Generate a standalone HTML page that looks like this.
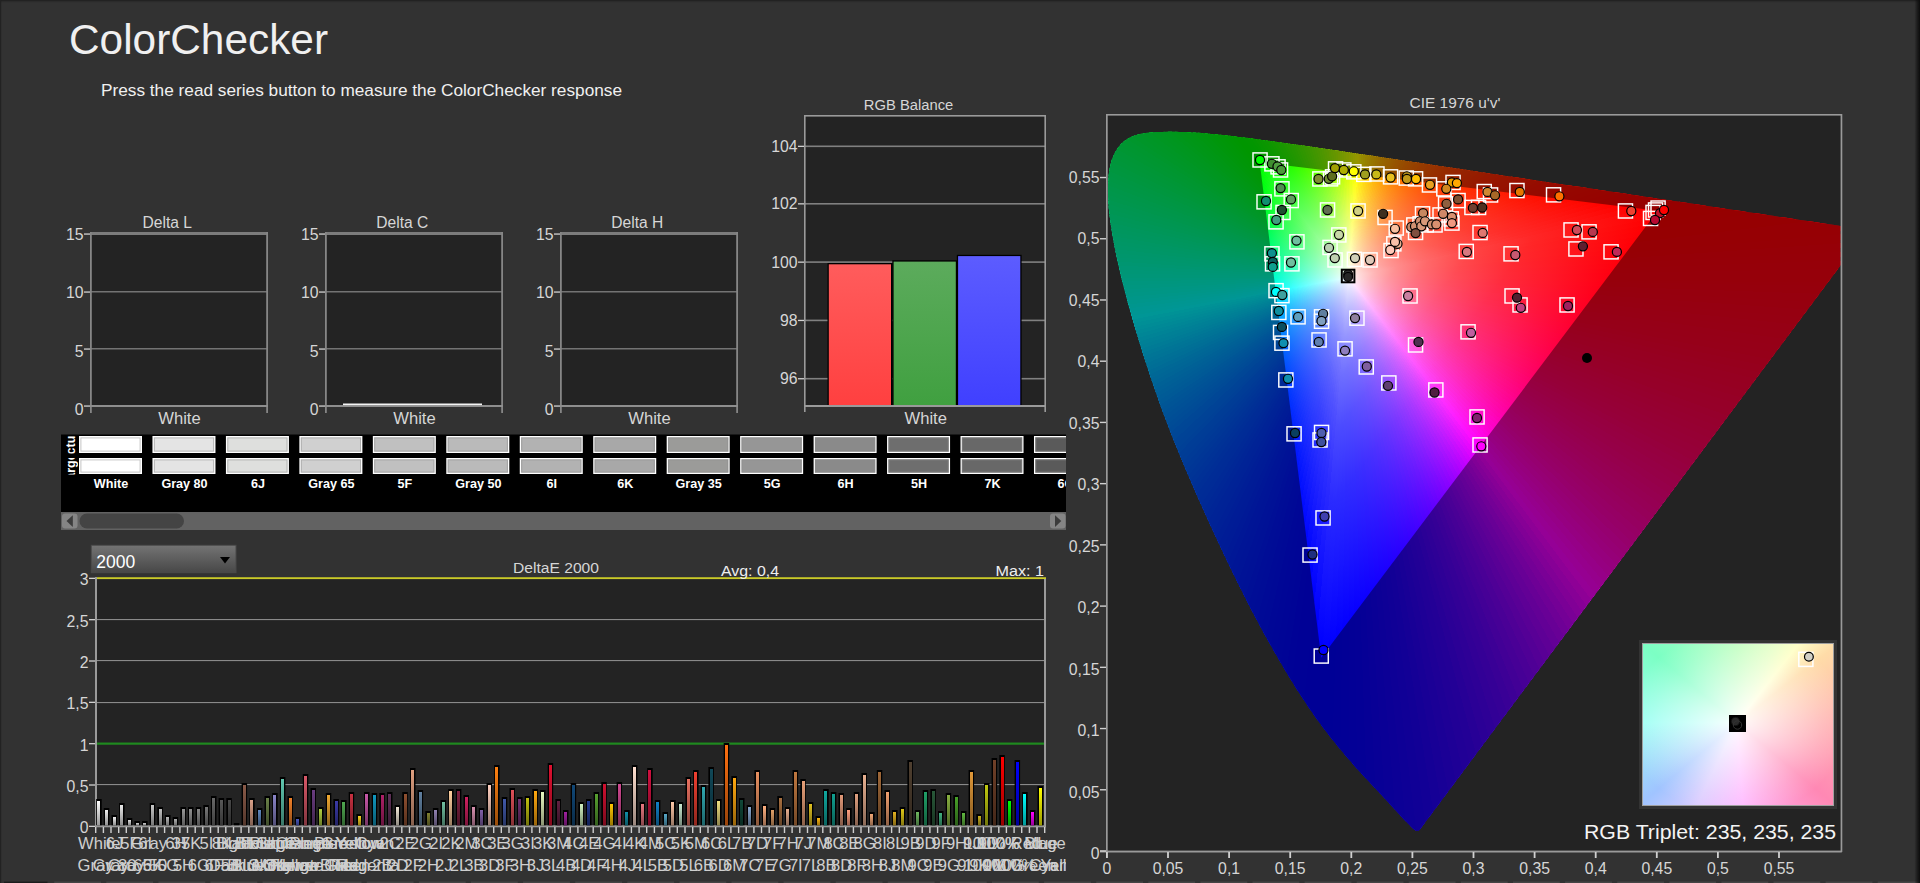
<!DOCTYPE html>
<html lang="en"><head><meta charset="utf-8"><title>ColorChecker</title>
<style>html,body{margin:0;padding:0;background:#323232;overflow:hidden}#p{position:relative;width:1920px;height:883px;overflow:hidden;background:#323232;font-family:"Liberation Sans",Arial,sans-serif}svg text{font-family:"Liberation Sans",Arial,sans-serif}</style></head>
<body><div id="p">
<svg style="position:absolute;left:0;top:0" width="1920" height="883" viewBox="0 0 1920 883">
<defs><linearGradient id="re" x1="0" y1="0" x2="1" y2="0"><stop offset="0" stop-color="#0c0c0c" stop-opacity="0"/><stop offset=".55" stop-color="#0c0c0c" stop-opacity=".6"/><stop offset="1" stop-color="#0c0c0c"/></linearGradient></defs><rect x="0" y="0" width="1920" height="1.2" fill="#222"/><rect x="0" y="1.2" width="1920" height="1" fill="#2b2b2b"/><rect x="0" y="0" width="1.2" height="883" fill="#222"/>
<text x="69.0" y="54.0" font-size="43" fill="#f0f0f0" textLength="259.0" lengthAdjust="spacingAndGlyphs">ColorChecker</text>
<text x="101.0" y="95.6" font-size="17.4" fill="#f0f0f0" textLength="521.0" lengthAdjust="spacingAndGlyphs">Press the read series button to measure the ColorChecker response</text>
<rect x="90" y="232" width="178" height="175" fill="#232323"/>
<rect x="90" y="232" width="178" height="3" fill="#7c7c7c"/>
<rect x="90" y="291.2" width="178" height="1.2" fill="#888"/>
<rect x="90" y="348.2" width="178" height="1.2" fill="#888"/>
<rect x="90" y="232" width="1.8" height="181" fill="#868686"/>
<rect x="266.2" y="232" width="1.8" height="181" fill="#868686"/>
<rect x="90" y="405" width="178" height="2" fill="#8e8e8e"/>
<rect x="84" y="233.4" width="6" height="1.3" fill="#d0d0d0"/>
<text x="83.5" y="240.4" font-size="15.8" fill="#d6d6d6" text-anchor="end">15</text>
<rect x="84" y="291.4" width="6" height="1.3" fill="#d0d0d0"/>
<text x="83.5" y="298.4" font-size="15.8" fill="#d6d6d6" text-anchor="end">10</text>
<rect x="84" y="348.4" width="6" height="1.3" fill="#d0d0d0"/>
<text x="83.5" y="356.5" font-size="15.8" fill="#d6d6d6" text-anchor="end">5</text>
<rect x="84" y="405.4" width="6" height="1.3" fill="#d0d0d0"/>
<text x="83.5" y="414.6" font-size="15.8" fill="#d6d6d6" text-anchor="end">0</text>
<text x="167.3" y="228.0" font-size="15.6" fill="#d6d6d6" text-anchor="middle">Delta L</text>
<text x="179.5" y="424.0" font-size="16.6" fill="#d6d6d6" text-anchor="middle">White</text>
<rect x="325" y="232" width="178" height="175" fill="#232323"/>
<rect x="325" y="232" width="178" height="3" fill="#7c7c7c"/>
<rect x="325" y="291.2" width="178" height="1.2" fill="#888"/>
<rect x="325" y="348.2" width="178" height="1.2" fill="#888"/>
<rect x="325" y="232" width="1.8" height="181" fill="#868686"/>
<rect x="501.2" y="232" width="1.8" height="181" fill="#868686"/>
<rect x="325" y="405" width="178" height="2" fill="#8e8e8e"/>
<rect x="319" y="233.4" width="6" height="1.3" fill="#d0d0d0"/>
<text x="318.5" y="240.4" font-size="15.8" fill="#d6d6d6" text-anchor="end">15</text>
<rect x="319" y="291.4" width="6" height="1.3" fill="#d0d0d0"/>
<text x="318.5" y="298.4" font-size="15.8" fill="#d6d6d6" text-anchor="end">10</text>
<rect x="319" y="348.4" width="6" height="1.3" fill="#d0d0d0"/>
<text x="318.5" y="356.5" font-size="15.8" fill="#d6d6d6" text-anchor="end">5</text>
<rect x="319" y="405.4" width="6" height="1.3" fill="#d0d0d0"/>
<text x="318.5" y="414.6" font-size="15.8" fill="#d6d6d6" text-anchor="end">0</text>
<text x="402.3" y="228.0" font-size="15.6" fill="#d6d6d6" text-anchor="middle">Delta C</text>
<text x="414.5" y="424.0" font-size="16.6" fill="#d6d6d6" text-anchor="middle">White</text>
<rect x="343" y="403.5" width="139" height="1.6" fill="#f4f4f4"/>
<rect x="560" y="232" width="178" height="175" fill="#232323"/>
<rect x="560" y="232" width="178" height="3" fill="#7c7c7c"/>
<rect x="560" y="291.2" width="178" height="1.2" fill="#888"/>
<rect x="560" y="348.2" width="178" height="1.2" fill="#888"/>
<rect x="560" y="232" width="1.8" height="181" fill="#868686"/>
<rect x="736.2" y="232" width="1.8" height="181" fill="#868686"/>
<rect x="560" y="405" width="178" height="2" fill="#8e8e8e"/>
<rect x="554" y="233.4" width="6" height="1.3" fill="#d0d0d0"/>
<text x="553.5" y="240.4" font-size="15.8" fill="#d6d6d6" text-anchor="end">15</text>
<rect x="554" y="291.4" width="6" height="1.3" fill="#d0d0d0"/>
<text x="553.5" y="298.4" font-size="15.8" fill="#d6d6d6" text-anchor="end">10</text>
<rect x="554" y="348.4" width="6" height="1.3" fill="#d0d0d0"/>
<text x="553.5" y="356.5" font-size="15.8" fill="#d6d6d6" text-anchor="end">5</text>
<rect x="554" y="405.4" width="6" height="1.3" fill="#d0d0d0"/>
<text x="553.5" y="414.6" font-size="15.8" fill="#d6d6d6" text-anchor="end">0</text>
<text x="637.3" y="228.0" font-size="15.6" fill="#d6d6d6" text-anchor="middle">Delta H</text>
<text x="649.5" y="424.0" font-size="16.6" fill="#d6d6d6" text-anchor="middle">White</text>
<rect x="804" y="115" width="242" height="291" fill="#232323"/>
<rect x="804" y="145.5" width="242" height="1.6" fill="#808080"/>
<rect x="804" y="203" width="242" height="1.6" fill="#808080"/>
<rect x="804" y="261.3" width="242" height="1.6" fill="#808080"/>
<rect x="804" y="319.6" width="242" height="1.6" fill="#808080"/>
<rect x="804" y="377.9" width="242" height="1.6" fill="#808080"/>
<rect x="804" y="115" width="242" height="1.6" fill="#9a9a9a"/>
<rect x="804" y="115" width="1.6" height="297" fill="#9a9a9a"/>
<rect x="1044.4" y="115" width="1.6" height="297" fill="#9a9a9a"/>
<rect x="804" y="405" width="242" height="2" fill="#9a9a9a"/>
<rect x="798" y="145.7" width="6" height="1.3" fill="#d0d0d0"/>
<text x="797.5" y="151.9" font-size="15.8" fill="#d6d6d6" text-anchor="end">104</text>
<rect x="798" y="203.2" width="6" height="1.3" fill="#d0d0d0"/>
<text x="797.5" y="209.4" font-size="15.8" fill="#d6d6d6" text-anchor="end">102</text>
<rect x="798" y="261.5" width="6" height="1.3" fill="#d0d0d0"/>
<text x="797.5" y="267.7" font-size="15.8" fill="#d6d6d6" text-anchor="end">100</text>
<rect x="798" y="319.8" width="6" height="1.3" fill="#d0d0d0"/>
<text x="797.5" y="326.0" font-size="15.8" fill="#d6d6d6" text-anchor="end">98</text>
<rect x="798" y="378.1" width="6" height="1.3" fill="#d0d0d0"/>
<text x="797.5" y="384.3" font-size="15.8" fill="#d6d6d6" text-anchor="end">96</text>
<text x="908.6" y="109.8" font-size="15.5" fill="#d6d6d6" text-anchor="middle" textLength="89.5" lengthAdjust="spacingAndGlyphs">RGB Balance</text>
<text x="925.7" y="424.0" font-size="16.6" fill="#d6d6d6" text-anchor="middle">White</text>
<defs><linearGradient id="gr" x1="0" y1="0" x2="0" y2="1"><stop offset="0" stop-color="#ff5c5c"/><stop offset="1" stop-color="#ff4040"/></linearGradient><linearGradient id="gg" x1="0" y1="0" x2="0" y2="1"><stop offset="0" stop-color="#5cab5c"/><stop offset="1" stop-color="#40a040"/></linearGradient><linearGradient id="gb" x1="0" y1="0" x2="0" y2="1"><stop offset="0" stop-color="#5c5cff"/><stop offset="1" stop-color="#4040ff"/></linearGradient></defs>
<rect x="827.5" y="263" width="64.8" height="142" fill="#000"/>
<rect x="828.8" y="264.3" width="62.2" height="140.7" fill="url(#gr)"/>
<rect x="892.3" y="260.3" width="64.8" height="144.7" fill="#000"/>
<rect x="893.6" y="261.6" width="62.2" height="143.4" fill="url(#gg)"/>
<rect x="956.8" y="254.8" width="64.8" height="150.2" fill="#000"/>
<rect x="958.1" y="256.1" width="62.2" height="148.9" fill="url(#gb)"/>
<rect x="61" y="434.5" width="1005" height="77.5" fill="#000"/>
<clipPath id="cs"><rect x="61" y="434" width="1005" height="78"/></clipPath><g clip-path="url(#cs)">
<rect x="79" y="436" width="63" height="17" fill="#fff"/>
<rect x="80.3" y="437.3" width="60.4" height="14.4" fill="#ffffff"/>
<rect x="80.9" y="437.9" width="59.2" height="13.2" fill="none" stroke="#8c8c8c" stroke-opacity=".5"/>
<rect x="79" y="458" width="63" height="16" fill="#fff"/>
<rect x="80.3" y="459.3" width="60.4" height="13.4" fill="#ffffff"/>
<rect x="80.9" y="459.9" width="59.2" height="12.2" fill="none" stroke="#8c8c8c" stroke-opacity=".5"/>
<text x="111.0" y="487.6" font-size="12.6" fill="#fff" text-anchor="middle" font-weight="bold">White</text>
<rect x="152.46" y="436" width="63" height="17" fill="#fff"/>
<rect x="153.76" y="437.3" width="60.4" height="14.4" fill="#e4e4e4"/>
<rect x="154.4" y="437.9" width="59.2" height="13.2" fill="none" stroke="#8c8c8c" stroke-opacity=".5"/>
<rect x="152.46" y="458" width="63" height="16" fill="#fff"/>
<rect x="153.76" y="459.3" width="60.4" height="13.4" fill="#e4e4e4"/>
<rect x="154.4" y="459.9" width="59.2" height="12.2" fill="none" stroke="#8c8c8c" stroke-opacity=".5"/>
<text x="184.5" y="487.6" font-size="12.6" fill="#fff" text-anchor="middle" font-weight="bold">Gray 80</text>
<rect x="225.92" y="436" width="63" height="17" fill="#fff"/>
<rect x="227.22" y="437.3" width="60.4" height="14.4" fill="#dedfdd"/>
<rect x="227.8" y="437.9" width="59.2" height="13.2" fill="none" stroke="#8c8c8c" stroke-opacity=".5"/>
<rect x="225.92" y="458" width="63" height="16" fill="#fff"/>
<rect x="227.22" y="459.3" width="60.4" height="13.4" fill="#dedfdd"/>
<rect x="227.8" y="459.9" width="59.2" height="12.2" fill="none" stroke="#8c8c8c" stroke-opacity=".5"/>
<text x="257.9" y="487.6" font-size="12.6" fill="#fff" text-anchor="middle" font-weight="bold">6J</text>
<rect x="299.38" y="436" width="63" height="17" fill="#fff"/>
<rect x="300.68" y="437.3" width="60.4" height="14.4" fill="#d0d0d0"/>
<rect x="301.3" y="437.9" width="59.2" height="13.2" fill="none" stroke="#8c8c8c" stroke-opacity=".5"/>
<rect x="299.38" y="458" width="63" height="16" fill="#fff"/>
<rect x="300.68" y="459.3" width="60.4" height="13.4" fill="#d0d0d0"/>
<rect x="301.3" y="459.9" width="59.2" height="12.2" fill="none" stroke="#8c8c8c" stroke-opacity=".5"/>
<text x="331.4" y="487.6" font-size="12.6" fill="#fff" text-anchor="middle" font-weight="bold">Gray 65</text>
<rect x="372.84" y="436" width="63" height="17" fill="#fff"/>
<rect x="374.14" y="437.3" width="60.4" height="14.4" fill="#c0c0c0"/>
<rect x="374.7" y="437.9" width="59.2" height="13.2" fill="none" stroke="#8c8c8c" stroke-opacity=".5"/>
<rect x="372.84" y="458" width="63" height="16" fill="#fff"/>
<rect x="374.14" y="459.3" width="60.4" height="13.4" fill="#c0c0c0"/>
<rect x="374.7" y="459.9" width="59.2" height="12.2" fill="none" stroke="#8c8c8c" stroke-opacity=".5"/>
<text x="404.8" y="487.6" font-size="12.6" fill="#fff" text-anchor="middle" font-weight="bold">5F</text>
<rect x="446.3" y="436" width="63" height="17" fill="#fff"/>
<rect x="447.6" y="437.3" width="60.4" height="14.4" fill="#bababa"/>
<rect x="448.2" y="437.9" width="59.2" height="13.2" fill="none" stroke="#8c8c8c" stroke-opacity=".5"/>
<rect x="446.3" y="458" width="63" height="16" fill="#fff"/>
<rect x="447.6" y="459.3" width="60.4" height="13.4" fill="#bababa"/>
<rect x="448.2" y="459.9" width="59.2" height="12.2" fill="none" stroke="#8c8c8c" stroke-opacity=".5"/>
<text x="478.3" y="487.6" font-size="12.6" fill="#fff" text-anchor="middle" font-weight="bold">Gray 50</text>
<rect x="519.76" y="436" width="63" height="17" fill="#fff"/>
<rect x="521.06" y="437.3" width="60.4" height="14.4" fill="#b2b2b2"/>
<rect x="521.7" y="437.9" width="59.2" height="13.2" fill="none" stroke="#8c8c8c" stroke-opacity=".5"/>
<rect x="519.76" y="458" width="63" height="16" fill="#fff"/>
<rect x="521.06" y="459.3" width="60.4" height="13.4" fill="#b2b2b2"/>
<rect x="521.7" y="459.9" width="59.2" height="12.2" fill="none" stroke="#8c8c8c" stroke-opacity=".5"/>
<text x="551.8" y="487.6" font-size="12.6" fill="#fff" text-anchor="middle" font-weight="bold">6I</text>
<rect x="593.22" y="436" width="63" height="17" fill="#fff"/>
<rect x="594.52" y="437.3" width="60.4" height="14.4" fill="#a8a8a8"/>
<rect x="595.1" y="437.9" width="59.2" height="13.2" fill="none" stroke="#8c8c8c" stroke-opacity=".5"/>
<rect x="593.22" y="458" width="63" height="16" fill="#fff"/>
<rect x="594.52" y="459.3" width="60.4" height="13.4" fill="#a8a8a8"/>
<rect x="595.1" y="459.9" width="59.2" height="12.2" fill="none" stroke="#8c8c8c" stroke-opacity=".5"/>
<text x="625.2" y="487.6" font-size="12.6" fill="#fff" text-anchor="middle" font-weight="bold">6K</text>
<rect x="666.68" y="436" width="63" height="17" fill="#fff"/>
<rect x="667.98" y="437.3" width="60.4" height="14.4" fill="#9b9b99"/>
<rect x="668.6" y="437.9" width="59.2" height="13.2" fill="none" stroke="#8c8c8c" stroke-opacity=".5"/>
<rect x="666.68" y="458" width="63" height="16" fill="#fff"/>
<rect x="667.98" y="459.3" width="60.4" height="13.4" fill="#9b9b99"/>
<rect x="668.6" y="459.9" width="59.2" height="12.2" fill="none" stroke="#8c8c8c" stroke-opacity=".5"/>
<text x="698.7" y="487.6" font-size="12.6" fill="#fff" text-anchor="middle" font-weight="bold">Gray 35</text>
<rect x="740.14" y="436" width="63" height="17" fill="#fff"/>
<rect x="741.44" y="437.3" width="60.4" height="14.4" fill="#969696"/>
<rect x="742.0" y="437.9" width="59.2" height="13.2" fill="none" stroke="#8c8c8c" stroke-opacity=".5"/>
<rect x="740.14" y="458" width="63" height="16" fill="#fff"/>
<rect x="741.44" y="459.3" width="60.4" height="13.4" fill="#969696"/>
<rect x="742.0" y="459.9" width="59.2" height="12.2" fill="none" stroke="#8c8c8c" stroke-opacity=".5"/>
<text x="772.1" y="487.6" font-size="12.6" fill="#fff" text-anchor="middle" font-weight="bold">5G</text>
<rect x="813.6" y="436" width="63" height="17" fill="#fff"/>
<rect x="814.9" y="437.3" width="60.4" height="14.4" fill="#8a8a8a"/>
<rect x="815.5" y="437.9" width="59.2" height="13.2" fill="none" stroke="#8c8c8c" stroke-opacity=".5"/>
<rect x="813.6" y="458" width="63" height="16" fill="#fff"/>
<rect x="814.9" y="459.3" width="60.4" height="13.4" fill="#8a8a8a"/>
<rect x="815.5" y="459.9" width="59.2" height="12.2" fill="none" stroke="#8c8c8c" stroke-opacity=".5"/>
<text x="845.6" y="487.6" font-size="12.6" fill="#fff" text-anchor="middle" font-weight="bold">6H</text>
<rect x="887.06" y="436" width="63" height="17" fill="#fff"/>
<rect x="888.36" y="437.3" width="60.4" height="14.4" fill="#6e6e6e"/>
<rect x="889.0" y="437.9" width="59.2" height="13.2" fill="none" stroke="#8c8c8c" stroke-opacity=".5"/>
<rect x="887.06" y="458" width="63" height="16" fill="#fff"/>
<rect x="888.36" y="459.3" width="60.4" height="13.4" fill="#6e6e6e"/>
<rect x="889.0" y="459.9" width="59.2" height="12.2" fill="none" stroke="#8c8c8c" stroke-opacity=".5"/>
<text x="919.1" y="487.6" font-size="12.6" fill="#fff" text-anchor="middle" font-weight="bold">5H</text>
<rect x="960.52" y="436" width="63" height="17" fill="#fff"/>
<rect x="961.82" y="437.3" width="60.4" height="14.4" fill="#686868"/>
<rect x="962.4" y="437.9" width="59.2" height="13.2" fill="none" stroke="#8c8c8c" stroke-opacity=".5"/>
<rect x="960.52" y="458" width="63" height="16" fill="#fff"/>
<rect x="961.82" y="459.3" width="60.4" height="13.4" fill="#686868"/>
<rect x="962.4" y="459.9" width="59.2" height="12.2" fill="none" stroke="#8c8c8c" stroke-opacity=".5"/>
<text x="992.5" y="487.6" font-size="12.6" fill="#fff" text-anchor="middle" font-weight="bold">7K</text>
<rect x="1033.98" y="436" width="63" height="17" fill="#fff"/>
<rect x="1035.28" y="437.3" width="60.4" height="14.4" fill="#5a5a5a"/>
<rect x="1035.9" y="437.9" width="59.2" height="13.2" fill="none" stroke="#8c8c8c" stroke-opacity=".5"/>
<rect x="1033.98" y="458" width="63" height="16" fill="#fff"/>
<rect x="1035.28" y="459.3" width="60.4" height="13.4" fill="#5a5a5a"/>
<rect x="1035.9" y="459.9" width="59.2" height="12.2" fill="none" stroke="#8c8c8c" stroke-opacity=".5"/>
<text x="1066.0" y="487.6" font-size="12.6" fill="#fff" text-anchor="middle" font-weight="bold">6G</text>
</g>
<clipPath id="ca"><rect x="62" y="436" width="16" height="17.5"/></clipPath><clipPath id="cb"><rect x="62" y="458" width="16" height="16.5"/></clipPath>
<g clip-path="url(#ca)"><text transform="translate(74.5,463.5) rotate(-90)" font-size="12.5" font-weight="bold" fill="#fff">Actual</text></g>
<g clip-path="url(#cb)"><text transform="translate(74.5,486.5) rotate(-90)" font-size="12.5" font-weight="bold" fill="#fff">Target</text></g>
<rect x="61" y="512" width="1005" height="18" fill="#626262"/>
<rect x="62" y="513.5" width="15.5" height="15" fill="#858585" rx="3"/>
<path d="M72.8 515.2v11.8l-6.3-5.9z" fill="#3c3c3c"/>
<rect x="1050" y="513.5" width="15.5" height="15" fill="#858585" rx="3"/>
<path d="M1055 515.2v11.8l6.3-5.9z" fill="#3c3c3c"/>
<rect x="79.5" y="513.5" width="104.5" height="15" fill="#444" rx="7.5"/>
<defs><linearGradient id="dd" x1="0" y1="0" x2="0" y2="1"><stop offset="0" stop-color="#737373"/><stop offset="1" stop-color="#484848"/></linearGradient></defs>
<rect x="90.8" y="544.8" width="145.7" height="28.4" fill="#484848"/>
<rect x="91.8" y="545.8" width="143.7" height="26.4" fill="url(#dd)"/>
<text x="96.3" y="567.5" font-size="17.5" fill="#fff">2000</text>
<path d="M220 557h10l-5 6.5z" fill="#000"/>
<rect x="95" y="577" width="951" height="249" fill="#232323"/>
<rect x="95" y="784" width="951" height="1.1" fill="#8a8a8a"/>
<rect x="95" y="702" width="951" height="1.1" fill="#8a8a8a"/>
<rect x="95" y="660" width="951" height="1.1" fill="#8a8a8a"/>
<rect x="95" y="619" width="951" height="1.1" fill="#8a8a8a"/>
<rect x="95" y="742.53" width="951" height="2.2" fill="#1f8a1f"/>
<rect x="95" y="577.2" width="951" height="1.9" fill="#caca2a"/>
<rect x="95" y="577" width="2" height="250" fill="#9a9a9a"/>
<rect x="1044" y="579" width="2" height="248" fill="#9a9a9a"/>
<rect x="95" y="825.3" width="951" height="2" fill="#9a9a9a"/>
<rect x="89" y="825.7" width="6" height="1.3" fill="#d0d0d0"/>
<text x="88.5" y="833.4" font-size="15.8" fill="#d6d6d6" text-anchor="end">0</text>
<rect x="89" y="784.365" width="6" height="1.3" fill="#d0d0d0"/>
<text x="88.5" y="792.1" font-size="15.8" fill="#d6d6d6" text-anchor="end">0,5</text>
<rect x="89" y="743.03" width="6" height="1.3" fill="#d0d0d0"/>
<text x="88.5" y="750.7" font-size="15.8" fill="#d6d6d6" text-anchor="end">1</text>
<rect x="89" y="701.695" width="6" height="1.3" fill="#d0d0d0"/>
<text x="88.5" y="709.4" font-size="15.8" fill="#d6d6d6" text-anchor="end">1,5</text>
<rect x="89" y="660.36" width="6" height="1.3" fill="#d0d0d0"/>
<text x="88.5" y="668.1" font-size="15.8" fill="#d6d6d6" text-anchor="end">2</text>
<rect x="89" y="619.025" width="6" height="1.3" fill="#d0d0d0"/>
<text x="88.5" y="626.7" font-size="15.8" fill="#d6d6d6" text-anchor="end">2,5</text>
<rect x="89" y="577.7" width="6" height="1.3" fill="#d0d0d0"/>
<text x="88.5" y="585.4" font-size="15.8" fill="#d6d6d6" text-anchor="end">3</text>
<text x="556.0" y="573.0" font-size="15.5" fill="#d6d6d6" text-anchor="middle" textLength="86.0" lengthAdjust="spacingAndGlyphs">DeltaE 2000</text>
<text x="721.0" y="576.0" font-size="15.5" fill="#eee" textLength="58.0" lengthAdjust="spacingAndGlyphs">Avg: 0,4</text>
<text x="995.5" y="576.0" font-size="15.5" fill="#eee" textLength="48.5" lengthAdjust="spacingAndGlyphs">Max: 1</text>
<defs><linearGradient id="bs" x1="0" y1="0" x2="0" y2="1"><stop offset="0" stop-color="#000" stop-opacity="0"/><stop offset="1" stop-color="#000" stop-opacity=".4"/></linearGradient></defs>
<path fill="#000" d="M96.2 799h5.5V825.3h-5.5zM103.8 808h5.5V825.3h-5.5zM111.5 815h5.5V825.3h-5.5zM119.1 803h5.5V825.3h-5.5zM126.8 818h5.5V825.3h-5.5zM134.4 821h5.5V825.3h-5.5zM142.1 821h5.5V825.3h-5.5zM149.7 803h5.5V825.3h-5.5zM157.4 807h5.5V825.3h-5.5zM165.1 815h5.5V825.3h-5.5zM172.7 817h5.5V825.3h-5.5zM180.4 807h5.5V825.3h-5.5zM188.0 807h5.5V825.3h-5.5zM195.7 807h5.5V825.3h-5.5zM203.3 805h5.5V825.3h-5.5zM211.0 796h5.5V825.3h-5.5zM218.6 798h5.5V825.3h-5.5zM226.3 798h5.5V825.3h-5.5zM233.9 823h5.5V825.3h-5.5zM241.6 783h5.5V825.3h-5.5zM249.2 798h5.5V825.3h-5.5zM256.9 808h5.5V825.3h-5.5zM264.5 796h5.5V825.3h-5.5zM272.2 793h5.5V825.3h-5.5zM279.9 777h5.5V825.3h-5.5zM287.5 796h5.5V825.3h-5.5zM295.2 817h5.5V825.3h-5.5zM302.8 774h5.5V825.3h-5.5zM310.5 788h5.5V825.3h-5.5zM318.1 807h5.5V825.3h-5.5zM325.8 793h5.5V825.3h-5.5zM333.4 799h5.5V825.3h-5.5zM341.1 800h5.5V825.3h-5.5zM348.7 792h5.5V825.3h-5.5zM356.4 814h5.5V825.3h-5.5zM364.0 792h5.5V825.3h-5.5zM371.7 793h5.5V825.3h-5.5zM379.3 793h5.5V825.3h-5.5zM387.0 792h5.5V825.3h-5.5zM394.7 805h5.5V825.3h-5.5zM402.3 792h5.5V825.3h-5.5zM410.0 768h5.5V825.3h-5.5zM417.6 790h5.5V825.3h-5.5zM425.3 811h5.5V825.3h-5.5zM432.9 808h5.5V825.3h-5.5zM440.6 800h5.5V825.3h-5.5zM448.2 789h5.5V825.3h-5.5zM455.9 789h5.5V825.3h-5.5zM463.5 795h5.5V825.3h-5.5zM471.2 805h5.5V825.3h-5.5zM478.8 808h5.5V825.3h-5.5zM486.5 783h5.5V825.3h-5.5zM494.1 765h5.5V825.3h-5.5zM501.8 797h5.5V825.3h-5.5zM509.5 788h5.5V825.3h-5.5zM517.1 797h5.5V825.3h-5.5zM524.8 796h5.5V825.3h-5.5zM532.4 789h5.5V825.3h-5.5zM540.1 790h5.5V825.3h-5.5zM547.7 763h5.5V825.3h-5.5zM555.4 799h5.5V825.3h-5.5zM563.0 810h5.5V825.3h-5.5zM570.7 783h5.5V825.3h-5.5zM578.3 802h5.5V825.3h-5.5zM586.0 799h5.5V825.3h-5.5zM593.6 792h5.5V825.3h-5.5zM601.3 782h5.5V825.3h-5.5zM608.9 802h5.5V825.3h-5.5zM616.6 782h5.5V825.3h-5.5zM624.2 810h5.5V825.3h-5.5zM631.9 765h5.5V825.3h-5.5zM639.6 802h5.5V825.3h-5.5zM647.2 768h5.5V825.3h-5.5zM654.9 800h5.5V825.3h-5.5zM662.5 812h5.5V825.3h-5.5zM670.2 800h5.5V825.3h-5.5zM677.8 802h5.5V825.3h-5.5zM685.5 777h5.5V825.3h-5.5zM693.1 770h5.5V825.3h-5.5zM700.8 785h5.5V825.3h-5.5zM708.4 767h5.5V825.3h-5.5zM716.1 799h5.5V825.3h-5.5zM723.7 743h5.5V825.3h-5.5zM731.4 776h5.5V825.3h-5.5zM739.0 798h5.5V825.3h-5.5zM746.7 805h5.5V825.3h-5.5zM754.4 770h5.5V825.3h-5.5zM762.0 804h5.5V825.3h-5.5zM769.7 808h5.5V825.3h-5.5zM777.3 796h5.5V825.3h-5.5zM785.0 807h5.5V825.3h-5.5zM792.6 770h5.5V825.3h-5.5zM800.3 779h5.5V825.3h-5.5zM807.9 802h5.5V825.3h-5.5zM815.6 816h5.5V825.3h-5.5zM823.2 789h5.5V825.3h-5.5zM830.9 792h5.5V825.3h-5.5zM838.5 793h5.5V825.3h-5.5zM846.2 808h5.5V825.3h-5.5zM853.8 792h5.5V825.3h-5.5zM861.5 773h5.5V825.3h-5.5zM869.2 812h5.5V825.3h-5.5zM876.8 770h5.5V825.3h-5.5zM884.5 790h5.5V825.3h-5.5zM892.1 810h5.5V825.3h-5.5zM899.8 807h5.5V825.3h-5.5zM907.4 760h5.5V825.3h-5.5zM915.1 810h5.5V825.3h-5.5zM922.7 790h5.5V825.3h-5.5zM930.4 789h5.5V825.3h-5.5zM938.0 811h5.5V825.3h-5.5zM945.7 793h5.5V825.3h-5.5zM953.3 795h5.5V825.3h-5.5zM961.0 811h5.5V825.3h-5.5zM968.6 770h5.5V825.3h-5.5zM976.3 814h5.5V825.3h-5.5zM984.0 783h5.5V825.3h-5.5zM991.6 758h5.5V825.3h-5.5zM999.3 755h5.5V825.3h-5.5zM1006.9 799h5.5V825.3h-5.5zM1014.6 760h5.5V825.3h-5.5zM1022.2 792h5.5V825.3h-5.5zM1029.9 810h5.5V825.3h-5.5zM1037.5 786h5.5V825.3h-5.5z"/>
<rect x="97" y="801" width="3" height="24.3" fill="#ffffff"/>
<rect x="105" y="810" width="3" height="15.3" fill="#f0f0f0"/>
<rect x="113" y="817" width="3" height="8.3" fill="#ececec"/>
<rect x="120" y="805" width="3" height="20.3" fill="#e8e8e8"/>
<rect x="128" y="820" width="3" height="5.3" fill="#dcdcdc"/>
<rect x="136" y="823" width="3" height="2.3" fill="#d4d4d4"/>
<rect x="143" y="823" width="3" height="2.3" fill="#d0d0d0"/>
<rect x="151" y="805" width="3" height="20.3" fill="#c8c8c8"/>
<rect x="159" y="809" width="3" height="16.3" fill="#c0c0c0"/>
<rect x="166" y="817" width="3" height="8.3" fill="#b8b8b8"/>
<rect x="174" y="819" width="3" height="6.3" fill="#b0b0b0"/>
<rect x="182" y="809" width="3" height="16.3" fill="#989898"/>
<rect x="189" y="809" width="3" height="16.3" fill="#909090"/>
<rect x="197" y="809" width="3" height="16.3" fill="#888888"/>
<rect x="205" y="807" width="3" height="18.3" fill="#787878"/>
<rect x="212" y="798" width="3" height="27.3" fill="#686868"/>
<rect x="220" y="800" width="3" height="25.3" fill="#585858"/>
<rect x="228" y="800" width="3" height="25.3" fill="#484848"/>
<rect x="243" y="785" width="3" height="40.3" fill="#8a5a48"/>
<rect x="250" y="800" width="3" height="25.3" fill="#d8a088"/>
<rect x="258" y="810" width="3" height="15.3" fill="#5f88c0"/>
<rect x="266" y="798" width="3" height="27.3" fill="#6a8048"/>
<rect x="273" y="795" width="3" height="30.3" fill="#8a84c8"/>
<rect x="281" y="779" width="3" height="46.3" fill="#60c8b0"/>
<rect x="289" y="798" width="3" height="27.3" fill="#f08028"/>
<rect x="296" y="819" width="3" height="6.3" fill="#4858c0"/>
<rect x="304" y="776" width="3" height="49.3" fill="#d85868"/>
<rect x="312" y="790" width="3" height="35.3" fill="#6a3c80"/>
<rect x="319" y="809" width="3" height="16.3" fill="#b0d040"/>
<rect x="327" y="795" width="3" height="30.3" fill="#f0a830"/>
<rect x="335" y="801" width="3" height="24.3" fill="#3a3aa8"/>
<rect x="342" y="802" width="3" height="23.3" fill="#50a850"/>
<rect x="350" y="794" width="3" height="31.3" fill="#c83040"/>
<rect x="358" y="816" width="3" height="9.3" fill="#f8d020"/>
<rect x="365" y="794" width="3" height="31.3" fill="#c858a8"/>
<rect x="373" y="795" width="3" height="30.3" fill="#1098c0"/>
<rect x="381" y="795" width="3" height="30.3" fill="#b02068"/>
<rect x="388" y="794" width="3" height="31.3" fill="#603058"/>
<rect x="396" y="807" width="3" height="18.3" fill="#f0e8d8"/>
<rect x="404" y="794" width="3" height="31.3" fill="#905030"/>
<rect x="411" y="770" width="3" height="55.3" fill="#e0a080"/>
<rect x="419" y="792" width="3" height="33.3" fill="#6080a0"/>
<rect x="427" y="813" width="3" height="12.3" fill="#808030"/>
<rect x="434" y="810" width="3" height="15.3" fill="#9080b0"/>
<rect x="442" y="802" width="3" height="23.3" fill="#70c0a0"/>
<rect x="449" y="791" width="3" height="34.3" fill="#ffd0a0"/>
<rect x="457" y="791" width="3" height="34.3" fill="#802040"/>
<rect x="465" y="797" width="3" height="28.3" fill="#d02060"/>
<rect x="472" y="807" width="3" height="18.3" fill="#d890b0"/>
<rect x="480" y="810" width="3" height="15.3" fill="#8060a8"/>
<rect x="488" y="785" width="3" height="40.3" fill="#ffd0c0"/>
<rect x="495" y="767" width="3" height="58.3" fill="#ff8010"/>
<rect x="503" y="799" width="3" height="26.3" fill="#4058a8"/>
<rect x="511" y="790" width="3" height="35.3" fill="#e05058"/>
<rect x="518" y="799" width="3" height="26.3" fill="#703070"/>
<rect x="526" y="798" width="3" height="27.3" fill="#c0c010"/>
<rect x="534" y="791" width="3" height="34.3" fill="#ffa810"/>
<rect x="541" y="792" width="3" height="33.3" fill="#e8f8c0"/>
<rect x="549" y="765" width="3" height="60.3" fill="#e01030"/>
<rect x="557" y="801" width="3" height="24.3" fill="#602040"/>
<rect x="564" y="812" width="3" height="13.3" fill="#a020a0"/>
<rect x="572" y="785" width="3" height="40.3" fill="#104878"/>
<rect x="580" y="804" width="3" height="21.3" fill="#d0f0c0"/>
<rect x="587" y="801" width="3" height="24.3" fill="#203890"/>
<rect x="595" y="794" width="3" height="31.3" fill="#58a030"/>
<rect x="603" y="784" width="3" height="41.3" fill="#d01030"/>
<rect x="610" y="804" width="3" height="21.3" fill="#ffc800"/>
<rect x="618" y="784" width="3" height="41.3" fill="#d04890"/>
<rect x="625" y="812" width="3" height="13.3" fill="#1090a8"/>
<rect x="633" y="767" width="3" height="58.3" fill="#ffe0d0"/>
<rect x="641" y="804" width="3" height="21.3" fill="#e87880"/>
<rect x="648" y="770" width="3" height="55.3" fill="#d01040"/>
<rect x="656" y="802" width="3" height="23.3" fill="#1080c8"/>
<rect x="664" y="814" width="3" height="11.3" fill="#58a8c8"/>
<rect x="671" y="802" width="3" height="23.3" fill="#ffc8a8"/>
<rect x="679" y="804" width="3" height="21.3" fill="#c8e8d0"/>
<rect x="687" y="779" width="3" height="46.3" fill="#e87060"/>
<rect x="694" y="772" width="3" height="53.3" fill="#f04030"/>
<rect x="702" y="787" width="3" height="38.3" fill="#30a8b0"/>
<rect x="710" y="769" width="3" height="56.3" fill="#104858"/>
<rect x="717" y="801" width="3" height="24.3" fill="#f0e080"/>
<rect x="725" y="745" width="3" height="80.3" fill="#ff7010"/>
<rect x="733" y="778" width="3" height="47.3" fill="#ffa810"/>
<rect x="740" y="800" width="3" height="25.3" fill="#104838"/>
<rect x="748" y="807" width="3" height="18.3" fill="#88a8d0"/>
<rect x="756" y="772" width="3" height="53.3" fill="#e89060"/>
<rect x="763" y="806" width="3" height="19.3" fill="#ffb080"/>
<rect x="771" y="810" width="3" height="15.3" fill="#e0a068"/>
<rect x="779" y="798" width="3" height="27.3" fill="#a87040"/>
<rect x="786" y="809" width="3" height="16.3" fill="#e8b090"/>
<rect x="794" y="772" width="3" height="53.3" fill="#c07840"/>
<rect x="802" y="781" width="3" height="44.3" fill="#e8a078"/>
<rect x="809" y="804" width="3" height="21.3" fill="#e0c020"/>
<rect x="817" y="818" width="3" height="7.3" fill="#ffb810"/>
<rect x="824" y="791" width="3" height="34.3" fill="#10a8a0"/>
<rect x="832" y="794" width="3" height="31.3" fill="#10a090"/>
<rect x="840" y="795" width="3" height="30.3" fill="#e09878"/>
<rect x="847" y="810" width="3" height="15.3" fill="#ffa080"/>
<rect x="855" y="794" width="3" height="31.3" fill="#e0a080"/>
<rect x="863" y="775" width="3" height="50.3" fill="#e8b090"/>
<rect x="870" y="814" width="3" height="11.3" fill="#f0a878"/>
<rect x="878" y="772" width="3" height="53.3" fill="#a06838"/>
<rect x="886" y="792" width="3" height="33.3" fill="#f0a070"/>
<rect x="893" y="812" width="3" height="13.3" fill="#e0b020"/>
<rect x="901" y="809" width="3" height="16.3" fill="#e0c818"/>
<rect x="909" y="762" width="3" height="63.3" fill="#504030"/>
<rect x="916" y="812" width="3" height="13.3" fill="#70b860"/>
<rect x="924" y="792" width="3" height="33.3" fill="#20a068"/>
<rect x="932" y="791" width="3" height="34.3" fill="#285838"/>
<rect x="939" y="813" width="3" height="12.3" fill="#40b080"/>
<rect x="947" y="795" width="3" height="30.3" fill="#88b040"/>
<rect x="955" y="797" width="3" height="28.3" fill="#48a028"/>
<rect x="962" y="813" width="3" height="12.3" fill="#60b840"/>
<rect x="970" y="772" width="3" height="53.3" fill="#e09838"/>
<rect x="978" y="816" width="3" height="9.3" fill="#c8b020"/>
<rect x="985" y="785" width="3" height="40.3" fill="#c0c810"/>
<rect x="993" y="760" width="3" height="65.3" fill="#704028"/>
<rect x="1001" y="757" width="3" height="68.3" fill="#ff0000"/>
<rect x="1008" y="801" width="3" height="24.3" fill="#00ff00"/>
<rect x="1016" y="762" width="3" height="63.3" fill="#0000ff"/>
<rect x="1023" y="794" width="3" height="31.3" fill="#00ffff"/>
<rect x="1031" y="812" width="3" height="13.3" fill="#ff00ff"/>
<rect x="1039" y="788" width="3" height="37.3" fill="#ffff00"/>
<rect x="97" y="801" width="3" height="24.3" fill="url(#bs)"/>
<rect x="105" y="810" width="3" height="15.3" fill="url(#bs)"/>
<rect x="113" y="817" width="3" height="8.3" fill="url(#bs)"/>
<rect x="120" y="805" width="3" height="20.3" fill="url(#bs)"/>
<rect x="128" y="820" width="3" height="5.3" fill="url(#bs)"/>
<rect x="136" y="823" width="3" height="2.3" fill="url(#bs)"/>
<rect x="143" y="823" width="3" height="2.3" fill="url(#bs)"/>
<rect x="151" y="805" width="3" height="20.3" fill="url(#bs)"/>
<rect x="159" y="809" width="3" height="16.3" fill="url(#bs)"/>
<rect x="166" y="817" width="3" height="8.3" fill="url(#bs)"/>
<rect x="174" y="819" width="3" height="6.3" fill="url(#bs)"/>
<rect x="182" y="809" width="3" height="16.3" fill="url(#bs)"/>
<rect x="189" y="809" width="3" height="16.3" fill="url(#bs)"/>
<rect x="197" y="809" width="3" height="16.3" fill="url(#bs)"/>
<rect x="205" y="807" width="3" height="18.3" fill="url(#bs)"/>
<rect x="212" y="798" width="3" height="27.3" fill="url(#bs)"/>
<rect x="220" y="800" width="3" height="25.3" fill="url(#bs)"/>
<rect x="228" y="800" width="3" height="25.3" fill="url(#bs)"/>
<rect x="243" y="785" width="3" height="40.3" fill="url(#bs)"/>
<rect x="250" y="800" width="3" height="25.3" fill="url(#bs)"/>
<rect x="258" y="810" width="3" height="15.3" fill="url(#bs)"/>
<rect x="266" y="798" width="3" height="27.3" fill="url(#bs)"/>
<rect x="273" y="795" width="3" height="30.3" fill="url(#bs)"/>
<rect x="281" y="779" width="3" height="46.3" fill="url(#bs)"/>
<rect x="289" y="798" width="3" height="27.3" fill="url(#bs)"/>
<rect x="296" y="819" width="3" height="6.3" fill="url(#bs)"/>
<rect x="304" y="776" width="3" height="49.3" fill="url(#bs)"/>
<rect x="312" y="790" width="3" height="35.3" fill="url(#bs)"/>
<rect x="319" y="809" width="3" height="16.3" fill="url(#bs)"/>
<rect x="327" y="795" width="3" height="30.3" fill="url(#bs)"/>
<rect x="335" y="801" width="3" height="24.3" fill="url(#bs)"/>
<rect x="342" y="802" width="3" height="23.3" fill="url(#bs)"/>
<rect x="350" y="794" width="3" height="31.3" fill="url(#bs)"/>
<rect x="358" y="816" width="3" height="9.3" fill="url(#bs)"/>
<rect x="365" y="794" width="3" height="31.3" fill="url(#bs)"/>
<rect x="373" y="795" width="3" height="30.3" fill="url(#bs)"/>
<rect x="381" y="795" width="3" height="30.3" fill="url(#bs)"/>
<rect x="388" y="794" width="3" height="31.3" fill="url(#bs)"/>
<rect x="396" y="807" width="3" height="18.3" fill="url(#bs)"/>
<rect x="404" y="794" width="3" height="31.3" fill="url(#bs)"/>
<rect x="411" y="770" width="3" height="55.3" fill="url(#bs)"/>
<rect x="419" y="792" width="3" height="33.3" fill="url(#bs)"/>
<rect x="427" y="813" width="3" height="12.3" fill="url(#bs)"/>
<rect x="434" y="810" width="3" height="15.3" fill="url(#bs)"/>
<rect x="442" y="802" width="3" height="23.3" fill="url(#bs)"/>
<rect x="449" y="791" width="3" height="34.3" fill="url(#bs)"/>
<rect x="457" y="791" width="3" height="34.3" fill="url(#bs)"/>
<rect x="465" y="797" width="3" height="28.3" fill="url(#bs)"/>
<rect x="472" y="807" width="3" height="18.3" fill="url(#bs)"/>
<rect x="480" y="810" width="3" height="15.3" fill="url(#bs)"/>
<rect x="488" y="785" width="3" height="40.3" fill="url(#bs)"/>
<rect x="495" y="767" width="3" height="58.3" fill="url(#bs)"/>
<rect x="503" y="799" width="3" height="26.3" fill="url(#bs)"/>
<rect x="511" y="790" width="3" height="35.3" fill="url(#bs)"/>
<rect x="518" y="799" width="3" height="26.3" fill="url(#bs)"/>
<rect x="526" y="798" width="3" height="27.3" fill="url(#bs)"/>
<rect x="534" y="791" width="3" height="34.3" fill="url(#bs)"/>
<rect x="541" y="792" width="3" height="33.3" fill="url(#bs)"/>
<rect x="549" y="765" width="3" height="60.3" fill="url(#bs)"/>
<rect x="557" y="801" width="3" height="24.3" fill="url(#bs)"/>
<rect x="564" y="812" width="3" height="13.3" fill="url(#bs)"/>
<rect x="572" y="785" width="3" height="40.3" fill="url(#bs)"/>
<rect x="580" y="804" width="3" height="21.3" fill="url(#bs)"/>
<rect x="587" y="801" width="3" height="24.3" fill="url(#bs)"/>
<rect x="595" y="794" width="3" height="31.3" fill="url(#bs)"/>
<rect x="603" y="784" width="3" height="41.3" fill="url(#bs)"/>
<rect x="610" y="804" width="3" height="21.3" fill="url(#bs)"/>
<rect x="618" y="784" width="3" height="41.3" fill="url(#bs)"/>
<rect x="625" y="812" width="3" height="13.3" fill="url(#bs)"/>
<rect x="633" y="767" width="3" height="58.3" fill="url(#bs)"/>
<rect x="641" y="804" width="3" height="21.3" fill="url(#bs)"/>
<rect x="648" y="770" width="3" height="55.3" fill="url(#bs)"/>
<rect x="656" y="802" width="3" height="23.3" fill="url(#bs)"/>
<rect x="664" y="814" width="3" height="11.3" fill="url(#bs)"/>
<rect x="671" y="802" width="3" height="23.3" fill="url(#bs)"/>
<rect x="679" y="804" width="3" height="21.3" fill="url(#bs)"/>
<rect x="687" y="779" width="3" height="46.3" fill="url(#bs)"/>
<rect x="694" y="772" width="3" height="53.3" fill="url(#bs)"/>
<rect x="702" y="787" width="3" height="38.3" fill="url(#bs)"/>
<rect x="710" y="769" width="3" height="56.3" fill="url(#bs)"/>
<rect x="717" y="801" width="3" height="24.3" fill="url(#bs)"/>
<rect x="725" y="745" width="3" height="80.3" fill="url(#bs)"/>
<rect x="733" y="778" width="3" height="47.3" fill="url(#bs)"/>
<rect x="740" y="800" width="3" height="25.3" fill="url(#bs)"/>
<rect x="748" y="807" width="3" height="18.3" fill="url(#bs)"/>
<rect x="756" y="772" width="3" height="53.3" fill="url(#bs)"/>
<rect x="763" y="806" width="3" height="19.3" fill="url(#bs)"/>
<rect x="771" y="810" width="3" height="15.3" fill="url(#bs)"/>
<rect x="779" y="798" width="3" height="27.3" fill="url(#bs)"/>
<rect x="786" y="809" width="3" height="16.3" fill="url(#bs)"/>
<rect x="794" y="772" width="3" height="53.3" fill="url(#bs)"/>
<rect x="802" y="781" width="3" height="44.3" fill="url(#bs)"/>
<rect x="809" y="804" width="3" height="21.3" fill="url(#bs)"/>
<rect x="817" y="818" width="3" height="7.3" fill="url(#bs)"/>
<rect x="824" y="791" width="3" height="34.3" fill="url(#bs)"/>
<rect x="832" y="794" width="3" height="31.3" fill="url(#bs)"/>
<rect x="840" y="795" width="3" height="30.3" fill="url(#bs)"/>
<rect x="847" y="810" width="3" height="15.3" fill="url(#bs)"/>
<rect x="855" y="794" width="3" height="31.3" fill="url(#bs)"/>
<rect x="863" y="775" width="3" height="50.3" fill="url(#bs)"/>
<rect x="870" y="814" width="3" height="11.3" fill="url(#bs)"/>
<rect x="878" y="772" width="3" height="53.3" fill="url(#bs)"/>
<rect x="886" y="792" width="3" height="33.3" fill="url(#bs)"/>
<rect x="893" y="812" width="3" height="13.3" fill="url(#bs)"/>
<rect x="901" y="809" width="3" height="16.3" fill="url(#bs)"/>
<rect x="909" y="762" width="3" height="63.3" fill="url(#bs)"/>
<rect x="916" y="812" width="3" height="13.3" fill="url(#bs)"/>
<rect x="924" y="792" width="3" height="33.3" fill="url(#bs)"/>
<rect x="932" y="791" width="3" height="34.3" fill="url(#bs)"/>
<rect x="939" y="813" width="3" height="12.3" fill="url(#bs)"/>
<rect x="947" y="795" width="3" height="30.3" fill="url(#bs)"/>
<rect x="955" y="797" width="3" height="28.3" fill="url(#bs)"/>
<rect x="962" y="813" width="3" height="12.3" fill="url(#bs)"/>
<rect x="970" y="772" width="3" height="53.3" fill="url(#bs)"/>
<rect x="978" y="816" width="3" height="9.3" fill="url(#bs)"/>
<rect x="985" y="785" width="3" height="40.3" fill="url(#bs)"/>
<rect x="993" y="760" width="3" height="65.3" fill="url(#bs)"/>
<rect x="1001" y="757" width="3" height="68.3" fill="url(#bs)"/>
<rect x="1008" y="801" width="3" height="24.3" fill="url(#bs)"/>
<rect x="1016" y="762" width="3" height="63.3" fill="url(#bs)"/>
<rect x="1023" y="794" width="3" height="31.3" fill="url(#bs)"/>
<rect x="1031" y="812" width="3" height="13.3" fill="url(#bs)"/>
<rect x="1039" y="788" width="3" height="37.3" fill="url(#bs)"/>
<path d="M95.7 827v6M103.4 827v6M111.0 827v6M118.7 827v6M126.3 827v6M134.0 827v6M141.6 827v6M149.3 827v6M156.9 827v6M164.6 827v6M172.2 827v6M179.9 827v6M187.5 827v6M195.2 827v6M202.8 827v6M210.5 827v6M218.2 827v6M225.8 827v6M233.5 827v6M241.1 827v6M248.8 827v6M256.4 827v6M264.1 827v6M271.7 827v6M279.4 827v6M287.0 827v6M294.7 827v6M302.3 827v6M310.0 827v6M317.6 827v6M325.3 827v6M332.9 827v6M340.6 827v6M348.3 827v6M355.9 827v6M363.6 827v6M371.2 827v6M378.9 827v6M386.5 827v6M394.2 827v6M401.8 827v6M409.5 827v6M417.1 827v6M424.8 827v6M432.4 827v6M440.1 827v6M447.7 827v6M455.4 827v6M463.1 827v6M470.7 827v6M478.4 827v6M486.0 827v6M493.7 827v6M501.3 827v6M509.0 827v6M516.6 827v6M524.3 827v6M531.9 827v6M539.6 827v6M547.2 827v6M554.9 827v6M562.5 827v6M570.2 827v6M577.9 827v6M585.5 827v6M593.2 827v6M600.8 827v6M608.5 827v6M616.1 827v6M623.8 827v6M631.4 827v6M639.1 827v6M646.7 827v6M654.4 827v6M662.0 827v6M669.7 827v6M677.3 827v6M685.0 827v6M692.7 827v6M700.3 827v6M708.0 827v6M715.6 827v6M723.3 827v6M730.9 827v6M738.6 827v6M746.2 827v6M753.9 827v6M761.5 827v6M769.2 827v6M776.8 827v6M784.5 827v6M792.1 827v6M799.8 827v6M807.5 827v6M815.1 827v6M822.8 827v6M830.4 827v6M838.1 827v6M845.7 827v6M853.4 827v6M861.0 827v6M868.7 827v6M876.3 827v6M884.0 827v6M891.6 827v6M899.3 827v6M906.9 827v6M914.6 827v6M922.2 827v6M929.9 827v6M937.6 827v6M945.2 827v6M952.9 827v6M960.5 827v6M968.2 827v6M975.8 827v6M983.5 827v6M991.1 827v6M998.8 827v6M1006.4 827v6M1014.1 827v6M1021.7 827v6M1029.4 827v6M1037.0 827v6M1044.7 827v6" stroke="#d0d0d0" stroke-width="1.4" fill="none"/>
<clipPath id="cl"><rect x="0" y="830" width="1066" height="53"/></clipPath><g clip-path="url(#cl)" font-size="16.6" fill="#cfcfcf" text-anchor="middle">
<text x="99.3" y="849.3">White</text>
<text x="107.0" y="871">Gray 80</text>
<text x="114.6" y="849.3">6J</text>
<text x="122.3" y="871">Gray 65</text>
<text x="129.9" y="849.3">5F</text>
<text x="137.6" y="871">Gray 50</text>
<text x="145.2" y="849.3">6I</text>
<text x="152.9" y="871">6K</text>
<text x="160.6" y="849.3">Gray 35</text>
<text x="168.2" y="871">5G</text>
<text x="175.9" y="849.3">6H</text>
<text x="183.5" y="871">5H</text>
<text x="191.2" y="849.3">7K</text>
<text x="198.8" y="871">6G</text>
<text x="206.5" y="849.3">5I</text>
<text x="214.1" y="871">6F</text>
<text x="221.8" y="849.3">8K</text>
<text x="229.4" y="871">5J</text>
<text x="237.1" y="849.3">Black</text>
<text x="244.7" y="871">Dark Skin</text>
<text x="252.4" y="849.3">Light Skin</text>
<text x="260.0" y="871">Blue Sky</text>
<text x="267.7" y="849.3">Foliage</text>
<text x="275.4" y="871">Blue Flower</text>
<text x="283.0" y="849.3">Bluish Green</text>
<text x="290.7" y="871">Orange</text>
<text x="298.3" y="849.3">Purplish Blue</text>
<text x="306.0" y="871">Moderate Red</text>
<text x="313.6" y="849.3">Purple</text>
<text x="321.3" y="871">Yellow Green</text>
<text x="328.9" y="849.3">Orange Yellow</text>
<text x="336.6" y="871">Blue</text>
<text x="344.2" y="849.3">Green</text>
<text x="351.9" y="871">Red</text>
<text x="359.5" y="849.3">Yellow</text>
<text x="367.2" y="871">Magenta</text>
<text x="374.8" y="849.3">Cyan</text>
<text x="382.5" y="871">2B</text>
<text x="390.1" y="849.3">2C</text>
<text x="397.8" y="871">2D</text>
<text x="405.5" y="849.3">2E</text>
<text x="413.1" y="871">2F</text>
<text x="420.8" y="849.3">2G</text>
<text x="428.4" y="871">2H</text>
<text x="436.1" y="849.3">2I</text>
<text x="443.7" y="871">2J</text>
<text x="451.4" y="849.3">2K</text>
<text x="459.0" y="871">2L</text>
<text x="466.7" y="849.3">2M</text>
<text x="474.3" y="871">3B</text>
<text x="482.0" y="849.3">3C</text>
<text x="489.6" y="871">3D</text>
<text x="497.3" y="849.3">3E</text>
<text x="504.9" y="871">3F</text>
<text x="512.6" y="849.3">3G</text>
<text x="520.3" y="871">3H</text>
<text x="527.9" y="849.3">3I</text>
<text x="535.6" y="871">3J</text>
<text x="543.2" y="849.3">3K</text>
<text x="550.9" y="871">3L</text>
<text x="558.5" y="849.3">3M</text>
<text x="566.2" y="871">4B</text>
<text x="573.8" y="849.3">4C</text>
<text x="581.5" y="871">4D</text>
<text x="589.1" y="849.3">4E</text>
<text x="596.8" y="871">4F</text>
<text x="604.4" y="849.3">4G</text>
<text x="612.1" y="871">4H</text>
<text x="619.7" y="849.3">4I</text>
<text x="627.4" y="871">4J</text>
<text x="635.1" y="849.3">4K</text>
<text x="642.7" y="871">4L</text>
<text x="650.4" y="849.3">4M</text>
<text x="658.0" y="871">5B</text>
<text x="665.7" y="849.3">5C</text>
<text x="673.3" y="871">5D</text>
<text x="681.0" y="849.3">5K</text>
<text x="688.6" y="871">5L</text>
<text x="696.3" y="849.3">5M</text>
<text x="703.9" y="871">6B</text>
<text x="711.6" y="849.3">6C</text>
<text x="719.2" y="871">6D</text>
<text x="726.9" y="849.3">6L</text>
<text x="734.5" y="871">6M</text>
<text x="742.2" y="849.3">7B</text>
<text x="749.9" y="871">7C</text>
<text x="757.5" y="849.3">7D</text>
<text x="765.2" y="871">7E</text>
<text x="772.8" y="849.3">7F</text>
<text x="780.5" y="871">7G</text>
<text x="788.1" y="849.3">7H</text>
<text x="795.8" y="871">7I</text>
<text x="803.4" y="849.3">7J</text>
<text x="811.1" y="871">7L</text>
<text x="818.7" y="849.3">7M</text>
<text x="826.4" y="871">8B</text>
<text x="834.0" y="849.3">8C</text>
<text x="841.7" y="871">8D</text>
<text x="849.3" y="849.3">8E</text>
<text x="857.0" y="871">8F</text>
<text x="864.6" y="849.3">8G</text>
<text x="872.3" y="871">8H</text>
<text x="880.0" y="849.3">8I</text>
<text x="887.6" y="871">8J</text>
<text x="895.3" y="849.3">8L</text>
<text x="902.9" y="871">8M</text>
<text x="910.6" y="849.3">9B</text>
<text x="918.2" y="871">9C</text>
<text x="925.9" y="849.3">9D</text>
<text x="933.5" y="871">9E</text>
<text x="941.2" y="849.3">9F</text>
<text x="948.8" y="871">9G</text>
<text x="956.5" y="849.3">9H</text>
<text x="964.1" y="871">9I</text>
<text x="971.8" y="849.3">9J</text>
<text x="979.4" y="871">9K</text>
<text x="987.1" y="849.3">9L</text>
<text x="994.8" y="871">9M</text>
<text x="1002.4" y="849.3">100% Red</text>
<text x="1010.1" y="871">100% Green</text>
<text x="1017.7" y="849.3">100% Blue</text>
<text x="1025.4" y="871">100% Cyan</text>
<text x="1033.0" y="849.3">100% Magenta</text>
<text x="1040.7" y="871">100% Yellow</text>
</g>
<rect x="1106" y="114" width="736" height="738" fill="#232323"/>
<defs><linearGradient id="w0" gradientUnits="userSpaceOnUse" x1="1348.6" y1="277.6" x2="1605.6" y2="279.8"><stop offset="0" stop-color="#ffffff"/><stop offset="0.04" stop-color="#ffdcdf"/><stop offset="0.09" stop-color="#ffbabf"/><stop offset="0.16" stop-color="#ff969e"/><stop offset="0.26" stop-color="#ff717c"/><stop offset="0.4" stop-color="#ff4d5b"/><stop offset="0.6" stop-color="#ff2b3c"/><stop offset="1" stop-color="#ff0014"/></linearGradient><linearGradient id="w1" gradientUnits="userSpaceOnUse" x1="1348.6" y1="277.6" x2="1602.3" y2="284.2"><stop offset="0" stop-color="#ffffff"/><stop offset="0.04" stop-color="#ffdce0"/><stop offset="0.09" stop-color="#ffbac1"/><stop offset="0.16" stop-color="#ff96a0"/><stop offset="0.26" stop-color="#ff717e"/><stop offset="0.4" stop-color="#ff4e5d"/><stop offset="0.6" stop-color="#ff2c3e"/><stop offset="1" stop-color="#ff0016"/></linearGradient><linearGradient id="w2" gradientUnits="userSpaceOnUse" x1="1348.6" y1="277.6" x2="1599.1" y2="288.5"><stop offset="0" stop-color="#ffffff"/><stop offset="0.04" stop-color="#ffdde0"/><stop offset="0.09" stop-color="#ffbbc2"/><stop offset="0.16" stop-color="#ff97a1"/><stop offset="0.26" stop-color="#ff7280"/><stop offset="0.4" stop-color="#ff4e5f"/><stop offset="0.6" stop-color="#ff2c40"/><stop offset="1" stop-color="#ff0018"/></linearGradient><linearGradient id="w3" gradientUnits="userSpaceOnUse" x1="1348.6" y1="277.6" x2="1595.9" y2="292.7"><stop offset="0" stop-color="#ffffff"/><stop offset="0.04" stop-color="#ffdde1"/><stop offset="0.09" stop-color="#ffbcc3"/><stop offset="0.16" stop-color="#ff98a3"/><stop offset="0.26" stop-color="#ff7382"/><stop offset="0.4" stop-color="#ff4f61"/><stop offset="0.6" stop-color="#ff2d43"/><stop offset="1" stop-color="#ff001b"/></linearGradient><linearGradient id="w4" gradientUnits="userSpaceOnUse" x1="1348.6" y1="277.6" x2="1592.9" y2="296.8"><stop offset="0" stop-color="#ffffff"/><stop offset="0.04" stop-color="#ffdee1"/><stop offset="0.09" stop-color="#ffbcc4"/><stop offset="0.16" stop-color="#ff98a4"/><stop offset="0.26" stop-color="#ff7383"/><stop offset="0.4" stop-color="#ff4f63"/><stop offset="0.6" stop-color="#ff2d45"/><stop offset="1" stop-color="#ff001d"/></linearGradient><linearGradient id="w5" gradientUnits="userSpaceOnUse" x1="1348.6" y1="277.6" x2="1589.8" y2="300.8"><stop offset="0" stop-color="#ffffff"/><stop offset="0.04" stop-color="#ffdee2"/><stop offset="0.09" stop-color="#ffbdc5"/><stop offset="0.16" stop-color="#ff99a6"/><stop offset="0.26" stop-color="#ff7485"/><stop offset="0.4" stop-color="#ff5066"/><stop offset="0.6" stop-color="#ff2d47"/><stop offset="1" stop-color="#ff0020"/></linearGradient><linearGradient id="w6" gradientUnits="userSpaceOnUse" x1="1348.6" y1="277.6" x2="1586.9" y2="304.7"><stop offset="0" stop-color="#ffffff"/><stop offset="0.04" stop-color="#ffdee3"/><stop offset="0.09" stop-color="#ffbdc6"/><stop offset="0.16" stop-color="#ff9aa7"/><stop offset="0.26" stop-color="#ff7587"/><stop offset="0.4" stop-color="#ff5168"/><stop offset="0.6" stop-color="#ff2e4a"/><stop offset="1" stop-color="#ff0022"/></linearGradient><linearGradient id="w7" gradientUnits="userSpaceOnUse" x1="1348.6" y1="277.6" x2="1584.0" y2="308.6"><stop offset="0" stop-color="#ffffff"/><stop offset="0.04" stop-color="#ffdee3"/><stop offset="0.09" stop-color="#ffbec7"/><stop offset="0.16" stop-color="#ff9aa9"/><stop offset="0.26" stop-color="#ff7589"/><stop offset="0.4" stop-color="#ff516a"/><stop offset="0.6" stop-color="#ff2e4c"/><stop offset="1" stop-color="#ff0025"/></linearGradient><linearGradient id="w8" gradientUnits="userSpaceOnUse" x1="1348.6" y1="277.6" x2="1581.2" y2="312.3"><stop offset="0" stop-color="#ffffff"/><stop offset="0.04" stop-color="#ffdfe4"/><stop offset="0.09" stop-color="#ffbec8"/><stop offset="0.16" stop-color="#ff9baa"/><stop offset="0.26" stop-color="#ff768b"/><stop offset="0.4" stop-color="#ff526c"/><stop offset="0.6" stop-color="#ff2e4e"/><stop offset="1" stop-color="#ff0027"/></linearGradient><linearGradient id="w9" gradientUnits="userSpaceOnUse" x1="1348.6" y1="277.6" x2="1578.4" y2="316.0"><stop offset="0" stop-color="#ffffff"/><stop offset="0.04" stop-color="#ffdfe4"/><stop offset="0.09" stop-color="#ffbfc9"/><stop offset="0.16" stop-color="#ff9cac"/><stop offset="0.26" stop-color="#ff778d"/><stop offset="0.4" stop-color="#ff526f"/><stop offset="0.6" stop-color="#ff2f51"/><stop offset="1" stop-color="#ff002a"/></linearGradient><linearGradient id="w10" gradientUnits="userSpaceOnUse" x1="1348.6" y1="277.6" x2="1575.7" y2="319.6"><stop offset="0" stop-color="#ffffff"/><stop offset="0.04" stop-color="#ffdfe5"/><stop offset="0.09" stop-color="#ffbfca"/><stop offset="0.16" stop-color="#ff9cae"/><stop offset="0.26" stop-color="#ff778f"/><stop offset="0.4" stop-color="#ff5371"/><stop offset="0.6" stop-color="#ff2f53"/><stop offset="1" stop-color="#ff002c"/></linearGradient><linearGradient id="w11" gradientUnits="userSpaceOnUse" x1="1348.6" y1="277.6" x2="1573.0" y2="323.2"><stop offset="0" stop-color="#ffffff"/><stop offset="0.04" stop-color="#ffe0e6"/><stop offset="0.09" stop-color="#ffc0cc"/><stop offset="0.16" stop-color="#ff9daf"/><stop offset="0.26" stop-color="#ff7891"/><stop offset="0.4" stop-color="#ff5373"/><stop offset="0.6" stop-color="#ff3056"/><stop offset="1" stop-color="#ff002f"/></linearGradient><linearGradient id="w12" gradientUnits="userSpaceOnUse" x1="1348.6" y1="277.6" x2="1570.3" y2="326.7"><stop offset="0" stop-color="#ffffff"/><stop offset="0.04" stop-color="#ffe0e6"/><stop offset="0.09" stop-color="#ffc0cd"/><stop offset="0.16" stop-color="#ff9eb1"/><stop offset="0.26" stop-color="#ff7993"/><stop offset="0.4" stop-color="#ff5475"/><stop offset="0.6" stop-color="#ff3059"/><stop offset="1" stop-color="#ff0032"/></linearGradient><linearGradient id="w13" gradientUnits="userSpaceOnUse" x1="1348.6" y1="277.6" x2="1567.7" y2="330.2"><stop offset="0" stop-color="#ffffff"/><stop offset="0.04" stop-color="#ffe0e7"/><stop offset="0.09" stop-color="#ffc1ce"/><stop offset="0.16" stop-color="#ff9eb2"/><stop offset="0.26" stop-color="#ff7995"/><stop offset="0.4" stop-color="#ff5478"/><stop offset="0.6" stop-color="#ff305b"/><stop offset="1" stop-color="#ff0035"/></linearGradient><linearGradient id="w14" gradientUnits="userSpaceOnUse" x1="1348.6" y1="277.6" x2="1565.2" y2="333.6"><stop offset="0" stop-color="#ffffff"/><stop offset="0.04" stop-color="#ffe0e7"/><stop offset="0.09" stop-color="#ffc1cf"/><stop offset="0.16" stop-color="#ff9fb4"/><stop offset="0.26" stop-color="#ff7a97"/><stop offset="0.4" stop-color="#ff557a"/><stop offset="0.6" stop-color="#ff315e"/><stop offset="1" stop-color="#ff0038"/></linearGradient><linearGradient id="w15" gradientUnits="userSpaceOnUse" x1="1348.6" y1="277.6" x2="1562.7" y2="336.9"><stop offset="0" stop-color="#ffffff"/><stop offset="0.04" stop-color="#ffe1e8"/><stop offset="0.09" stop-color="#ffc2d0"/><stop offset="0.16" stop-color="#ff9fb5"/><stop offset="0.26" stop-color="#ff7b99"/><stop offset="0.4" stop-color="#ff567d"/><stop offset="0.6" stop-color="#ff3161"/><stop offset="1" stop-color="#ff003b"/></linearGradient><linearGradient id="w16" gradientUnits="userSpaceOnUse" x1="1348.6" y1="277.6" x2="1560.2" y2="340.2"><stop offset="0" stop-color="#ffffff"/><stop offset="0.04" stop-color="#ffe1e8"/><stop offset="0.09" stop-color="#ffc2d1"/><stop offset="0.16" stop-color="#ffa0b7"/><stop offset="0.26" stop-color="#ff7b9b"/><stop offset="0.4" stop-color="#ff567f"/><stop offset="0.6" stop-color="#ff3163"/><stop offset="1" stop-color="#ff003e"/></linearGradient><linearGradient id="w17" gradientUnits="userSpaceOnUse" x1="1348.6" y1="277.6" x2="1557.7" y2="343.5"><stop offset="0" stop-color="#ffffff"/><stop offset="0.04" stop-color="#ffe1e9"/><stop offset="0.09" stop-color="#ffc3d2"/><stop offset="0.16" stop-color="#ffa1b9"/><stop offset="0.26" stop-color="#ff7c9d"/><stop offset="0.4" stop-color="#ff5782"/><stop offset="0.6" stop-color="#ff3266"/><stop offset="1" stop-color="#ff0041"/></linearGradient><linearGradient id="w18" gradientUnits="userSpaceOnUse" x1="1348.6" y1="277.6" x2="1555.3" y2="346.7"><stop offset="0" stop-color="#ffffff"/><stop offset="0.04" stop-color="#ffe2ea"/><stop offset="0.09" stop-color="#ffc3d3"/><stop offset="0.16" stop-color="#ffa1ba"/><stop offset="0.26" stop-color="#ff7c9f"/><stop offset="0.4" stop-color="#ff5784"/><stop offset="0.6" stop-color="#ff3269"/><stop offset="1" stop-color="#ff0044"/></linearGradient><linearGradient id="w19" gradientUnits="userSpaceOnUse" x1="1348.6" y1="277.6" x2="1552.9" y2="349.9"><stop offset="0" stop-color="#ffffff"/><stop offset="0.04" stop-color="#ffe2ea"/><stop offset="0.09" stop-color="#ffc4d4"/><stop offset="0.16" stop-color="#ffa2bc"/><stop offset="0.26" stop-color="#ff7da1"/><stop offset="0.4" stop-color="#ff5887"/><stop offset="0.6" stop-color="#ff336c"/><stop offset="1" stop-color="#ff0047"/></linearGradient><linearGradient id="w20" gradientUnits="userSpaceOnUse" x1="1348.6" y1="277.6" x2="1550.5" y2="353.1"><stop offset="0" stop-color="#ffffff"/><stop offset="0.04" stop-color="#ffe2eb"/><stop offset="0.09" stop-color="#ffc4d5"/><stop offset="0.16" stop-color="#ffa2be"/><stop offset="0.26" stop-color="#ff7ea4"/><stop offset="0.4" stop-color="#ff5889"/><stop offset="0.6" stop-color="#ff336f"/><stop offset="1" stop-color="#ff004b"/></linearGradient><linearGradient id="w21" gradientUnits="userSpaceOnUse" x1="1348.6" y1="277.6" x2="1548.2" y2="356.2"><stop offset="0" stop-color="#ffffff"/><stop offset="0.04" stop-color="#ffe2eb"/><stop offset="0.09" stop-color="#ffc5d7"/><stop offset="0.16" stop-color="#ffa3bf"/><stop offset="0.26" stop-color="#ff7ea6"/><stop offset="0.4" stop-color="#ff598c"/><stop offset="0.6" stop-color="#ff3372"/><stop offset="1" stop-color="#ff004e"/></linearGradient><linearGradient id="w22" gradientUnits="userSpaceOnUse" x1="1348.6" y1="277.6" x2="1545.8" y2="359.3"><stop offset="0" stop-color="#ffffff"/><stop offset="0.04" stop-color="#ffe3ec"/><stop offset="0.09" stop-color="#ffc5d8"/><stop offset="0.16" stop-color="#ffa4c1"/><stop offset="0.26" stop-color="#ff7fa8"/><stop offset="0.4" stop-color="#ff598e"/><stop offset="0.6" stop-color="#ff3475"/><stop offset="1" stop-color="#ff0052"/></linearGradient><linearGradient id="w23" gradientUnits="userSpaceOnUse" x1="1348.6" y1="277.6" x2="1543.5" y2="362.3"><stop offset="0" stop-color="#ffffff"/><stop offset="0.04" stop-color="#ffe3ec"/><stop offset="0.09" stop-color="#ffc5d9"/><stop offset="0.16" stop-color="#ffa4c3"/><stop offset="0.26" stop-color="#ff80aa"/><stop offset="0.4" stop-color="#ff5a91"/><stop offset="0.6" stop-color="#ff3478"/><stop offset="1" stop-color="#ff0055"/></linearGradient><linearGradient id="w24" gradientUnits="userSpaceOnUse" x1="1348.6" y1="277.6" x2="1541.3" y2="365.4"><stop offset="0" stop-color="#ffffff"/><stop offset="0.04" stop-color="#ffe3ed"/><stop offset="0.09" stop-color="#ffc6da"/><stop offset="0.16" stop-color="#ffa5c4"/><stop offset="0.26" stop-color="#ff80ac"/><stop offset="0.4" stop-color="#ff5b94"/><stop offset="0.6" stop-color="#ff357b"/><stop offset="1" stop-color="#ff0059"/></linearGradient><linearGradient id="w25" gradientUnits="userSpaceOnUse" x1="1348.6" y1="277.6" x2="1539.0" y2="368.4"><stop offset="0" stop-color="#ffffff"/><stop offset="0.04" stop-color="#ffe3ee"/><stop offset="0.09" stop-color="#ffc6db"/><stop offset="0.16" stop-color="#ffa5c6"/><stop offset="0.26" stop-color="#ff81af"/><stop offset="0.4" stop-color="#ff5b97"/><stop offset="0.6" stop-color="#ff357e"/><stop offset="1" stop-color="#ff005d"/></linearGradient><linearGradient id="w26" gradientUnits="userSpaceOnUse" x1="1348.6" y1="277.6" x2="1536.7" y2="371.4"><stop offset="0" stop-color="#ffffff"/><stop offset="0.04" stop-color="#ffe4ee"/><stop offset="0.09" stop-color="#ffc7dc"/><stop offset="0.16" stop-color="#ffa6c8"/><stop offset="0.26" stop-color="#ff81b1"/><stop offset="0.4" stop-color="#ff5c9a"/><stop offset="0.6" stop-color="#ff3582"/><stop offset="1" stop-color="#ff0060"/></linearGradient><linearGradient id="w27" gradientUnits="userSpaceOnUse" x1="1348.6" y1="277.6" x2="1534.5" y2="374.3"><stop offset="0" stop-color="#ffffff"/><stop offset="0.04" stop-color="#ffe4ef"/><stop offset="0.09" stop-color="#ffc7dd"/><stop offset="0.16" stop-color="#ffa6c9"/><stop offset="0.26" stop-color="#ff82b3"/><stop offset="0.4" stop-color="#ff5c9c"/><stop offset="0.6" stop-color="#ff3685"/><stop offset="1" stop-color="#ff0064"/></linearGradient><linearGradient id="w28" gradientUnits="userSpaceOnUse" x1="1348.6" y1="277.6" x2="1532.3" y2="377.3"><stop offset="0" stop-color="#ffffff"/><stop offset="0.04" stop-color="#ffe4ef"/><stop offset="0.09" stop-color="#ffc8de"/><stop offset="0.16" stop-color="#ffa7cb"/><stop offset="0.26" stop-color="#ff83b6"/><stop offset="0.4" stop-color="#ff5d9f"/><stop offset="0.6" stop-color="#ff3688"/><stop offset="1" stop-color="#ff0068"/></linearGradient><linearGradient id="w29" gradientUnits="userSpaceOnUse" x1="1348.6" y1="277.6" x2="1530.1" y2="380.2"><stop offset="0" stop-color="#ffffff"/><stop offset="0.04" stop-color="#ffe4f0"/><stop offset="0.09" stop-color="#ffc8e0"/><stop offset="0.16" stop-color="#ffa8cd"/><stop offset="0.26" stop-color="#ff83b8"/><stop offset="0.4" stop-color="#ff5da2"/><stop offset="0.6" stop-color="#ff378c"/><stop offset="1" stop-color="#ff006d"/></linearGradient><linearGradient id="w30" gradientUnits="userSpaceOnUse" x1="1348.6" y1="277.6" x2="1527.9" y2="383.2"><stop offset="0" stop-color="#ffffff"/><stop offset="0.04" stop-color="#ffe5f1"/><stop offset="0.09" stop-color="#ffc9e1"/><stop offset="0.16" stop-color="#ffa8cf"/><stop offset="0.26" stop-color="#ff84bb"/><stop offset="0.4" stop-color="#ff5ea5"/><stop offset="0.6" stop-color="#ff3790"/><stop offset="1" stop-color="#ff0071"/></linearGradient><linearGradient id="w31" gradientUnits="userSpaceOnUse" x1="1348.6" y1="277.6" x2="1525.7" y2="386.1"><stop offset="0" stop-color="#ffffff"/><stop offset="0.04" stop-color="#ffe5f1"/><stop offset="0.09" stop-color="#ffc9e2"/><stop offset="0.16" stop-color="#ffa9d1"/><stop offset="0.26" stop-color="#ff85bd"/><stop offset="0.4" stop-color="#ff5fa9"/><stop offset="0.6" stop-color="#ff3793"/><stop offset="1" stop-color="#ff0075"/></linearGradient><linearGradient id="w32" gradientUnits="userSpaceOnUse" x1="1348.6" y1="277.6" x2="1523.5" y2="389.0"><stop offset="0" stop-color="#ffffff"/><stop offset="0.04" stop-color="#ffe5f2"/><stop offset="0.09" stop-color="#ffc9e3"/><stop offset="0.16" stop-color="#ffa9d2"/><stop offset="0.26" stop-color="#ff85c0"/><stop offset="0.4" stop-color="#ff5fac"/><stop offset="0.6" stop-color="#ff3897"/><stop offset="1" stop-color="#ff007a"/></linearGradient><linearGradient id="w33" gradientUnits="userSpaceOnUse" x1="1348.6" y1="277.6" x2="1521.3" y2="391.9"><stop offset="0" stop-color="#ffffff"/><stop offset="0.04" stop-color="#ffe5f2"/><stop offset="0.09" stop-color="#ffcae4"/><stop offset="0.16" stop-color="#ffaad4"/><stop offset="0.26" stop-color="#ff86c2"/><stop offset="0.4" stop-color="#ff60af"/><stop offset="0.6" stop-color="#ff389b"/><stop offset="1" stop-color="#ff007f"/></linearGradient><linearGradient id="w34" gradientUnits="userSpaceOnUse" x1="1348.6" y1="277.6" x2="1519.1" y2="394.8"><stop offset="0" stop-color="#ffffff"/><stop offset="0.04" stop-color="#ffe6f3"/><stop offset="0.09" stop-color="#ffcae6"/><stop offset="0.16" stop-color="#ffabd6"/><stop offset="0.26" stop-color="#ff87c5"/><stop offset="0.4" stop-color="#ff60b2"/><stop offset="0.6" stop-color="#ff399f"/><stop offset="1" stop-color="#ff0083"/></linearGradient><linearGradient id="w35" gradientUnits="userSpaceOnUse" x1="1348.6" y1="277.6" x2="1517.0" y2="397.6"><stop offset="0" stop-color="#ffffff"/><stop offset="0.04" stop-color="#ffe6f4"/><stop offset="0.09" stop-color="#ffcbe7"/><stop offset="0.16" stop-color="#ffabd8"/><stop offset="0.26" stop-color="#ff87c7"/><stop offset="0.4" stop-color="#ff61b6"/><stop offset="0.6" stop-color="#ff39a3"/><stop offset="1" stop-color="#ff0088"/></linearGradient><linearGradient id="w36" gradientUnits="userSpaceOnUse" x1="1348.6" y1="277.6" x2="1514.8" y2="400.5"><stop offset="0" stop-color="#ffffff"/><stop offset="0.04" stop-color="#ffe6f4"/><stop offset="0.09" stop-color="#ffcbe8"/><stop offset="0.16" stop-color="#ffacda"/><stop offset="0.26" stop-color="#ff88ca"/><stop offset="0.4" stop-color="#ff62b9"/><stop offset="0.6" stop-color="#ff3aa7"/><stop offset="1" stop-color="#ff008e"/></linearGradient><linearGradient id="w37" gradientUnits="userSpaceOnUse" x1="1348.6" y1="277.6" x2="1512.6" y2="403.4"><stop offset="0" stop-color="#ffffff"/><stop offset="0.04" stop-color="#ffe6f5"/><stop offset="0.09" stop-color="#ffcce9"/><stop offset="0.16" stop-color="#ffacdc"/><stop offset="0.26" stop-color="#ff89cd"/><stop offset="0.4" stop-color="#ff62bd"/><stop offset="0.6" stop-color="#ff3aac"/><stop offset="1" stop-color="#ff0093"/></linearGradient><linearGradient id="w38" gradientUnits="userSpaceOnUse" x1="1348.6" y1="277.6" x2="1510.4" y2="406.3"><stop offset="0" stop-color="#ffffff"/><stop offset="0.04" stop-color="#ffe7f5"/><stop offset="0.09" stop-color="#ffcceb"/><stop offset="0.16" stop-color="#ffadde"/><stop offset="0.26" stop-color="#ff89d0"/><stop offset="0.4" stop-color="#ff63c0"/><stop offset="0.6" stop-color="#ff3bb0"/><stop offset="1" stop-color="#ff0098"/></linearGradient><linearGradient id="w39" gradientUnits="userSpaceOnUse" x1="1348.6" y1="277.6" x2="1508.3" y2="409.2"><stop offset="0" stop-color="#ffffff"/><stop offset="0.04" stop-color="#ffe7f6"/><stop offset="0.09" stop-color="#ffcdec"/><stop offset="0.16" stop-color="#ffaee0"/><stop offset="0.26" stop-color="#ff8ad3"/><stop offset="0.4" stop-color="#ff64c4"/><stop offset="0.6" stop-color="#ff3bb5"/><stop offset="1" stop-color="#ff009e"/></linearGradient><linearGradient id="w40" gradientUnits="userSpaceOnUse" x1="1348.6" y1="277.6" x2="1506.1" y2="412.1"><stop offset="0" stop-color="#ffffff"/><stop offset="0.04" stop-color="#ffe7f7"/><stop offset="0.09" stop-color="#ffcded"/><stop offset="0.16" stop-color="#ffaee2"/><stop offset="0.26" stop-color="#ff8bd6"/><stop offset="0.4" stop-color="#ff64c8"/><stop offset="0.6" stop-color="#ff3cb9"/><stop offset="1" stop-color="#ff00a4"/></linearGradient><linearGradient id="w41" gradientUnits="userSpaceOnUse" x1="1348.6" y1="277.6" x2="1503.9" y2="415.0"><stop offset="0" stop-color="#ffffff"/><stop offset="0.04" stop-color="#ffe7f7"/><stop offset="0.09" stop-color="#ffceef"/><stop offset="0.16" stop-color="#ffafe5"/><stop offset="0.26" stop-color="#ff8cd9"/><stop offset="0.4" stop-color="#ff65cc"/><stop offset="0.6" stop-color="#ff3cbe"/><stop offset="1" stop-color="#ff00aa"/></linearGradient><linearGradient id="w42" gradientUnits="userSpaceOnUse" x1="1348.6" y1="277.6" x2="1501.7" y2="417.9"><stop offset="0" stop-color="#ffffff"/><stop offset="0.04" stop-color="#ffe8f8"/><stop offset="0.09" stop-color="#ffcef0"/><stop offset="0.16" stop-color="#ffb0e7"/><stop offset="0.26" stop-color="#ff8cdc"/><stop offset="0.4" stop-color="#ff66d0"/><stop offset="0.6" stop-color="#ff3dc3"/><stop offset="1" stop-color="#ff00b0"/></linearGradient><linearGradient id="w43" gradientUnits="userSpaceOnUse" x1="1348.6" y1="277.6" x2="1499.5" y2="420.8"><stop offset="0" stop-color="#ffffff"/><stop offset="0.04" stop-color="#ffe8f9"/><stop offset="0.09" stop-color="#ffcff2"/><stop offset="0.16" stop-color="#ffb0e9"/><stop offset="0.26" stop-color="#ff8ddf"/><stop offset="0.4" stop-color="#ff66d4"/><stop offset="0.6" stop-color="#ff3dc8"/><stop offset="1" stop-color="#ff00b7"/></linearGradient><linearGradient id="w44" gradientUnits="userSpaceOnUse" x1="1348.6" y1="277.6" x2="1497.3" y2="423.7"><stop offset="0" stop-color="#ffffff"/><stop offset="0.04" stop-color="#ffe8f9"/><stop offset="0.09" stop-color="#ffcff3"/><stop offset="0.16" stop-color="#ffb1eb"/><stop offset="0.26" stop-color="#ff8ee2"/><stop offset="0.4" stop-color="#ff67d8"/><stop offset="0.6" stop-color="#ff3ece"/><stop offset="1" stop-color="#ff00be"/></linearGradient><linearGradient id="w45" gradientUnits="userSpaceOnUse" x1="1348.6" y1="277.6" x2="1495.1" y2="426.6"><stop offset="0" stop-color="#ffffff"/><stop offset="0.04" stop-color="#ffe8fa"/><stop offset="0.09" stop-color="#ffd0f4"/><stop offset="0.16" stop-color="#ffb2ee"/><stop offset="0.26" stop-color="#ff8fe6"/><stop offset="0.4" stop-color="#ff68dd"/><stop offset="0.6" stop-color="#ff3ed3"/><stop offset="1" stop-color="#ff00c5"/></linearGradient><linearGradient id="w46" gradientUnits="userSpaceOnUse" x1="1348.6" y1="277.6" x2="1492.9" y2="429.6"><stop offset="0" stop-color="#ffffff"/><stop offset="0.04" stop-color="#ffe9fb"/><stop offset="0.09" stop-color="#ffd0f6"/><stop offset="0.16" stop-color="#ffb2f0"/><stop offset="0.26" stop-color="#ff8fe9"/><stop offset="0.4" stop-color="#ff69e1"/><stop offset="0.6" stop-color="#ff3fd9"/><stop offset="1" stop-color="#ff00cd"/></linearGradient><linearGradient id="w47" gradientUnits="userSpaceOnUse" x1="1348.6" y1="277.6" x2="1490.7" y2="432.6"><stop offset="0" stop-color="#ffffff"/><stop offset="0.04" stop-color="#ffe9fc"/><stop offset="0.09" stop-color="#ffd0f7"/><stop offset="0.16" stop-color="#ffb3f2"/><stop offset="0.26" stop-color="#ff90ed"/><stop offset="0.4" stop-color="#ff69e6"/><stop offset="0.6" stop-color="#ff3fdf"/><stop offset="1" stop-color="#ff00d4"/></linearGradient><linearGradient id="w48" gradientUnits="userSpaceOnUse" x1="1348.6" y1="277.6" x2="1488.4" y2="435.6"><stop offset="0" stop-color="#ffffff"/><stop offset="0.04" stop-color="#ffe9fc"/><stop offset="0.09" stop-color="#ffd1f9"/><stop offset="0.16" stop-color="#ffb4f5"/><stop offset="0.26" stop-color="#ff91f0"/><stop offset="0.4" stop-color="#ff6aeb"/><stop offset="0.6" stop-color="#ff40e5"/><stop offset="1" stop-color="#ff00dc"/></linearGradient><linearGradient id="w49" gradientUnits="userSpaceOnUse" x1="1348.6" y1="277.6" x2="1486.1" y2="438.6"><stop offset="0" stop-color="#ffffff"/><stop offset="0.04" stop-color="#ffeafd"/><stop offset="0.09" stop-color="#ffd1fb"/><stop offset="0.16" stop-color="#ffb4f8"/><stop offset="0.26" stop-color="#ff92f4"/><stop offset="0.4" stop-color="#ff6bf0"/><stop offset="0.6" stop-color="#ff41ec"/><stop offset="1" stop-color="#ff00e5"/></linearGradient><linearGradient id="w50" gradientUnits="userSpaceOnUse" x1="1348.6" y1="277.6" x2="1483.8" y2="441.6"><stop offset="0" stop-color="#ffffff"/><stop offset="0.04" stop-color="#ffeafe"/><stop offset="0.09" stop-color="#ffd2fc"/><stop offset="0.16" stop-color="#ffb5fa"/><stop offset="0.26" stop-color="#ff93f8"/><stop offset="0.4" stop-color="#ff6cf5"/><stop offset="0.6" stop-color="#ff41f2"/><stop offset="1" stop-color="#ff00ee"/></linearGradient><linearGradient id="w51" gradientUnits="userSpaceOnUse" x1="1348.6" y1="277.6" x2="1481.5" y2="444.7"><stop offset="0" stop-color="#ffffff"/><stop offset="0.04" stop-color="#ffeaff"/><stop offset="0.09" stop-color="#ffd3fe"/><stop offset="0.16" stop-color="#ffb6fd"/><stop offset="0.26" stop-color="#ff93fc"/><stop offset="0.4" stop-color="#ff6dfb"/><stop offset="0.6" stop-color="#ff42f9"/><stop offset="1" stop-color="#ff00f7"/></linearGradient><linearGradient id="w52" gradientUnits="userSpaceOnUse" x1="1348.6" y1="277.6" x2="1479.2" y2="447.8"><stop offset="0" stop-color="#ffffff"/><stop offset="0.04" stop-color="#feeaff"/><stop offset="0.09" stop-color="#fed3ff"/><stop offset="0.16" stop-color="#feb6ff"/><stop offset="0.26" stop-color="#fe94ff"/><stop offset="0.4" stop-color="#fe6dff"/><stop offset="0.6" stop-color="#fd42ff"/><stop offset="1" stop-color="#fd00ff"/></linearGradient><linearGradient id="w53" gradientUnits="userSpaceOnUse" x1="1348.6" y1="277.6" x2="1476.9" y2="450.9"><stop offset="0" stop-color="#ffffff"/><stop offset="0.04" stop-color="#fdeaff"/><stop offset="0.09" stop-color="#fcd2ff"/><stop offset="0.16" stop-color="#fbb5ff"/><stop offset="0.26" stop-color="#f993ff"/><stop offset="0.4" stop-color="#f76cff"/><stop offset="0.6" stop-color="#f542ff"/><stop offset="1" stop-color="#f100ff"/></linearGradient><linearGradient id="w54" gradientUnits="userSpaceOnUse" x1="1348.6" y1="277.6" x2="1474.5" y2="454.0"><stop offset="0" stop-color="#ffffff"/><stop offset="0.04" stop-color="#fceaff"/><stop offset="0.09" stop-color="#fad2ff"/><stop offset="0.16" stop-color="#f7b5ff"/><stop offset="0.26" stop-color="#f492ff"/><stop offset="0.4" stop-color="#f06cff"/><stop offset="0.6" stop-color="#ec41ff"/><stop offset="1" stop-color="#e600ff"/></linearGradient><linearGradient id="w55" gradientUnits="userSpaceOnUse" x1="1348.6" y1="277.6" x2="1472.1" y2="457.2"><stop offset="0" stop-color="#ffffff"/><stop offset="0.04" stop-color="#fce9ff"/><stop offset="0.09" stop-color="#f8d1ff"/><stop offset="0.16" stop-color="#f4b4ff"/><stop offset="0.26" stop-color="#ef92ff"/><stop offset="0.4" stop-color="#ea6bff"/><stop offset="0.6" stop-color="#e440ff"/><stop offset="1" stop-color="#db00ff"/></linearGradient><linearGradient id="w56" gradientUnits="userSpaceOnUse" x1="1348.6" y1="277.6" x2="1469.7" y2="460.5"><stop offset="0" stop-color="#ffffff"/><stop offset="0.04" stop-color="#fbe9ff"/><stop offset="0.09" stop-color="#f6d1ff"/><stop offset="0.16" stop-color="#f1b3ff"/><stop offset="0.26" stop-color="#ea91ff"/><stop offset="0.4" stop-color="#e36aff"/><stop offset="0.6" stop-color="#dc40ff"/><stop offset="1" stop-color="#d000ff"/></linearGradient><linearGradient id="w57" gradientUnits="userSpaceOnUse" x1="1348.6" y1="277.6" x2="1467.2" y2="463.7"><stop offset="0" stop-color="#ffffff"/><stop offset="0.04" stop-color="#fae9ff"/><stop offset="0.09" stop-color="#f4d0ff"/><stop offset="0.16" stop-color="#eeb3ff"/><stop offset="0.26" stop-color="#e690ff"/><stop offset="0.4" stop-color="#dd69ff"/><stop offset="0.6" stop-color="#d43fff"/><stop offset="1" stop-color="#c600ff"/></linearGradient><linearGradient id="w58" gradientUnits="userSpaceOnUse" x1="1348.6" y1="277.6" x2="1464.7" y2="467.0"><stop offset="0" stop-color="#ffffff"/><stop offset="0.04" stop-color="#f9e9ff"/><stop offset="0.09" stop-color="#f2d0ff"/><stop offset="0.16" stop-color="#ebb2ff"/><stop offset="0.26" stop-color="#e18fff"/><stop offset="0.4" stop-color="#d769ff"/><stop offset="0.6" stop-color="#cc3fff"/><stop offset="1" stop-color="#bc00ff"/></linearGradient><linearGradient id="w59" gradientUnits="userSpaceOnUse" x1="1348.6" y1="277.6" x2="1462.2" y2="470.4"><stop offset="0" stop-color="#ffffff"/><stop offset="0.04" stop-color="#f8e8ff"/><stop offset="0.09" stop-color="#f0cfff"/><stop offset="0.16" stop-color="#e7b1ff"/><stop offset="0.26" stop-color="#dd8eff"/><stop offset="0.4" stop-color="#d168ff"/><stop offset="0.6" stop-color="#c53eff"/><stop offset="1" stop-color="#b200ff"/></linearGradient><linearGradient id="w60" gradientUnits="userSpaceOnUse" x1="1348.6" y1="277.6" x2="1459.6" y2="473.8"><stop offset="0" stop-color="#ffffff"/><stop offset="0.04" stop-color="#f7e8ff"/><stop offset="0.09" stop-color="#eecfff"/><stop offset="0.16" stop-color="#e4b1ff"/><stop offset="0.26" stop-color="#d98eff"/><stop offset="0.4" stop-color="#cc67ff"/><stop offset="0.6" stop-color="#be3eff"/><stop offset="1" stop-color="#a900ff"/></linearGradient><linearGradient id="w61" gradientUnits="userSpaceOnUse" x1="1348.6" y1="277.6" x2="1457.0" y2="477.2"><stop offset="0" stop-color="#ffffff"/><stop offset="0.04" stop-color="#f6e8ff"/><stop offset="0.09" stop-color="#edceff"/><stop offset="0.16" stop-color="#e1b0ff"/><stop offset="0.26" stop-color="#d48dff"/><stop offset="0.4" stop-color="#c666ff"/><stop offset="0.6" stop-color="#b73dff"/><stop offset="1" stop-color="#a000ff"/></linearGradient><linearGradient id="w62" gradientUnits="userSpaceOnUse" x1="1348.6" y1="277.6" x2="1454.4" y2="480.8"><stop offset="0" stop-color="#ffffff"/><stop offset="0.04" stop-color="#f5e7ff"/><stop offset="0.09" stop-color="#ebceff"/><stop offset="0.16" stop-color="#deafff"/><stop offset="0.26" stop-color="#d08cff"/><stop offset="0.4" stop-color="#c166ff"/><stop offset="0.6" stop-color="#b03cff"/><stop offset="1" stop-color="#9700ff"/></linearGradient><linearGradient id="w63" gradientUnits="userSpaceOnUse" x1="1348.6" y1="277.6" x2="1451.7" y2="484.3"><stop offset="0" stop-color="#ffffff"/><stop offset="0.04" stop-color="#f4e7ff"/><stop offset="0.09" stop-color="#e9cdff"/><stop offset="0.16" stop-color="#dcafff"/><stop offset="0.26" stop-color="#cc8bff"/><stop offset="0.4" stop-color="#bb65ff"/><stop offset="0.6" stop-color="#a93cff"/><stop offset="1" stop-color="#8f00ff"/></linearGradient><linearGradient id="w64" gradientUnits="userSpaceOnUse" x1="1348.6" y1="277.6" x2="1449.0" y2="488.0"><stop offset="0" stop-color="#ffffff"/><stop offset="0.04" stop-color="#f3e7ff"/><stop offset="0.09" stop-color="#e7cdff"/><stop offset="0.16" stop-color="#d9aeff"/><stop offset="0.26" stop-color="#c88aff"/><stop offset="0.4" stop-color="#b664ff"/><stop offset="0.6" stop-color="#a33bff"/><stop offset="1" stop-color="#8700ff"/></linearGradient><linearGradient id="w65" gradientUnits="userSpaceOnUse" x1="1348.6" y1="277.6" x2="1446.2" y2="491.7"><stop offset="0" stop-color="#ffffff"/><stop offset="0.04" stop-color="#f2e7ff"/><stop offset="0.09" stop-color="#e5ccff"/><stop offset="0.16" stop-color="#d6adff"/><stop offset="0.26" stop-color="#c48aff"/><stop offset="0.4" stop-color="#b163ff"/><stop offset="0.6" stop-color="#9d3bff"/><stop offset="1" stop-color="#7f00ff"/></linearGradient><linearGradient id="w66" gradientUnits="userSpaceOnUse" x1="1348.6" y1="277.6" x2="1443.3" y2="495.4"><stop offset="0" stop-color="#ffffff"/><stop offset="0.04" stop-color="#f2e6ff"/><stop offset="0.09" stop-color="#e4ccff"/><stop offset="0.16" stop-color="#d3adff"/><stop offset="0.26" stop-color="#c089ff"/><stop offset="0.4" stop-color="#ac63ff"/><stop offset="0.6" stop-color="#963aff"/><stop offset="1" stop-color="#7700ff"/></linearGradient><linearGradient id="w67" gradientUnits="userSpaceOnUse" x1="1348.6" y1="277.6" x2="1440.4" y2="499.3"><stop offset="0" stop-color="#ffffff"/><stop offset="0.04" stop-color="#f1e6ff"/><stop offset="0.09" stop-color="#e2cbff"/><stop offset="0.16" stop-color="#d0acff"/><stop offset="0.26" stop-color="#bc88ff"/><stop offset="0.4" stop-color="#a762ff"/><stop offset="0.6" stop-color="#903aff"/><stop offset="1" stop-color="#7000ff"/></linearGradient><linearGradient id="w68" gradientUnits="userSpaceOnUse" x1="1348.6" y1="277.6" x2="1437.5" y2="503.2"><stop offset="0" stop-color="#ffffff"/><stop offset="0.04" stop-color="#f0e6ff"/><stop offset="0.09" stop-color="#e0cbff"/><stop offset="0.16" stop-color="#cdabff"/><stop offset="0.26" stop-color="#b887ff"/><stop offset="0.4" stop-color="#a261ff"/><stop offset="0.6" stop-color="#8b39ff"/><stop offset="1" stop-color="#6900ff"/></linearGradient><linearGradient id="w69" gradientUnits="userSpaceOnUse" x1="1348.6" y1="277.6" x2="1434.5" y2="507.2"><stop offset="0" stop-color="#ffffff"/><stop offset="0.04" stop-color="#efe5ff"/><stop offset="0.09" stop-color="#decaff"/><stop offset="0.16" stop-color="#cbaaff"/><stop offset="0.26" stop-color="#b586ff"/><stop offset="0.4" stop-color="#9d60ff"/><stop offset="0.6" stop-color="#8539ff"/><stop offset="1" stop-color="#6200ff"/></linearGradient><linearGradient id="w70" gradientUnits="userSpaceOnUse" x1="1348.6" y1="277.6" x2="1431.4" y2="511.3"><stop offset="0" stop-color="#ffffff"/><stop offset="0.04" stop-color="#eee5ff"/><stop offset="0.09" stop-color="#dcc9ff"/><stop offset="0.16" stop-color="#c8aaff"/><stop offset="0.26" stop-color="#b186ff"/><stop offset="0.4" stop-color="#995fff"/><stop offset="0.6" stop-color="#7f38ff"/><stop offset="1" stop-color="#5b00ff"/></linearGradient><linearGradient id="w71" gradientUnits="userSpaceOnUse" x1="1348.6" y1="277.6" x2="1428.2" y2="515.5"><stop offset="0" stop-color="#ffffff"/><stop offset="0.04" stop-color="#ede5ff"/><stop offset="0.09" stop-color="#dbc9ff"/><stop offset="0.16" stop-color="#c5a9ff"/><stop offset="0.26" stop-color="#ad85ff"/><stop offset="0.4" stop-color="#945fff"/><stop offset="0.6" stop-color="#7a37ff"/><stop offset="1" stop-color="#5500ff"/></linearGradient><linearGradient id="w72" gradientUnits="userSpaceOnUse" x1="1348.6" y1="277.6" x2="1425.0" y2="519.8"><stop offset="0" stop-color="#ffffff"/><stop offset="0.04" stop-color="#ece4ff"/><stop offset="0.09" stop-color="#d9c8ff"/><stop offset="0.16" stop-color="#c3a8ff"/><stop offset="0.26" stop-color="#aa84ff"/><stop offset="0.4" stop-color="#905eff"/><stop offset="0.6" stop-color="#7537ff"/><stop offset="1" stop-color="#4f00ff"/></linearGradient><linearGradient id="w73" gradientUnits="userSpaceOnUse" x1="1348.6" y1="277.6" x2="1421.7" y2="524.2"><stop offset="0" stop-color="#ffffff"/><stop offset="0.04" stop-color="#ece4ff"/><stop offset="0.09" stop-color="#d7c8ff"/><stop offset="0.16" stop-color="#c0a7ff"/><stop offset="0.26" stop-color="#a683ff"/><stop offset="0.4" stop-color="#8b5dff"/><stop offset="0.6" stop-color="#7036ff"/><stop offset="1" stop-color="#4900ff"/></linearGradient><linearGradient id="w74" gradientUnits="userSpaceOnUse" x1="1348.6" y1="277.6" x2="1418.3" y2="528.7"><stop offset="0" stop-color="#ffffff"/><stop offset="0.04" stop-color="#ebe4ff"/><stop offset="0.09" stop-color="#d6c7ff"/><stop offset="0.16" stop-color="#bea6ff"/><stop offset="0.26" stop-color="#a382ff"/><stop offset="0.4" stop-color="#875cff"/><stop offset="0.6" stop-color="#6b36ff"/><stop offset="1" stop-color="#4300ff"/></linearGradient><linearGradient id="w75" gradientUnits="userSpaceOnUse" x1="1348.6" y1="277.6" x2="1414.8" y2="533.4"><stop offset="0" stop-color="#ffffff"/><stop offset="0.04" stop-color="#eae3ff"/><stop offset="0.09" stop-color="#d4c6ff"/><stop offset="0.16" stop-color="#bba6ff"/><stop offset="0.26" stop-color="#9f81ff"/><stop offset="0.4" stop-color="#835cff"/><stop offset="0.6" stop-color="#6635ff"/><stop offset="1" stop-color="#3d00ff"/></linearGradient><linearGradient id="w76" gradientUnits="userSpaceOnUse" x1="1348.6" y1="277.6" x2="1411.2" y2="538.2"><stop offset="0" stop-color="#ffffff"/><stop offset="0.04" stop-color="#e9e3ff"/><stop offset="0.09" stop-color="#d2c6ff"/><stop offset="0.16" stop-color="#b8a5ff"/><stop offset="0.26" stop-color="#9c80ff"/><stop offset="0.4" stop-color="#7f5bff"/><stop offset="0.6" stop-color="#6135ff"/><stop offset="1" stop-color="#3800ff"/></linearGradient><linearGradient id="w77" gradientUnits="userSpaceOnUse" x1="1348.6" y1="277.6" x2="1407.5" y2="543.1"><stop offset="0" stop-color="#ffffff"/><stop offset="0.04" stop-color="#e8e3ff"/><stop offset="0.09" stop-color="#d1c5ff"/><stop offset="0.16" stop-color="#b6a4ff"/><stop offset="0.26" stop-color="#997fff"/><stop offset="0.4" stop-color="#7b5aff"/><stop offset="0.6" stop-color="#5d34ff"/><stop offset="1" stop-color="#3300ff"/></linearGradient><linearGradient id="w78" gradientUnits="userSpaceOnUse" x1="1348.6" y1="277.6" x2="1403.7" y2="548.1"><stop offset="0" stop-color="#ffffff"/><stop offset="0.04" stop-color="#e7e2ff"/><stop offset="0.09" stop-color="#cfc5ff"/><stop offset="0.16" stop-color="#b4a3ff"/><stop offset="0.26" stop-color="#967fff"/><stop offset="0.4" stop-color="#7759ff"/><stop offset="0.6" stop-color="#5834ff"/><stop offset="1" stop-color="#2e00ff"/></linearGradient><linearGradient id="w79" gradientUnits="userSpaceOnUse" x1="1348.6" y1="277.6" x2="1399.7" y2="553.4"><stop offset="0" stop-color="#ffffff"/><stop offset="0.04" stop-color="#e6e2ff"/><stop offset="0.09" stop-color="#cdc4ff"/><stop offset="0.16" stop-color="#b1a2ff"/><stop offset="0.26" stop-color="#927eff"/><stop offset="0.4" stop-color="#7358ff"/><stop offset="0.6" stop-color="#5433ff"/><stop offset="1" stop-color="#2900ff"/></linearGradient><linearGradient id="w80" gradientUnits="userSpaceOnUse" x1="1348.6" y1="277.6" x2="1395.7" y2="558.8"><stop offset="0" stop-color="#ffffff"/><stop offset="0.04" stop-color="#e6e1ff"/><stop offset="0.09" stop-color="#ccc3ff"/><stop offset="0.16" stop-color="#afa1ff"/><stop offset="0.26" stop-color="#8f7dff"/><stop offset="0.4" stop-color="#6f57ff"/><stop offset="0.6" stop-color="#5032ff"/><stop offset="1" stop-color="#2500ff"/></linearGradient><linearGradient id="w81" gradientUnits="userSpaceOnUse" x1="1348.6" y1="277.6" x2="1391.5" y2="564.3"><stop offset="0" stop-color="#ffffff"/><stop offset="0.04" stop-color="#e5e1ff"/><stop offset="0.09" stop-color="#cac2ff"/><stop offset="0.16" stop-color="#aca0ff"/><stop offset="0.26" stop-color="#8c7cff"/><stop offset="0.4" stop-color="#6c57ff"/><stop offset="0.6" stop-color="#4c32ff"/><stop offset="1" stop-color="#2000ff"/></linearGradient><linearGradient id="w82" gradientUnits="userSpaceOnUse" x1="1348.6" y1="277.6" x2="1387.1" y2="570.1"><stop offset="0" stop-color="#ffffff"/><stop offset="0.04" stop-color="#e4e1ff"/><stop offset="0.09" stop-color="#c8c2ff"/><stop offset="0.16" stop-color="#aa9fff"/><stop offset="0.26" stop-color="#897bff"/><stop offset="0.4" stop-color="#6856ff"/><stop offset="0.6" stop-color="#4831ff"/><stop offset="1" stop-color="#1c00ff"/></linearGradient><linearGradient id="w83" gradientUnits="userSpaceOnUse" x1="1348.6" y1="277.6" x2="1382.6" y2="576.1"><stop offset="0" stop-color="#ffffff"/><stop offset="0.04" stop-color="#e3e0ff"/><stop offset="0.09" stop-color="#c7c1ff"/><stop offset="0.16" stop-color="#a89fff"/><stop offset="0.26" stop-color="#867aff"/><stop offset="0.4" stop-color="#6555ff"/><stop offset="0.6" stop-color="#4431ff"/><stop offset="1" stop-color="#1800ff"/></linearGradient><linearGradient id="w84" gradientUnits="userSpaceOnUse" x1="1348.6" y1="277.6" x2="1378.0" y2="582.3"><stop offset="0" stop-color="#ffffff"/><stop offset="0.04" stop-color="#e2e0ff"/><stop offset="0.09" stop-color="#c5c0ff"/><stop offset="0.16" stop-color="#a59eff"/><stop offset="0.26" stop-color="#8379ff"/><stop offset="0.4" stop-color="#6254ff"/><stop offset="0.6" stop-color="#4130ff"/><stop offset="1" stop-color="#1500ff"/></linearGradient><linearGradient id="w85" gradientUnits="userSpaceOnUse" x1="1348.6" y1="277.6" x2="1373.1" y2="588.7"><stop offset="0" stop-color="#ffffff"/><stop offset="0.04" stop-color="#e1dfff"/><stop offset="0.09" stop-color="#c4bfff"/><stop offset="0.16" stop-color="#a39dff"/><stop offset="0.26" stop-color="#8178ff"/><stop offset="0.4" stop-color="#5f53ff"/><stop offset="0.6" stop-color="#3d2fff"/><stop offset="1" stop-color="#1100ff"/></linearGradient><linearGradient id="w86" gradientUnits="userSpaceOnUse" x1="1348.6" y1="277.6" x2="1368.1" y2="595.5"><stop offset="0" stop-color="#ffffff"/><stop offset="0.04" stop-color="#e0dfff"/><stop offset="0.09" stop-color="#c2bfff"/><stop offset="0.16" stop-color="#a19bff"/><stop offset="0.26" stop-color="#7e77ff"/><stop offset="0.4" stop-color="#5c52ff"/><stop offset="0.6" stop-color="#3a2fff"/><stop offset="1" stop-color="#0e00ff"/></linearGradient><linearGradient id="w87" gradientUnits="userSpaceOnUse" x1="1348.6" y1="277.6" x2="1362.8" y2="602.4"><stop offset="0" stop-color="#ffffff"/><stop offset="0.04" stop-color="#e0deff"/><stop offset="0.09" stop-color="#c0beff"/><stop offset="0.16" stop-color="#9f9aff"/><stop offset="0.26" stop-color="#7b75ff"/><stop offset="0.4" stop-color="#5951ff"/><stop offset="0.6" stop-color="#372eff"/><stop offset="1" stop-color="#0b00ff"/></linearGradient><linearGradient id="w88" gradientUnits="userSpaceOnUse" x1="1348.6" y1="277.6" x2="1357.3" y2="609.7"><stop offset="0" stop-color="#ffffff"/><stop offset="0.04" stop-color="#dfdeff"/><stop offset="0.09" stop-color="#bfbdff"/><stop offset="0.16" stop-color="#9d99ff"/><stop offset="0.26" stop-color="#7974ff"/><stop offset="0.4" stop-color="#5650ff"/><stop offset="0.6" stop-color="#342eff"/><stop offset="1" stop-color="#0800ff"/></linearGradient><linearGradient id="w89" gradientUnits="userSpaceOnUse" x1="1348.6" y1="277.6" x2="1351.6" y2="617.3"><stop offset="0" stop-color="#ffffff"/><stop offset="0.04" stop-color="#deddff"/><stop offset="0.09" stop-color="#bdbcff"/><stop offset="0.16" stop-color="#9b98ff"/><stop offset="0.26" stop-color="#7773ff"/><stop offset="0.4" stop-color="#534fff"/><stop offset="0.6" stop-color="#322dff"/><stop offset="1" stop-color="#0600ff"/></linearGradient><linearGradient id="w90" gradientUnits="userSpaceOnUse" x1="1348.6" y1="277.6" x2="1345.6" y2="625.3"><stop offset="0" stop-color="#ffffff"/><stop offset="0.04" stop-color="#ddddff"/><stop offset="0.09" stop-color="#bcbbff"/><stop offset="0.16" stop-color="#9997ff"/><stop offset="0.26" stop-color="#7472ff"/><stop offset="0.4" stop-color="#514eff"/><stop offset="0.6" stop-color="#302cff"/><stop offset="1" stop-color="#0400ff"/></linearGradient><linearGradient id="w91" gradientUnits="userSpaceOnUse" x1="1348.6" y1="277.6" x2="1339.3" y2="633.7"><stop offset="0" stop-color="#ffffff"/><stop offset="0.04" stop-color="#dcdcff"/><stop offset="0.09" stop-color="#bbbaff"/><stop offset="0.16" stop-color="#9796ff"/><stop offset="0.26" stop-color="#7271ff"/><stop offset="0.4" stop-color="#4f4dff"/><stop offset="0.6" stop-color="#2e2cff"/><stop offset="1" stop-color="#0200ff"/></linearGradient><linearGradient id="w92" gradientUnits="userSpaceOnUse" x1="1348.6" y1="277.6" x2="1332.7" y2="642.5"><stop offset="0" stop-color="#ffffff"/><stop offset="0.04" stop-color="#dcdbff"/><stop offset="0.09" stop-color="#b9b9ff"/><stop offset="0.16" stop-color="#9595ff"/><stop offset="0.26" stop-color="#7070ff"/><stop offset="0.4" stop-color="#4d4cff"/><stop offset="0.6" stop-color="#2c2bff"/><stop offset="1" stop-color="#0100ff"/></linearGradient><linearGradient id="w93" gradientUnits="userSpaceOnUse" x1="1348.6" y1="277.6" x2="1325.7" y2="651.7"><stop offset="0" stop-color="#ffffff"/><stop offset="0.04" stop-color="#dbdbff"/><stop offset="0.09" stop-color="#b8b8ff"/><stop offset="0.16" stop-color="#9393ff"/><stop offset="0.26" stop-color="#6e6eff"/><stop offset="0.4" stop-color="#4b4bff"/><stop offset="0.6" stop-color="#2a2aff"/><stop offset="1" stop-color="#0000ff"/></linearGradient><linearGradient id="w94" gradientUnits="userSpaceOnUse" x1="1348.6" y1="277.6" x2="1319.7" y2="645.1"><stop offset="0" stop-color="#ffffff"/><stop offset="0.04" stop-color="#dbdbff"/><stop offset="0.09" stop-color="#b8b8ff"/><stop offset="0.16" stop-color="#9494ff"/><stop offset="0.26" stop-color="#6f6fff"/><stop offset="0.4" stop-color="#4c4cff"/><stop offset="0.6" stop-color="#2b2bff"/><stop offset="1" stop-color="#0000ff"/></linearGradient><linearGradient id="w95" gradientUnits="userSpaceOnUse" x1="1348.6" y1="277.6" x2="1316.0" y2="615.8"><stop offset="0" stop-color="#ffffff"/><stop offset="0.04" stop-color="#ddddff"/><stop offset="0.09" stop-color="#bbbcff"/><stop offset="0.16" stop-color="#9898ff"/><stop offset="0.26" stop-color="#7373ff"/><stop offset="0.4" stop-color="#4f4fff"/><stop offset="0.6" stop-color="#2d2dff"/><stop offset="1" stop-color="#0001ff"/></linearGradient><linearGradient id="w96" gradientUnits="userSpaceOnUse" x1="1348.6" y1="277.6" x2="1312.9" y2="590.8"><stop offset="0" stop-color="#ffffff"/><stop offset="0.04" stop-color="#dedfff"/><stop offset="0.09" stop-color="#bebfff"/><stop offset="0.16" stop-color="#9b9cff"/><stop offset="0.26" stop-color="#7677ff"/><stop offset="0.4" stop-color="#5253ff"/><stop offset="0.6" stop-color="#2e30ff"/><stop offset="1" stop-color="#0002ff"/></linearGradient><linearGradient id="w97" gradientUnits="userSpaceOnUse" x1="1348.6" y1="277.6" x2="1310.2" y2="569.1"><stop offset="0" stop-color="#ffffff"/><stop offset="0.04" stop-color="#e0e0ff"/><stop offset="0.09" stop-color="#c0c1ff"/><stop offset="0.16" stop-color="#9e9fff"/><stop offset="0.26" stop-color="#797bff"/><stop offset="0.4" stop-color="#5456ff"/><stop offset="0.6" stop-color="#3033ff"/><stop offset="1" stop-color="#0003ff"/></linearGradient><linearGradient id="w98" gradientUnits="userSpaceOnUse" x1="1348.6" y1="277.6" x2="1307.9" y2="550.1"><stop offset="0" stop-color="#ffffff"/><stop offset="0.04" stop-color="#e1e2ff"/><stop offset="0.09" stop-color="#c3c4ff"/><stop offset="0.16" stop-color="#a1a2ff"/><stop offset="0.26" stop-color="#7c7eff"/><stop offset="0.4" stop-color="#575aff"/><stop offset="0.6" stop-color="#3236ff"/><stop offset="1" stop-color="#0005ff"/></linearGradient><linearGradient id="w99" gradientUnits="userSpaceOnUse" x1="1348.6" y1="277.6" x2="1305.8" y2="533.4"><stop offset="0" stop-color="#ffffff"/><stop offset="0.04" stop-color="#e2e3ff"/><stop offset="0.09" stop-color="#c5c6ff"/><stop offset="0.16" stop-color="#a3a6ff"/><stop offset="0.26" stop-color="#7f82ff"/><stop offset="0.4" stop-color="#595eff"/><stop offset="0.6" stop-color="#3439ff"/><stop offset="1" stop-color="#0007ff"/></linearGradient><linearGradient id="w100" gradientUnits="userSpaceOnUse" x1="1348.6" y1="277.6" x2="1303.9" y2="518.6"><stop offset="0" stop-color="#ffffff"/><stop offset="0.04" stop-color="#e3e4ff"/><stop offset="0.09" stop-color="#c6c8ff"/><stop offset="0.16" stop-color="#a5a9ff"/><stop offset="0.26" stop-color="#8185ff"/><stop offset="0.4" stop-color="#5b61ff"/><stop offset="0.6" stop-color="#353cff"/><stop offset="1" stop-color="#0009ff"/></linearGradient><linearGradient id="w101" gradientUnits="userSpaceOnUse" x1="1348.6" y1="277.6" x2="1302.3" y2="505.2"><stop offset="0" stop-color="#ffffff"/><stop offset="0.04" stop-color="#e4e5ff"/><stop offset="0.09" stop-color="#c8caff"/><stop offset="0.16" stop-color="#a7abff"/><stop offset="0.26" stop-color="#8389ff"/><stop offset="0.4" stop-color="#5d64ff"/><stop offset="0.6" stop-color="#373fff"/><stop offset="1" stop-color="#000bff"/></linearGradient><linearGradient id="w102" gradientUnits="userSpaceOnUse" x1="1348.6" y1="277.6" x2="1300.8" y2="493.2"><stop offset="0" stop-color="#ffffff"/><stop offset="0.04" stop-color="#e5e6ff"/><stop offset="0.09" stop-color="#c9ccff"/><stop offset="0.16" stop-color="#a9aeff"/><stop offset="0.26" stop-color="#858cff"/><stop offset="0.4" stop-color="#5f68ff"/><stop offset="0.6" stop-color="#3842ff"/><stop offset="1" stop-color="#000dff"/></linearGradient><linearGradient id="w103" gradientUnits="userSpaceOnUse" x1="1348.6" y1="277.6" x2="1299.4" y2="482.4"><stop offset="0" stop-color="#ffffff"/><stop offset="0.04" stop-color="#e6e7ff"/><stop offset="0.09" stop-color="#cbceff"/><stop offset="0.16" stop-color="#abb0ff"/><stop offset="0.26" stop-color="#878fff"/><stop offset="0.4" stop-color="#616bff"/><stop offset="0.6" stop-color="#3945ff"/><stop offset="1" stop-color="#0010ff"/></linearGradient><linearGradient id="w104" gradientUnits="userSpaceOnUse" x1="1348.6" y1="277.6" x2="1298.2" y2="472.4"><stop offset="0" stop-color="#ffffff"/><stop offset="0.04" stop-color="#e6e8ff"/><stop offset="0.09" stop-color="#ccd0ff"/><stop offset="0.16" stop-color="#adb3ff"/><stop offset="0.26" stop-color="#8992ff"/><stop offset="0.4" stop-color="#636eff"/><stop offset="0.6" stop-color="#3b49ff"/><stop offset="1" stop-color="#0012ff"/></linearGradient><linearGradient id="w105" gradientUnits="userSpaceOnUse" x1="1348.6" y1="277.6" x2="1297.1" y2="463.4"><stop offset="0" stop-color="#ffffff"/><stop offset="0.04" stop-color="#e7e9ff"/><stop offset="0.09" stop-color="#cdd1ff"/><stop offset="0.16" stop-color="#afb5ff"/><stop offset="0.26" stop-color="#8b95ff"/><stop offset="0.4" stop-color="#6571ff"/><stop offset="0.6" stop-color="#3c4cff"/><stop offset="1" stop-color="#0015ff"/></linearGradient><linearGradient id="w106" gradientUnits="userSpaceOnUse" x1="1348.6" y1="277.6" x2="1296.0" y2="455.0"><stop offset="0" stop-color="#ffffff"/><stop offset="0.04" stop-color="#e8eaff"/><stop offset="0.09" stop-color="#ced3ff"/><stop offset="0.16" stop-color="#b0b7ff"/><stop offset="0.26" stop-color="#8d97ff"/><stop offset="0.4" stop-color="#6674ff"/><stop offset="0.6" stop-color="#3d4fff"/><stop offset="1" stop-color="#0017ff"/></linearGradient><linearGradient id="w107" gradientUnits="userSpaceOnUse" x1="1348.6" y1="277.6" x2="1295.1" y2="447.3"><stop offset="0" stop-color="#ffffff"/><stop offset="0.04" stop-color="#e8ebff"/><stop offset="0.09" stop-color="#cfd4ff"/><stop offset="0.16" stop-color="#b1b9ff"/><stop offset="0.26" stop-color="#8e9aff"/><stop offset="0.4" stop-color="#6877ff"/><stop offset="0.6" stop-color="#3e52ff"/><stop offset="1" stop-color="#001aff"/></linearGradient><linearGradient id="w108" gradientUnits="userSpaceOnUse" x1="1348.6" y1="277.6" x2="1294.2" y2="440.2"><stop offset="0" stop-color="#ffffff"/><stop offset="0.04" stop-color="#e9ebff"/><stop offset="0.09" stop-color="#d0d6ff"/><stop offset="0.16" stop-color="#b3bbff"/><stop offset="0.26" stop-color="#909cff"/><stop offset="0.4" stop-color="#697aff"/><stop offset="0.6" stop-color="#3f55ff"/><stop offset="1" stop-color="#001dff"/></linearGradient><linearGradient id="w109" gradientUnits="userSpaceOnUse" x1="1348.6" y1="277.6" x2="1293.4" y2="433.5"><stop offset="0" stop-color="#ffffff"/><stop offset="0.04" stop-color="#e9ecff"/><stop offset="0.09" stop-color="#d1d7ff"/><stop offset="0.16" stop-color="#b4bdff"/><stop offset="0.26" stop-color="#919fff"/><stop offset="0.4" stop-color="#6b7dff"/><stop offset="0.6" stop-color="#4058ff"/><stop offset="1" stop-color="#001fff"/></linearGradient><linearGradient id="w110" gradientUnits="userSpaceOnUse" x1="1348.6" y1="277.6" x2="1292.6" y2="427.4"><stop offset="0" stop-color="#ffffff"/><stop offset="0.04" stop-color="#eaecff"/><stop offset="0.09" stop-color="#d2d8ff"/><stop offset="0.16" stop-color="#b5bfff"/><stop offset="0.26" stop-color="#93a1ff"/><stop offset="0.4" stop-color="#6c80ff"/><stop offset="0.6" stop-color="#415bff"/><stop offset="1" stop-color="#0022ff"/></linearGradient><linearGradient id="w111" gradientUnits="userSpaceOnUse" x1="1348.6" y1="277.6" x2="1291.9" y2="421.6"><stop offset="0" stop-color="#ffffff"/><stop offset="0.04" stop-color="#eaedff"/><stop offset="0.09" stop-color="#d3d9ff"/><stop offset="0.16" stop-color="#b6c1ff"/><stop offset="0.26" stop-color="#94a4ff"/><stop offset="0.4" stop-color="#6d83ff"/><stop offset="0.6" stop-color="#425eff"/><stop offset="1" stop-color="#0025ff"/></linearGradient><linearGradient id="w112" gradientUnits="userSpaceOnUse" x1="1348.6" y1="277.6" x2="1291.2" y2="416.1"><stop offset="0" stop-color="#ffffff"/><stop offset="0.04" stop-color="#eaeeff"/><stop offset="0.09" stop-color="#d3daff"/><stop offset="0.16" stop-color="#b7c3ff"/><stop offset="0.26" stop-color="#95a6ff"/><stop offset="0.4" stop-color="#6f85ff"/><stop offset="0.6" stop-color="#4361ff"/><stop offset="1" stop-color="#0028ff"/></linearGradient><linearGradient id="w113" gradientUnits="userSpaceOnUse" x1="1348.6" y1="277.6" x2="1290.6" y2="411.0"><stop offset="0" stop-color="#ffffff"/><stop offset="0.04" stop-color="#ebeeff"/><stop offset="0.09" stop-color="#d4dbff"/><stop offset="0.16" stop-color="#b8c4ff"/><stop offset="0.26" stop-color="#97a8ff"/><stop offset="0.4" stop-color="#7088ff"/><stop offset="0.6" stop-color="#4464ff"/><stop offset="1" stop-color="#002bff"/></linearGradient><linearGradient id="w114" gradientUnits="userSpaceOnUse" x1="1348.6" y1="277.6" x2="1290.0" y2="406.2"><stop offset="0" stop-color="#ffffff"/><stop offset="0.04" stop-color="#ebefff"/><stop offset="0.09" stop-color="#d5dcff"/><stop offset="0.16" stop-color="#b9c6ff"/><stop offset="0.26" stop-color="#98aaff"/><stop offset="0.4" stop-color="#718bff"/><stop offset="0.6" stop-color="#4567ff"/><stop offset="1" stop-color="#002eff"/></linearGradient><linearGradient id="w115" gradientUnits="userSpaceOnUse" x1="1348.6" y1="277.6" x2="1289.4" y2="401.7"><stop offset="0" stop-color="#ffffff"/><stop offset="0.04" stop-color="#ebefff"/><stop offset="0.09" stop-color="#d5ddff"/><stop offset="0.16" stop-color="#bac7ff"/><stop offset="0.26" stop-color="#99acff"/><stop offset="0.4" stop-color="#728dff"/><stop offset="0.6" stop-color="#4669ff"/><stop offset="1" stop-color="#0031ff"/></linearGradient><linearGradient id="w116" gradientUnits="userSpaceOnUse" x1="1348.6" y1="277.6" x2="1288.9" y2="397.4"><stop offset="0" stop-color="#ffffff"/><stop offset="0.04" stop-color="#ecf0ff"/><stop offset="0.09" stop-color="#d6deff"/><stop offset="0.16" stop-color="#bbc9ff"/><stop offset="0.26" stop-color="#9aaeff"/><stop offset="0.4" stop-color="#7390ff"/><stop offset="0.6" stop-color="#476cff"/><stop offset="1" stop-color="#0034ff"/></linearGradient><linearGradient id="w117" gradientUnits="userSpaceOnUse" x1="1348.6" y1="277.6" x2="1288.4" y2="393.3"><stop offset="0" stop-color="#ffffff"/><stop offset="0.04" stop-color="#ecf0ff"/><stop offset="0.09" stop-color="#d7dfff"/><stop offset="0.16" stop-color="#bccaff"/><stop offset="0.26" stop-color="#9bb0ff"/><stop offset="0.4" stop-color="#7492ff"/><stop offset="0.6" stop-color="#486fff"/><stop offset="1" stop-color="#0037ff"/></linearGradient><linearGradient id="w118" gradientUnits="userSpaceOnUse" x1="1348.6" y1="277.6" x2="1287.9" y2="389.4"><stop offset="0" stop-color="#ffffff"/><stop offset="0.04" stop-color="#ecf1ff"/><stop offset="0.09" stop-color="#d7e0ff"/><stop offset="0.16" stop-color="#bdccff"/><stop offset="0.26" stop-color="#9cb2ff"/><stop offset="0.4" stop-color="#7594ff"/><stop offset="0.6" stop-color="#4972ff"/><stop offset="1" stop-color="#003aff"/></linearGradient><linearGradient id="w119" gradientUnits="userSpaceOnUse" x1="1348.6" y1="277.6" x2="1287.4" y2="385.7"><stop offset="0" stop-color="#ffffff"/><stop offset="0.04" stop-color="#edf1ff"/><stop offset="0.09" stop-color="#d8e1ff"/><stop offset="0.16" stop-color="#becdff"/><stop offset="0.26" stop-color="#9db4ff"/><stop offset="0.4" stop-color="#7697ff"/><stop offset="0.6" stop-color="#4975ff"/><stop offset="1" stop-color="#003dff"/></linearGradient><linearGradient id="w120" gradientUnits="userSpaceOnUse" x1="1348.6" y1="277.6" x2="1287.0" y2="382.2"><stop offset="0" stop-color="#ffffff"/><stop offset="0.04" stop-color="#edf1ff"/><stop offset="0.09" stop-color="#d8e2ff"/><stop offset="0.16" stop-color="#becfff"/><stop offset="0.26" stop-color="#9eb6ff"/><stop offset="0.4" stop-color="#7799ff"/><stop offset="0.6" stop-color="#4a77ff"/><stop offset="1" stop-color="#0040ff"/></linearGradient><linearGradient id="w121" gradientUnits="userSpaceOnUse" x1="1348.6" y1="277.6" x2="1286.6" y2="378.8"><stop offset="0" stop-color="#ffffff"/><stop offset="0.04" stop-color="#edf2ff"/><stop offset="0.09" stop-color="#d9e3ff"/><stop offset="0.16" stop-color="#bfd0ff"/><stop offset="0.26" stop-color="#9fb8ff"/><stop offset="0.4" stop-color="#789cff"/><stop offset="0.6" stop-color="#4b7aff"/><stop offset="1" stop-color="#0043ff"/></linearGradient><linearGradient id="w122" gradientUnits="userSpaceOnUse" x1="1348.6" y1="277.6" x2="1286.2" y2="375.6"><stop offset="0" stop-color="#ffffff"/><stop offset="0.04" stop-color="#edf2ff"/><stop offset="0.09" stop-color="#d9e4ff"/><stop offset="0.16" stop-color="#c0d1ff"/><stop offset="0.26" stop-color="#a0baff"/><stop offset="0.4" stop-color="#799eff"/><stop offset="0.6" stop-color="#4c7dff"/><stop offset="1" stop-color="#0046ff"/></linearGradient><linearGradient id="w123" gradientUnits="userSpaceOnUse" x1="1348.6" y1="277.6" x2="1285.8" y2="372.5"><stop offset="0" stop-color="#ffffff"/><stop offset="0.04" stop-color="#eef3ff"/><stop offset="0.09" stop-color="#dae4ff"/><stop offset="0.16" stop-color="#c0d2ff"/><stop offset="0.26" stop-color="#a0bcff"/><stop offset="0.4" stop-color="#7aa0ff"/><stop offset="0.6" stop-color="#4c80ff"/><stop offset="1" stop-color="#0049ff"/></linearGradient><linearGradient id="w124" gradientUnits="userSpaceOnUse" x1="1348.6" y1="277.6" x2="1285.4" y2="369.5"><stop offset="0" stop-color="#ffffff"/><stop offset="0.04" stop-color="#eef3ff"/><stop offset="0.09" stop-color="#dae5ff"/><stop offset="0.16" stop-color="#c1d4ff"/><stop offset="0.26" stop-color="#a1bdff"/><stop offset="0.4" stop-color="#7ba2ff"/><stop offset="0.6" stop-color="#4d82ff"/><stop offset="1" stop-color="#004cff"/></linearGradient><linearGradient id="w125" gradientUnits="userSpaceOnUse" x1="1348.6" y1="277.6" x2="1285.1" y2="366.7"><stop offset="0" stop-color="#ffffff"/><stop offset="0.04" stop-color="#eef3ff"/><stop offset="0.09" stop-color="#dbe6ff"/><stop offset="0.16" stop-color="#c2d5ff"/><stop offset="0.26" stop-color="#a2bfff"/><stop offset="0.4" stop-color="#7ca5ff"/><stop offset="0.6" stop-color="#4e85ff"/><stop offset="1" stop-color="#004fff"/></linearGradient><linearGradient id="w126" gradientUnits="userSpaceOnUse" x1="1348.6" y1="277.6" x2="1284.7" y2="363.9"><stop offset="0" stop-color="#ffffff"/><stop offset="0.04" stop-color="#eef4ff"/><stop offset="0.09" stop-color="#dbe7ff"/><stop offset="0.16" stop-color="#c2d6ff"/><stop offset="0.26" stop-color="#a3c1ff"/><stop offset="0.4" stop-color="#7ca7ff"/><stop offset="0.6" stop-color="#4e88ff"/><stop offset="1" stop-color="#0053ff"/></linearGradient><linearGradient id="w127" gradientUnits="userSpaceOnUse" x1="1348.6" y1="277.6" x2="1284.4" y2="361.3"><stop offset="0" stop-color="#ffffff"/><stop offset="0.04" stop-color="#eef4ff"/><stop offset="0.09" stop-color="#dbe7ff"/><stop offset="0.16" stop-color="#c3d7ff"/><stop offset="0.26" stop-color="#a3c2ff"/><stop offset="0.4" stop-color="#7da9ff"/><stop offset="0.6" stop-color="#4f8aff"/><stop offset="1" stop-color="#0056ff"/></linearGradient><linearGradient id="w128" gradientUnits="userSpaceOnUse" x1="1348.6" y1="277.6" x2="1284.1" y2="358.7"><stop offset="0" stop-color="#ffffff"/><stop offset="0.04" stop-color="#eff4ff"/><stop offset="0.09" stop-color="#dce8ff"/><stop offset="0.16" stop-color="#c3d8ff"/><stop offset="0.26" stop-color="#a4c4ff"/><stop offset="0.4" stop-color="#7eabff"/><stop offset="0.6" stop-color="#508dff"/><stop offset="1" stop-color="#0059ff"/></linearGradient><linearGradient id="w129" gradientUnits="userSpaceOnUse" x1="1348.6" y1="277.6" x2="1283.8" y2="356.2"><stop offset="0" stop-color="#ffffff"/><stop offset="0.04" stop-color="#eff5ff"/><stop offset="0.09" stop-color="#dce9ff"/><stop offset="0.16" stop-color="#c4d9ff"/><stop offset="0.26" stop-color="#a5c6ff"/><stop offset="0.4" stop-color="#7fadff"/><stop offset="0.6" stop-color="#508fff"/><stop offset="1" stop-color="#005cff"/></linearGradient><linearGradient id="w130" gradientUnits="userSpaceOnUse" x1="1348.6" y1="277.6" x2="1283.5" y2="353.8"><stop offset="0" stop-color="#ffffff"/><stop offset="0.04" stop-color="#eff5ff"/><stop offset="0.09" stop-color="#dde9ff"/><stop offset="0.16" stop-color="#c5daff"/><stop offset="0.26" stop-color="#a6c7ff"/><stop offset="0.4" stop-color="#80afff"/><stop offset="0.6" stop-color="#5192ff"/><stop offset="1" stop-color="#005fff"/></linearGradient><linearGradient id="w131" gradientUnits="userSpaceOnUse" x1="1348.6" y1="277.6" x2="1283.2" y2="351.5"><stop offset="0" stop-color="#ffffff"/><stop offset="0.04" stop-color="#eff5ff"/><stop offset="0.09" stop-color="#ddeaff"/><stop offset="0.16" stop-color="#c5dcff"/><stop offset="0.26" stop-color="#a6c9ff"/><stop offset="0.4" stop-color="#80b1ff"/><stop offset="0.6" stop-color="#5295ff"/><stop offset="1" stop-color="#0063ff"/></linearGradient><linearGradient id="w132" gradientUnits="userSpaceOnUse" x1="1348.6" y1="277.6" x2="1282.9" y2="349.3"><stop offset="0" stop-color="#ffffff"/><stop offset="0.04" stop-color="#eff6ff"/><stop offset="0.09" stop-color="#ddebff"/><stop offset="0.16" stop-color="#c6ddff"/><stop offset="0.26" stop-color="#a7caff"/><stop offset="0.4" stop-color="#81b3ff"/><stop offset="0.6" stop-color="#5297ff"/><stop offset="1" stop-color="#0066ff"/></linearGradient><linearGradient id="w133" gradientUnits="userSpaceOnUse" x1="1348.6" y1="277.6" x2="1282.6" y2="347.1"><stop offset="0" stop-color="#ffffff"/><stop offset="0.04" stop-color="#f0f6ff"/><stop offset="0.09" stop-color="#deebff"/><stop offset="0.16" stop-color="#c6deff"/><stop offset="0.26" stop-color="#a8ccff"/><stop offset="0.4" stop-color="#82b5ff"/><stop offset="0.6" stop-color="#539aff"/><stop offset="1" stop-color="#0069ff"/></linearGradient><linearGradient id="w134" gradientUnits="userSpaceOnUse" x1="1348.6" y1="277.6" x2="1282.4" y2="345.0"><stop offset="0" stop-color="#ffffff"/><stop offset="0.04" stop-color="#f0f6ff"/><stop offset="0.09" stop-color="#deecff"/><stop offset="0.16" stop-color="#c7dfff"/><stop offset="0.26" stop-color="#a8cdff"/><stop offset="0.4" stop-color="#82b7ff"/><stop offset="0.6" stop-color="#539dff"/><stop offset="1" stop-color="#006dff"/></linearGradient><linearGradient id="w135" gradientUnits="userSpaceOnUse" x1="1348.6" y1="277.6" x2="1282.1" y2="342.9"><stop offset="0" stop-color="#ffffff"/><stop offset="0.04" stop-color="#f0f7ff"/><stop offset="0.09" stop-color="#deedff"/><stop offset="0.16" stop-color="#c7e0ff"/><stop offset="0.26" stop-color="#a9cfff"/><stop offset="0.4" stop-color="#83b9ff"/><stop offset="0.6" stop-color="#549fff"/><stop offset="1" stop-color="#0070ff"/></linearGradient><linearGradient id="w136" gradientUnits="userSpaceOnUse" x1="1348.6" y1="277.6" x2="1281.9" y2="340.9"><stop offset="0" stop-color="#ffffff"/><stop offset="0.04" stop-color="#f0f7ff"/><stop offset="0.09" stop-color="#dfedff"/><stop offset="0.16" stop-color="#c8e1ff"/><stop offset="0.26" stop-color="#a9d0ff"/><stop offset="0.4" stop-color="#84bcff"/><stop offset="0.6" stop-color="#55a2ff"/><stop offset="1" stop-color="#0073ff"/></linearGradient><linearGradient id="w137" gradientUnits="userSpaceOnUse" x1="1348.6" y1="277.6" x2="1281.6" y2="339.0"><stop offset="0" stop-color="#ffffff"/><stop offset="0.04" stop-color="#f0f7ff"/><stop offset="0.09" stop-color="#dfeeff"/><stop offset="0.16" stop-color="#c8e2ff"/><stop offset="0.26" stop-color="#aad2ff"/><stop offset="0.4" stop-color="#84bdff"/><stop offset="0.6" stop-color="#55a4ff"/><stop offset="1" stop-color="#0077ff"/></linearGradient><linearGradient id="w138" gradientUnits="userSpaceOnUse" x1="1348.6" y1="277.6" x2="1281.4" y2="337.0"><stop offset="0" stop-color="#ffffff"/><stop offset="0.04" stop-color="#f0f7ff"/><stop offset="0.09" stop-color="#dfeeff"/><stop offset="0.16" stop-color="#c8e3ff"/><stop offset="0.26" stop-color="#abd3ff"/><stop offset="0.4" stop-color="#85bfff"/><stop offset="0.6" stop-color="#56a7ff"/><stop offset="1" stop-color="#007aff"/></linearGradient><linearGradient id="w139" gradientUnits="userSpaceOnUse" x1="1348.6" y1="277.6" x2="1281.2" y2="335.2"><stop offset="0" stop-color="#ffffff"/><stop offset="0.04" stop-color="#f0f8ff"/><stop offset="0.09" stop-color="#dfefff"/><stop offset="0.16" stop-color="#c9e4ff"/><stop offset="0.26" stop-color="#abd5ff"/><stop offset="0.4" stop-color="#86c1ff"/><stop offset="0.6" stop-color="#56a9ff"/><stop offset="1" stop-color="#007eff"/></linearGradient><linearGradient id="w140" gradientUnits="userSpaceOnUse" x1="1348.6" y1="277.6" x2="1280.9" y2="333.4"><stop offset="0" stop-color="#ffffff"/><stop offset="0.04" stop-color="#f1f8ff"/><stop offset="0.09" stop-color="#e0f0ff"/><stop offset="0.16" stop-color="#c9e5ff"/><stop offset="0.26" stop-color="#acd6ff"/><stop offset="0.4" stop-color="#86c3ff"/><stop offset="0.6" stop-color="#57acff"/><stop offset="1" stop-color="#0081ff"/></linearGradient><linearGradient id="w141" gradientUnits="userSpaceOnUse" x1="1348.6" y1="277.6" x2="1280.7" y2="331.6"><stop offset="0" stop-color="#ffffff"/><stop offset="0.04" stop-color="#f1f8ff"/><stop offset="0.09" stop-color="#e0f0ff"/><stop offset="0.16" stop-color="#cae5ff"/><stop offset="0.26" stop-color="#acd7ff"/><stop offset="0.4" stop-color="#87c5ff"/><stop offset="0.6" stop-color="#57afff"/><stop offset="1" stop-color="#0085ff"/></linearGradient><linearGradient id="w142" gradientUnits="userSpaceOnUse" x1="1348.6" y1="277.6" x2="1280.5" y2="329.8"><stop offset="0" stop-color="#ffffff"/><stop offset="0.04" stop-color="#f1f8ff"/><stop offset="0.09" stop-color="#e0f1ff"/><stop offset="0.16" stop-color="#cae6ff"/><stop offset="0.26" stop-color="#add9ff"/><stop offset="0.4" stop-color="#88c7ff"/><stop offset="0.6" stop-color="#58b1ff"/><stop offset="1" stop-color="#0088ff"/></linearGradient><linearGradient id="w143" gradientUnits="userSpaceOnUse" x1="1348.6" y1="277.6" x2="1280.3" y2="328.1"><stop offset="0" stop-color="#ffffff"/><stop offset="0.04" stop-color="#f1f9ff"/><stop offset="0.09" stop-color="#e0f1ff"/><stop offset="0.16" stop-color="#cbe7ff"/><stop offset="0.26" stop-color="#addaff"/><stop offset="0.4" stop-color="#88c9ff"/><stop offset="0.6" stop-color="#59b4ff"/><stop offset="1" stop-color="#008cff"/></linearGradient><linearGradient id="w144" gradientUnits="userSpaceOnUse" x1="1348.6" y1="277.6" x2="1280.1" y2="326.5"><stop offset="0" stop-color="#ffffff"/><stop offset="0.04" stop-color="#f1f9ff"/><stop offset="0.09" stop-color="#e1f2ff"/><stop offset="0.16" stop-color="#cbe8ff"/><stop offset="0.26" stop-color="#aedcff"/><stop offset="0.4" stop-color="#89cbff"/><stop offset="0.6" stop-color="#59b6ff"/><stop offset="1" stop-color="#008fff"/></linearGradient><linearGradient id="w145" gradientUnits="userSpaceOnUse" x1="1348.6" y1="277.6" x2="1279.9" y2="324.8"><stop offset="0" stop-color="#ffffff"/><stop offset="0.04" stop-color="#f1f9ff"/><stop offset="0.09" stop-color="#e1f2ff"/><stop offset="0.16" stop-color="#cbe9ff"/><stop offset="0.26" stop-color="#afddff"/><stop offset="0.4" stop-color="#89cdff"/><stop offset="0.6" stop-color="#5ab9ff"/><stop offset="1" stop-color="#0093ff"/></linearGradient><linearGradient id="w146" gradientUnits="userSpaceOnUse" x1="1348.6" y1="277.6" x2="1279.7" y2="323.2"><stop offset="0" stop-color="#ffffff"/><stop offset="0.04" stop-color="#f1f9ff"/><stop offset="0.09" stop-color="#e1f3ff"/><stop offset="0.16" stop-color="#cceaff"/><stop offset="0.26" stop-color="#afdeff"/><stop offset="0.4" stop-color="#8acfff"/><stop offset="0.6" stop-color="#5abcff"/><stop offset="1" stop-color="#0097ff"/></linearGradient><linearGradient id="w147" gradientUnits="userSpaceOnUse" x1="1348.6" y1="277.6" x2="1279.5" y2="321.6"><stop offset="0" stop-color="#ffffff"/><stop offset="0.04" stop-color="#f1faff"/><stop offset="0.09" stop-color="#e2f3ff"/><stop offset="0.16" stop-color="#ccebff"/><stop offset="0.26" stop-color="#b0e0ff"/><stop offset="0.4" stop-color="#8bd1ff"/><stop offset="0.6" stop-color="#5bbeff"/><stop offset="1" stop-color="#009bff"/></linearGradient><linearGradient id="w148" gradientUnits="userSpaceOnUse" x1="1348.6" y1="277.6" x2="1279.3" y2="320.1"><stop offset="0" stop-color="#ffffff"/><stop offset="0.04" stop-color="#f2faff"/><stop offset="0.09" stop-color="#e2f4ff"/><stop offset="0.16" stop-color="#cdecff"/><stop offset="0.26" stop-color="#b0e1ff"/><stop offset="0.4" stop-color="#8bd3ff"/><stop offset="0.6" stop-color="#5bc1ff"/><stop offset="1" stop-color="#009eff"/></linearGradient><linearGradient id="w149" gradientUnits="userSpaceOnUse" x1="1348.6" y1="277.6" x2="1279.1" y2="318.5"><stop offset="0" stop-color="#ffffff"/><stop offset="0.04" stop-color="#f2faff"/><stop offset="0.09" stop-color="#e2f4ff"/><stop offset="0.16" stop-color="#cdedff"/><stop offset="0.26" stop-color="#b1e2ff"/><stop offset="0.4" stop-color="#8cd5ff"/><stop offset="0.6" stop-color="#5cc4ff"/><stop offset="1" stop-color="#00a2ff"/></linearGradient><linearGradient id="w150" gradientUnits="userSpaceOnUse" x1="1348.6" y1="277.6" x2="1278.9" y2="317.0"><stop offset="0" stop-color="#ffffff"/><stop offset="0.04" stop-color="#f2faff"/><stop offset="0.09" stop-color="#e2f5ff"/><stop offset="0.16" stop-color="#cdeeff"/><stop offset="0.26" stop-color="#b1e4ff"/><stop offset="0.4" stop-color="#8cd7ff"/><stop offset="0.6" stop-color="#5cc6ff"/><stop offset="1" stop-color="#00a6ff"/></linearGradient><linearGradient id="w151" gradientUnits="userSpaceOnUse" x1="1348.6" y1="277.6" x2="1278.7" y2="315.5"><stop offset="0" stop-color="#ffffff"/><stop offset="0.04" stop-color="#f2fbff"/><stop offset="0.09" stop-color="#e2f5ff"/><stop offset="0.16" stop-color="#ceefff"/><stop offset="0.26" stop-color="#b2e5ff"/><stop offset="0.4" stop-color="#8dd9ff"/><stop offset="0.6" stop-color="#5dc9ff"/><stop offset="1" stop-color="#00aaff"/></linearGradient><linearGradient id="w152" gradientUnits="userSpaceOnUse" x1="1348.6" y1="277.6" x2="1278.5" y2="314.1"><stop offset="0" stop-color="#ffffff"/><stop offset="0.04" stop-color="#f2fbff"/><stop offset="0.09" stop-color="#e3f6ff"/><stop offset="0.16" stop-color="#ceefff"/><stop offset="0.26" stop-color="#b2e7ff"/><stop offset="0.4" stop-color="#8edbff"/><stop offset="0.6" stop-color="#5dccff"/><stop offset="1" stop-color="#00aeff"/></linearGradient><linearGradient id="w153" gradientUnits="userSpaceOnUse" x1="1348.6" y1="277.6" x2="1278.3" y2="312.6"><stop offset="0" stop-color="#ffffff"/><stop offset="0.04" stop-color="#f2fbff"/><stop offset="0.09" stop-color="#e3f7ff"/><stop offset="0.16" stop-color="#cef0ff"/><stop offset="0.26" stop-color="#b3e8ff"/><stop offset="0.4" stop-color="#8eddff"/><stop offset="0.6" stop-color="#5ecfff"/><stop offset="1" stop-color="#00b2ff"/></linearGradient><linearGradient id="w154" gradientUnits="userSpaceOnUse" x1="1348.6" y1="277.6" x2="1278.2" y2="311.2"><stop offset="0" stop-color="#ffffff"/><stop offset="0.04" stop-color="#f2fbff"/><stop offset="0.09" stop-color="#e3f7ff"/><stop offset="0.16" stop-color="#cff1ff"/><stop offset="0.26" stop-color="#b3e9ff"/><stop offset="0.4" stop-color="#8fdfff"/><stop offset="0.6" stop-color="#5ed1ff"/><stop offset="1" stop-color="#00b6ff"/></linearGradient><linearGradient id="w155" gradientUnits="userSpaceOnUse" x1="1348.6" y1="277.6" x2="1278.0" y2="309.8"><stop offset="0" stop-color="#ffffff"/><stop offset="0.04" stop-color="#f2fcff"/><stop offset="0.09" stop-color="#e3f8ff"/><stop offset="0.16" stop-color="#cff2ff"/><stop offset="0.26" stop-color="#b4ebff"/><stop offset="0.4" stop-color="#8fe1ff"/><stop offset="0.6" stop-color="#5fd4ff"/><stop offset="1" stop-color="#00bbff"/></linearGradient><linearGradient id="w156" gradientUnits="userSpaceOnUse" x1="1348.6" y1="277.6" x2="1277.8" y2="308.3"><stop offset="0" stop-color="#ffffff"/><stop offset="0.04" stop-color="#f3fcff"/><stop offset="0.09" stop-color="#e4f8ff"/><stop offset="0.16" stop-color="#d0f3ff"/><stop offset="0.26" stop-color="#b4ecff"/><stop offset="0.4" stop-color="#90e3ff"/><stop offset="0.6" stop-color="#5fd7ff"/><stop offset="1" stop-color="#00bfff"/></linearGradient><linearGradient id="w157" gradientUnits="userSpaceOnUse" x1="1348.6" y1="277.6" x2="1277.6" y2="307.0"><stop offset="0" stop-color="#ffffff"/><stop offset="0.04" stop-color="#f3fcff"/><stop offset="0.09" stop-color="#e4f9ff"/><stop offset="0.16" stop-color="#d0f4ff"/><stop offset="0.26" stop-color="#b5eeff"/><stop offset="0.4" stop-color="#90e5ff"/><stop offset="0.6" stop-color="#60daff"/><stop offset="1" stop-color="#00c3ff"/></linearGradient><linearGradient id="w158" gradientUnits="userSpaceOnUse" x1="1348.6" y1="277.6" x2="1277.5" y2="305.6"><stop offset="0" stop-color="#ffffff"/><stop offset="0.04" stop-color="#f3fcff"/><stop offset="0.09" stop-color="#e4f9ff"/><stop offset="0.16" stop-color="#d0f5ff"/><stop offset="0.26" stop-color="#b5efff"/><stop offset="0.4" stop-color="#91e7ff"/><stop offset="0.6" stop-color="#60ddff"/><stop offset="1" stop-color="#00c8ff"/></linearGradient><linearGradient id="w159" gradientUnits="userSpaceOnUse" x1="1348.6" y1="277.6" x2="1277.3" y2="304.2"><stop offset="0" stop-color="#ffffff"/><stop offset="0.04" stop-color="#f3fcff"/><stop offset="0.09" stop-color="#e4faff"/><stop offset="0.16" stop-color="#d1f6ff"/><stop offset="0.26" stop-color="#b5f0ff"/><stop offset="0.4" stop-color="#91e9ff"/><stop offset="0.6" stop-color="#61e0ff"/><stop offset="1" stop-color="#00ccff"/></linearGradient><linearGradient id="w160" gradientUnits="userSpaceOnUse" x1="1348.6" y1="277.6" x2="1277.1" y2="302.9"><stop offset="0" stop-color="#ffffff"/><stop offset="0.04" stop-color="#f3fdff"/><stop offset="0.09" stop-color="#e5faff"/><stop offset="0.16" stop-color="#d1f7ff"/><stop offset="0.26" stop-color="#b6f2ff"/><stop offset="0.4" stop-color="#92ebff"/><stop offset="0.6" stop-color="#62e3ff"/><stop offset="1" stop-color="#00d1ff"/></linearGradient><linearGradient id="w161" gradientUnits="userSpaceOnUse" x1="1348.6" y1="277.6" x2="1277.0" y2="301.5"><stop offset="0" stop-color="#ffffff"/><stop offset="0.04" stop-color="#f3fdff"/><stop offset="0.09" stop-color="#e5fbff"/><stop offset="0.16" stop-color="#d1f7ff"/><stop offset="0.26" stop-color="#b6f3ff"/><stop offset="0.4" stop-color="#93edff"/><stop offset="0.6" stop-color="#62e5ff"/><stop offset="1" stop-color="#00d6ff"/></linearGradient><linearGradient id="w162" gradientUnits="userSpaceOnUse" x1="1348.6" y1="277.6" x2="1276.8" y2="300.2"><stop offset="0" stop-color="#ffffff"/><stop offset="0.04" stop-color="#f3fdff"/><stop offset="0.09" stop-color="#e5fbff"/><stop offset="0.16" stop-color="#d2f8ff"/><stop offset="0.26" stop-color="#b7f5ff"/><stop offset="0.4" stop-color="#93efff"/><stop offset="0.6" stop-color="#63e9ff"/><stop offset="1" stop-color="#00daff"/></linearGradient><linearGradient id="w163" gradientUnits="userSpaceOnUse" x1="1348.6" y1="277.6" x2="1276.6" y2="298.9"><stop offset="0" stop-color="#ffffff"/><stop offset="0.04" stop-color="#f3fdff"/><stop offset="0.09" stop-color="#e5fcff"/><stop offset="0.16" stop-color="#d2f9ff"/><stop offset="0.26" stop-color="#b7f6ff"/><stop offset="0.4" stop-color="#94f2ff"/><stop offset="0.6" stop-color="#63ecff"/><stop offset="1" stop-color="#00dfff"/></linearGradient><linearGradient id="w164" gradientUnits="userSpaceOnUse" x1="1348.6" y1="277.6" x2="1276.5" y2="297.6"><stop offset="0" stop-color="#ffffff"/><stop offset="0.04" stop-color="#f3feff"/><stop offset="0.09" stop-color="#e5fcff"/><stop offset="0.16" stop-color="#d2faff"/><stop offset="0.26" stop-color="#b8f7ff"/><stop offset="0.4" stop-color="#94f4ff"/><stop offset="0.6" stop-color="#64efff"/><stop offset="1" stop-color="#00e4ff"/></linearGradient><linearGradient id="w165" gradientUnits="userSpaceOnUse" x1="1348.6" y1="277.6" x2="1276.3" y2="296.3"><stop offset="0" stop-color="#ffffff"/><stop offset="0.04" stop-color="#f3feff"/><stop offset="0.09" stop-color="#e6fdff"/><stop offset="0.16" stop-color="#d3fbff"/><stop offset="0.26" stop-color="#b8f9ff"/><stop offset="0.4" stop-color="#95f6ff"/><stop offset="0.6" stop-color="#64f2ff"/><stop offset="1" stop-color="#00e9ff"/></linearGradient><linearGradient id="w166" gradientUnits="userSpaceOnUse" x1="1348.6" y1="277.6" x2="1276.2" y2="295.0"><stop offset="0" stop-color="#ffffff"/><stop offset="0.04" stop-color="#f4feff"/><stop offset="0.09" stop-color="#e6fdff"/><stop offset="0.16" stop-color="#d3fcff"/><stop offset="0.26" stop-color="#b9faff"/><stop offset="0.4" stop-color="#95f8ff"/><stop offset="0.6" stop-color="#65f5ff"/><stop offset="1" stop-color="#00efff"/></linearGradient><linearGradient id="w167" gradientUnits="userSpaceOnUse" x1="1348.6" y1="277.6" x2="1276.0" y2="293.7"><stop offset="0" stop-color="#ffffff"/><stop offset="0.04" stop-color="#f4feff"/><stop offset="0.09" stop-color="#e6feff"/><stop offset="0.16" stop-color="#d3fdff"/><stop offset="0.26" stop-color="#b9fcff"/><stop offset="0.4" stop-color="#96faff"/><stop offset="0.6" stop-color="#65f8ff"/><stop offset="1" stop-color="#00f4ff"/></linearGradient><linearGradient id="w168" gradientUnits="userSpaceOnUse" x1="1348.6" y1="277.6" x2="1275.8" y2="292.4"><stop offset="0" stop-color="#ffffff"/><stop offset="0.04" stop-color="#f4ffff"/><stop offset="0.09" stop-color="#e6feff"/><stop offset="0.16" stop-color="#d4feff"/><stop offset="0.26" stop-color="#bafdff"/><stop offset="0.4" stop-color="#97fdff"/><stop offset="0.6" stop-color="#66fcff"/><stop offset="1" stop-color="#00f9ff"/></linearGradient><linearGradient id="w169" gradientUnits="userSpaceOnUse" x1="1348.6" y1="277.6" x2="1275.7" y2="291.1"><stop offset="0" stop-color="#ffffff"/><stop offset="0.04" stop-color="#f4ffff"/><stop offset="0.09" stop-color="#e6ffff"/><stop offset="0.16" stop-color="#d4ffff"/><stop offset="0.26" stop-color="#baffff"/><stop offset="0.4" stop-color="#97ffff"/><stop offset="0.6" stop-color="#66ffff"/><stop offset="1" stop-color="#00ffff"/></linearGradient><linearGradient id="w170" gradientUnits="userSpaceOnUse" x1="1348.6" y1="277.6" x2="1275.5" y2="289.8"><stop offset="0" stop-color="#ffffff"/><stop offset="0.04" stop-color="#f4ffff"/><stop offset="0.09" stop-color="#e6ffff"/><stop offset="0.16" stop-color="#d4fffe"/><stop offset="0.26" stop-color="#bafffe"/><stop offset="0.4" stop-color="#97fffd"/><stop offset="0.6" stop-color="#66fffc"/><stop offset="1" stop-color="#00fffa"/></linearGradient><linearGradient id="w171" gradientUnits="userSpaceOnUse" x1="1348.6" y1="277.6" x2="1275.4" y2="288.5"><stop offset="0" stop-color="#ffffff"/><stop offset="0.04" stop-color="#f4ffff"/><stop offset="0.09" stop-color="#e6fffe"/><stop offset="0.16" stop-color="#d4fffe"/><stop offset="0.26" stop-color="#bafffd"/><stop offset="0.4" stop-color="#97fffb"/><stop offset="0.6" stop-color="#66fff9"/><stop offset="1" stop-color="#00fff6"/></linearGradient><linearGradient id="w172" gradientUnits="userSpaceOnUse" x1="1348.6" y1="277.6" x2="1275.2" y2="287.2"><stop offset="0" stop-color="#ffffff"/><stop offset="0.04" stop-color="#f4ffff"/><stop offset="0.09" stop-color="#e6fffe"/><stop offset="0.16" stop-color="#d4fffd"/><stop offset="0.26" stop-color="#bafffb"/><stop offset="0.4" stop-color="#96fff9"/><stop offset="0.6" stop-color="#66fff7"/><stop offset="1" stop-color="#00fff1"/></linearGradient><linearGradient id="w173" gradientUnits="userSpaceOnUse" x1="1348.6" y1="277.6" x2="1275.0" y2="286.0"><stop offset="0" stop-color="#ffffff"/><stop offset="0.04" stop-color="#f4fffe"/><stop offset="0.09" stop-color="#e6fffd"/><stop offset="0.16" stop-color="#d4fffc"/><stop offset="0.26" stop-color="#bafffa"/><stop offset="0.4" stop-color="#96fff7"/><stop offset="0.6" stop-color="#66fff4"/><stop offset="1" stop-color="#00ffec"/></linearGradient><linearGradient id="w174" gradientUnits="userSpaceOnUse" x1="1348.6" y1="277.6" x2="1274.9" y2="284.7"><stop offset="0" stop-color="#ffffff"/><stop offset="0.04" stop-color="#f4fffe"/><stop offset="0.09" stop-color="#e6fffd"/><stop offset="0.16" stop-color="#d3fffb"/><stop offset="0.26" stop-color="#b9fff9"/><stop offset="0.4" stop-color="#96fff5"/><stop offset="0.6" stop-color="#65fff1"/><stop offset="1" stop-color="#00ffe8"/></linearGradient><linearGradient id="w175" gradientUnits="userSpaceOnUse" x1="1348.6" y1="277.6" x2="1274.7" y2="283.4"><stop offset="0" stop-color="#ffffff"/><stop offset="0.04" stop-color="#f4fffe"/><stop offset="0.09" stop-color="#e6fffc"/><stop offset="0.16" stop-color="#d3fffa"/><stop offset="0.26" stop-color="#b9fff7"/><stop offset="0.4" stop-color="#96fff4"/><stop offset="0.6" stop-color="#65ffee"/><stop offset="1" stop-color="#00ffe3"/></linearGradient><linearGradient id="w176" gradientUnits="userSpaceOnUse" x1="1348.6" y1="277.6" x2="1274.6" y2="282.1"><stop offset="0" stop-color="#ffffff"/><stop offset="0.04" stop-color="#f4fffe"/><stop offset="0.09" stop-color="#e6fffc"/><stop offset="0.16" stop-color="#d3fffa"/><stop offset="0.26" stop-color="#b9fff6"/><stop offset="0.4" stop-color="#96fff2"/><stop offset="0.6" stop-color="#65ffeb"/><stop offset="1" stop-color="#00ffdf"/></linearGradient><linearGradient id="w177" gradientUnits="userSpaceOnUse" x1="1348.6" y1="277.6" x2="1274.4" y2="280.8"><stop offset="0" stop-color="#ffffff"/><stop offset="0.04" stop-color="#f4fffe"/><stop offset="0.09" stop-color="#e6fffc"/><stop offset="0.16" stop-color="#d3fff9"/><stop offset="0.26" stop-color="#b9fff5"/><stop offset="0.4" stop-color="#95fff0"/><stop offset="0.6" stop-color="#65ffe9"/><stop offset="1" stop-color="#00ffda"/></linearGradient><linearGradient id="w178" gradientUnits="userSpaceOnUse" x1="1348.6" y1="277.6" x2="1274.2" y2="279.5"><stop offset="0" stop-color="#ffffff"/><stop offset="0.04" stop-color="#f4fffd"/><stop offset="0.09" stop-color="#e6fffb"/><stop offset="0.16" stop-color="#d3fff8"/><stop offset="0.26" stop-color="#b9fff4"/><stop offset="0.4" stop-color="#95ffee"/><stop offset="0.6" stop-color="#65ffe6"/><stop offset="1" stop-color="#00ffd6"/></linearGradient><linearGradient id="w179" gradientUnits="userSpaceOnUse" x1="1348.6" y1="277.6" x2="1274.1" y2="278.2"><stop offset="0" stop-color="#ffffff"/><stop offset="0.04" stop-color="#f4fffd"/><stop offset="0.09" stop-color="#e6fffb"/><stop offset="0.16" stop-color="#d3fff7"/><stop offset="0.26" stop-color="#b9fff3"/><stop offset="0.4" stop-color="#95ffec"/><stop offset="0.6" stop-color="#64ffe3"/><stop offset="1" stop-color="#00ffd1"/></linearGradient><linearGradient id="w180" gradientUnits="userSpaceOnUse" x1="1348.6" y1="277.6" x2="1273.9" y2="276.9"><stop offset="0" stop-color="#ffffff"/><stop offset="0.04" stop-color="#f4fffd"/><stop offset="0.09" stop-color="#e6fffa"/><stop offset="0.16" stop-color="#d3fff6"/><stop offset="0.26" stop-color="#b8fff1"/><stop offset="0.4" stop-color="#95ffea"/><stop offset="0.6" stop-color="#64ffe1"/><stop offset="1" stop-color="#00ffcd"/></linearGradient><linearGradient id="w181" gradientUnits="userSpaceOnUse" x1="1348.6" y1="277.6" x2="1273.7" y2="275.6"><stop offset="0" stop-color="#ffffff"/><stop offset="0.04" stop-color="#f3fffd"/><stop offset="0.09" stop-color="#e6fffa"/><stop offset="0.16" stop-color="#d3fff6"/><stop offset="0.26" stop-color="#b8fff0"/><stop offset="0.4" stop-color="#95ffe8"/><stop offset="0.6" stop-color="#64ffde"/><stop offset="1" stop-color="#00ffc9"/></linearGradient><linearGradient id="w182" gradientUnits="userSpaceOnUse" x1="1348.6" y1="277.6" x2="1273.6" y2="274.3"><stop offset="0" stop-color="#ffffff"/><stop offset="0.04" stop-color="#f3fffd"/><stop offset="0.09" stop-color="#e6fff9"/><stop offset="0.16" stop-color="#d2fff5"/><stop offset="0.26" stop-color="#b8ffef"/><stop offset="0.4" stop-color="#94ffe7"/><stop offset="0.6" stop-color="#64ffdb"/><stop offset="1" stop-color="#00ffc5"/></linearGradient><linearGradient id="w183" gradientUnits="userSpaceOnUse" x1="1348.6" y1="277.6" x2="1273.4" y2="273.0"><stop offset="0" stop-color="#ffffff"/><stop offset="0.04" stop-color="#f3fffc"/><stop offset="0.09" stop-color="#e5fff9"/><stop offset="0.16" stop-color="#d2fff4"/><stop offset="0.26" stop-color="#b8ffee"/><stop offset="0.4" stop-color="#94ffe5"/><stop offset="0.6" stop-color="#64ffd9"/><stop offset="1" stop-color="#00ffc0"/></linearGradient><linearGradient id="w184" gradientUnits="userSpaceOnUse" x1="1348.6" y1="277.6" x2="1273.3" y2="271.6"><stop offset="0" stop-color="#ffffff"/><stop offset="0.04" stop-color="#f3fffc"/><stop offset="0.09" stop-color="#e5fff8"/><stop offset="0.16" stop-color="#d2fff3"/><stop offset="0.26" stop-color="#b8ffec"/><stop offset="0.4" stop-color="#94ffe3"/><stop offset="0.6" stop-color="#63ffd6"/><stop offset="1" stop-color="#00ffbc"/></linearGradient><linearGradient id="w185" gradientUnits="userSpaceOnUse" x1="1348.6" y1="277.6" x2="1273.1" y2="270.3"><stop offset="0" stop-color="#ffffff"/><stop offset="0.04" stop-color="#f3fffc"/><stop offset="0.09" stop-color="#e5fff8"/><stop offset="0.16" stop-color="#d2fff3"/><stop offset="0.26" stop-color="#b7ffeb"/><stop offset="0.4" stop-color="#94ffe1"/><stop offset="0.6" stop-color="#63ffd4"/><stop offset="1" stop-color="#00ffb8"/></linearGradient><linearGradient id="w186" gradientUnits="userSpaceOnUse" x1="1348.6" y1="277.6" x2="1272.9" y2="268.9"><stop offset="0" stop-color="#ffffff"/><stop offset="0.04" stop-color="#f3fffc"/><stop offset="0.09" stop-color="#e5fff8"/><stop offset="0.16" stop-color="#d2fff2"/><stop offset="0.26" stop-color="#b7ffea"/><stop offset="0.4" stop-color="#94ffdf"/><stop offset="0.6" stop-color="#63ffd1"/><stop offset="1" stop-color="#00ffb4"/></linearGradient><linearGradient id="w187" gradientUnits="userSpaceOnUse" x1="1348.6" y1="277.6" x2="1272.7" y2="267.6"><stop offset="0" stop-color="#ffffff"/><stop offset="0.04" stop-color="#f3fffc"/><stop offset="0.09" stop-color="#e5fff7"/><stop offset="0.16" stop-color="#d2fff1"/><stop offset="0.26" stop-color="#b7ffe9"/><stop offset="0.4" stop-color="#93ffde"/><stop offset="0.6" stop-color="#63ffcf"/><stop offset="1" stop-color="#00ffb0"/></linearGradient><linearGradient id="w188" gradientUnits="userSpaceOnUse" x1="1348.6" y1="277.6" x2="1272.6" y2="266.2"><stop offset="0" stop-color="#ffffff"/><stop offset="0.04" stop-color="#f3fffb"/><stop offset="0.09" stop-color="#e5fff7"/><stop offset="0.16" stop-color="#d2fff0"/><stop offset="0.26" stop-color="#b7ffe8"/><stop offset="0.4" stop-color="#93ffdc"/><stop offset="0.6" stop-color="#63ffcc"/><stop offset="1" stop-color="#00ffac"/></linearGradient><linearGradient id="w189" gradientUnits="userSpaceOnUse" x1="1348.6" y1="277.6" x2="1272.4" y2="264.8"><stop offset="0" stop-color="#ffffff"/><stop offset="0.04" stop-color="#f3fffb"/><stop offset="0.09" stop-color="#e5fff6"/><stop offset="0.16" stop-color="#d2fff0"/><stop offset="0.26" stop-color="#b7ffe6"/><stop offset="0.4" stop-color="#93ffda"/><stop offset="0.6" stop-color="#62ffc9"/><stop offset="1" stop-color="#00ffa8"/></linearGradient><linearGradient id="w190" gradientUnits="userSpaceOnUse" x1="1348.6" y1="277.6" x2="1272.2" y2="263.4"><stop offset="0" stop-color="#ffffff"/><stop offset="0.04" stop-color="#f3fffb"/><stop offset="0.09" stop-color="#e5fff6"/><stop offset="0.16" stop-color="#d1ffef"/><stop offset="0.26" stop-color="#b7ffe5"/><stop offset="0.4" stop-color="#93ffd8"/><stop offset="0.6" stop-color="#62ffc7"/><stop offset="1" stop-color="#00ffa4"/></linearGradient><linearGradient id="w191" gradientUnits="userSpaceOnUse" x1="1348.6" y1="277.6" x2="1272.1" y2="262.0"><stop offset="0" stop-color="#ffffff"/><stop offset="0.04" stop-color="#f3fffb"/><stop offset="0.09" stop-color="#e5fff5"/><stop offset="0.16" stop-color="#d1ffee"/><stop offset="0.26" stop-color="#b6ffe4"/><stop offset="0.4" stop-color="#92ffd7"/><stop offset="0.6" stop-color="#62ffc4"/><stop offset="1" stop-color="#00ffa0"/></linearGradient><linearGradient id="w192" gradientUnits="userSpaceOnUse" x1="1348.6" y1="277.6" x2="1271.9" y2="260.6"><stop offset="0" stop-color="#ffffff"/><stop offset="0.04" stop-color="#f3fffb"/><stop offset="0.09" stop-color="#e5fff5"/><stop offset="0.16" stop-color="#d1ffed"/><stop offset="0.26" stop-color="#b6ffe3"/><stop offset="0.4" stop-color="#92ffd5"/><stop offset="0.6" stop-color="#62ffc2"/><stop offset="1" stop-color="#00ff9c"/></linearGradient><linearGradient id="w193" gradientUnits="userSpaceOnUse" x1="1348.6" y1="277.6" x2="1271.7" y2="259.1"><stop offset="0" stop-color="#ffffff"/><stop offset="0.04" stop-color="#f3fffa"/><stop offset="0.09" stop-color="#e5fff4"/><stop offset="0.16" stop-color="#d1ffec"/><stop offset="0.26" stop-color="#b6ffe2"/><stop offset="0.4" stop-color="#92ffd3"/><stop offset="0.6" stop-color="#61ffbf"/><stop offset="1" stop-color="#00ff98"/></linearGradient><linearGradient id="w194" gradientUnits="userSpaceOnUse" x1="1348.6" y1="277.6" x2="1271.5" y2="257.6"><stop offset="0" stop-color="#ffffff"/><stop offset="0.04" stop-color="#f3fffa"/><stop offset="0.09" stop-color="#e5fff4"/><stop offset="0.16" stop-color="#d1ffec"/><stop offset="0.26" stop-color="#b6ffe0"/><stop offset="0.4" stop-color="#92ffd1"/><stop offset="0.6" stop-color="#61ffbd"/><stop offset="1" stop-color="#00ff94"/></linearGradient><linearGradient id="w195" gradientUnits="userSpaceOnUse" x1="1348.6" y1="277.6" x2="1271.3" y2="256.1"><stop offset="0" stop-color="#ffffff"/><stop offset="0.04" stop-color="#f3fffa"/><stop offset="0.09" stop-color="#e4fff4"/><stop offset="0.16" stop-color="#d1ffeb"/><stop offset="0.26" stop-color="#b6ffdf"/><stop offset="0.4" stop-color="#92ffcf"/><stop offset="0.6" stop-color="#61ffba"/><stop offset="1" stop-color="#00ff90"/></linearGradient><linearGradient id="w196" gradientUnits="userSpaceOnUse" x1="1348.6" y1="277.6" x2="1271.1" y2="254.6"><stop offset="0" stop-color="#ffffff"/><stop offset="0.04" stop-color="#f3fffa"/><stop offset="0.09" stop-color="#e4fff3"/><stop offset="0.16" stop-color="#d1ffea"/><stop offset="0.26" stop-color="#b5ffde"/><stop offset="0.4" stop-color="#91ffce"/><stop offset="0.6" stop-color="#61ffb8"/><stop offset="1" stop-color="#00ff8c"/></linearGradient><linearGradient id="w197" gradientUnits="userSpaceOnUse" x1="1348.6" y1="277.6" x2="1270.9" y2="253.1"><stop offset="0" stop-color="#ffffff"/><stop offset="0.04" stop-color="#f3fff9"/><stop offset="0.09" stop-color="#e4fff3"/><stop offset="0.16" stop-color="#d0ffe9"/><stop offset="0.26" stop-color="#b5ffdd"/><stop offset="0.4" stop-color="#91ffcc"/><stop offset="0.6" stop-color="#61ffb5"/><stop offset="1" stop-color="#00ff88"/></linearGradient><linearGradient id="w198" gradientUnits="userSpaceOnUse" x1="1348.6" y1="277.6" x2="1270.8" y2="251.5"><stop offset="0" stop-color="#ffffff"/><stop offset="0.04" stop-color="#f3fff9"/><stop offset="0.09" stop-color="#e4fff2"/><stop offset="0.16" stop-color="#d0ffe9"/><stop offset="0.26" stop-color="#b5ffdb"/><stop offset="0.4" stop-color="#91ffca"/><stop offset="0.6" stop-color="#60ffb2"/><stop offset="1" stop-color="#00ff84"/></linearGradient><linearGradient id="w199" gradientUnits="userSpaceOnUse" x1="1348.6" y1="277.6" x2="1270.6" y2="249.9"><stop offset="0" stop-color="#ffffff"/><stop offset="0.04" stop-color="#f3fff9"/><stop offset="0.09" stop-color="#e4fff2"/><stop offset="0.16" stop-color="#d0ffe8"/><stop offset="0.26" stop-color="#b5ffda"/><stop offset="0.4" stop-color="#91ffc8"/><stop offset="0.6" stop-color="#60ffb0"/><stop offset="1" stop-color="#00ff80"/></linearGradient><linearGradient id="w200" gradientUnits="userSpaceOnUse" x1="1348.6" y1="277.6" x2="1270.4" y2="248.3"><stop offset="0" stop-color="#ffffff"/><stop offset="0.04" stop-color="#f3fff9"/><stop offset="0.09" stop-color="#e4fff1"/><stop offset="0.16" stop-color="#d0ffe7"/><stop offset="0.26" stop-color="#b5ffd9"/><stop offset="0.4" stop-color="#90ffc6"/><stop offset="0.6" stop-color="#60ffad"/><stop offset="1" stop-color="#00ff7c"/></linearGradient><linearGradient id="w201" gradientUnits="userSpaceOnUse" x1="1348.6" y1="277.6" x2="1270.1" y2="246.7"><stop offset="0" stop-color="#ffffff"/><stop offset="0.04" stop-color="#f3fff9"/><stop offset="0.09" stop-color="#e4fff1"/><stop offset="0.16" stop-color="#d0ffe6"/><stop offset="0.26" stop-color="#b4ffd8"/><stop offset="0.4" stop-color="#90ffc4"/><stop offset="0.6" stop-color="#60ffab"/><stop offset="1" stop-color="#00ff78"/></linearGradient><linearGradient id="w202" gradientUnits="userSpaceOnUse" x1="1348.6" y1="277.6" x2="1269.9" y2="245.0"><stop offset="0" stop-color="#ffffff"/><stop offset="0.04" stop-color="#f3fff8"/><stop offset="0.09" stop-color="#e4fff0"/><stop offset="0.16" stop-color="#d0ffe5"/><stop offset="0.26" stop-color="#b4ffd6"/><stop offset="0.4" stop-color="#90ffc2"/><stop offset="0.6" stop-color="#5fffa8"/><stop offset="1" stop-color="#00ff74"/></linearGradient><linearGradient id="w203" gradientUnits="userSpaceOnUse" x1="1348.6" y1="277.6" x2="1269.7" y2="243.3"><stop offset="0" stop-color="#ffffff"/><stop offset="0.04" stop-color="#f3fff8"/><stop offset="0.09" stop-color="#e4fff0"/><stop offset="0.16" stop-color="#cfffe4"/><stop offset="0.26" stop-color="#b4ffd5"/><stop offset="0.4" stop-color="#90ffc1"/><stop offset="0.6" stop-color="#5fffa5"/><stop offset="1" stop-color="#00ff70"/></linearGradient><linearGradient id="w204" gradientUnits="userSpaceOnUse" x1="1348.6" y1="277.6" x2="1269.5" y2="241.5"><stop offset="0" stop-color="#ffffff"/><stop offset="0.04" stop-color="#f3fff8"/><stop offset="0.09" stop-color="#e4ffef"/><stop offset="0.16" stop-color="#cfffe4"/><stop offset="0.26" stop-color="#b4ffd4"/><stop offset="0.4" stop-color="#8fffbf"/><stop offset="0.6" stop-color="#5fffa3"/><stop offset="1" stop-color="#00ff6c"/></linearGradient><linearGradient id="w205" gradientUnits="userSpaceOnUse" x1="1348.6" y1="277.6" x2="1269.3" y2="239.7"><stop offset="0" stop-color="#ffffff"/><stop offset="0.04" stop-color="#f2fff8"/><stop offset="0.09" stop-color="#e3ffef"/><stop offset="0.16" stop-color="#cfffe3"/><stop offset="0.26" stop-color="#b4ffd2"/><stop offset="0.4" stop-color="#8fffbd"/><stop offset="0.6" stop-color="#5fffa0"/><stop offset="1" stop-color="#00ff68"/></linearGradient><linearGradient id="w206" gradientUnits="userSpaceOnUse" x1="1348.6" y1="277.6" x2="1269.1" y2="237.9"><stop offset="0" stop-color="#ffffff"/><stop offset="0.04" stop-color="#f2fff8"/><stop offset="0.09" stop-color="#e3ffee"/><stop offset="0.16" stop-color="#cfffe2"/><stop offset="0.26" stop-color="#b3ffd1"/><stop offset="0.4" stop-color="#8fffbb"/><stop offset="0.6" stop-color="#5fff9d"/><stop offset="1" stop-color="#00ff64"/></linearGradient><linearGradient id="w207" gradientUnits="userSpaceOnUse" x1="1348.6" y1="277.6" x2="1268.8" y2="236.0"><stop offset="0" stop-color="#ffffff"/><stop offset="0.04" stop-color="#f2fff7"/><stop offset="0.09" stop-color="#e3ffee"/><stop offset="0.16" stop-color="#cfffe1"/><stop offset="0.26" stop-color="#b3ffd0"/><stop offset="0.4" stop-color="#8fffb9"/><stop offset="0.6" stop-color="#5eff9b"/><stop offset="1" stop-color="#00ff60"/></linearGradient><linearGradient id="w208" gradientUnits="userSpaceOnUse" x1="1348.6" y1="277.6" x2="1268.6" y2="234.1"><stop offset="0" stop-color="#ffffff"/><stop offset="0.04" stop-color="#f2fff7"/><stop offset="0.09" stop-color="#e3ffed"/><stop offset="0.16" stop-color="#cfffe0"/><stop offset="0.26" stop-color="#b3ffce"/><stop offset="0.4" stop-color="#8effb7"/><stop offset="0.6" stop-color="#5eff98"/><stop offset="1" stop-color="#00ff5c"/></linearGradient><linearGradient id="w209" gradientUnits="userSpaceOnUse" x1="1348.6" y1="277.6" x2="1268.3" y2="232.2"><stop offset="0" stop-color="#ffffff"/><stop offset="0.04" stop-color="#f2fff7"/><stop offset="0.09" stop-color="#e3ffed"/><stop offset="0.16" stop-color="#ceffdf"/><stop offset="0.26" stop-color="#b3ffcd"/><stop offset="0.4" stop-color="#8effb5"/><stop offset="0.6" stop-color="#5eff95"/><stop offset="1" stop-color="#00ff58"/></linearGradient><linearGradient id="w210" gradientUnits="userSpaceOnUse" x1="1348.6" y1="277.6" x2="1268.1" y2="230.1"><stop offset="0" stop-color="#ffffff"/><stop offset="0.04" stop-color="#f2fff7"/><stop offset="0.09" stop-color="#e3ffec"/><stop offset="0.16" stop-color="#ceffde"/><stop offset="0.26" stop-color="#b2ffcc"/><stop offset="0.4" stop-color="#8effb3"/><stop offset="0.6" stop-color="#5dff93"/><stop offset="1" stop-color="#00ff54"/></linearGradient><linearGradient id="w211" gradientUnits="userSpaceOnUse" x1="1348.6" y1="277.6" x2="1267.8" y2="228.1"><stop offset="0" stop-color="#ffffff"/><stop offset="0.04" stop-color="#f2fff6"/><stop offset="0.09" stop-color="#e3ffec"/><stop offset="0.16" stop-color="#ceffde"/><stop offset="0.26" stop-color="#b2ffca"/><stop offset="0.4" stop-color="#8dffb1"/><stop offset="0.6" stop-color="#5dff90"/><stop offset="1" stop-color="#00ff50"/></linearGradient><linearGradient id="w212" gradientUnits="userSpaceOnUse" x1="1348.6" y1="277.6" x2="1267.6" y2="225.9"><stop offset="0" stop-color="#ffffff"/><stop offset="0.04" stop-color="#f2fff6"/><stop offset="0.09" stop-color="#e3ffeb"/><stop offset="0.16" stop-color="#ceffdd"/><stop offset="0.26" stop-color="#b2ffc9"/><stop offset="0.4" stop-color="#8dffaf"/><stop offset="0.6" stop-color="#5dff8d"/><stop offset="1" stop-color="#00ff4c"/></linearGradient><linearGradient id="w213" gradientUnits="userSpaceOnUse" x1="1348.6" y1="277.6" x2="1267.3" y2="223.7"><stop offset="0" stop-color="#ffffff"/><stop offset="0.04" stop-color="#f2fff6"/><stop offset="0.09" stop-color="#e3ffeb"/><stop offset="0.16" stop-color="#ceffdc"/><stop offset="0.26" stop-color="#b2ffc7"/><stop offset="0.4" stop-color="#8dffad"/><stop offset="0.6" stop-color="#5dff8a"/><stop offset="1" stop-color="#00ff47"/></linearGradient><linearGradient id="w214" gradientUnits="userSpaceOnUse" x1="1348.6" y1="277.6" x2="1267.0" y2="221.5"><stop offset="0" stop-color="#ffffff"/><stop offset="0.04" stop-color="#f2fff6"/><stop offset="0.09" stop-color="#e2ffea"/><stop offset="0.16" stop-color="#cdffdb"/><stop offset="0.26" stop-color="#b1ffc6"/><stop offset="0.4" stop-color="#8cffab"/><stop offset="0.6" stop-color="#5cff87"/><stop offset="1" stop-color="#00ff43"/></linearGradient><linearGradient id="w215" gradientUnits="userSpaceOnUse" x1="1348.6" y1="277.6" x2="1266.7" y2="219.2"><stop offset="0" stop-color="#ffffff"/><stop offset="0.04" stop-color="#f2fff5"/><stop offset="0.09" stop-color="#e2ffea"/><stop offset="0.16" stop-color="#cdffda"/><stop offset="0.26" stop-color="#b1ffc4"/><stop offset="0.4" stop-color="#8cffa9"/><stop offset="0.6" stop-color="#5cff85"/><stop offset="1" stop-color="#00ff3f"/></linearGradient><linearGradient id="w216" gradientUnits="userSpaceOnUse" x1="1348.6" y1="277.6" x2="1266.4" y2="216.8"><stop offset="0" stop-color="#ffffff"/><stop offset="0.04" stop-color="#f2fff5"/><stop offset="0.09" stop-color="#e2ffe9"/><stop offset="0.16" stop-color="#cdffd9"/><stop offset="0.26" stop-color="#b1ffc3"/><stop offset="0.4" stop-color="#8cffa7"/><stop offset="0.6" stop-color="#5cff82"/><stop offset="1" stop-color="#00ff3b"/></linearGradient><linearGradient id="w217" gradientUnits="userSpaceOnUse" x1="1348.6" y1="277.6" x2="1266.1" y2="214.3"><stop offset="0" stop-color="#ffffff"/><stop offset="0.04" stop-color="#f2fff5"/><stop offset="0.09" stop-color="#e2ffe8"/><stop offset="0.16" stop-color="#cdffd8"/><stop offset="0.26" stop-color="#b0ffc1"/><stop offset="0.4" stop-color="#8bffa4"/><stop offset="0.6" stop-color="#5bff7f"/><stop offset="1" stop-color="#00ff37"/></linearGradient><linearGradient id="w218" gradientUnits="userSpaceOnUse" x1="1348.6" y1="277.6" x2="1265.8" y2="211.7"><stop offset="0" stop-color="#ffffff"/><stop offset="0.04" stop-color="#f2fff5"/><stop offset="0.09" stop-color="#e2ffe8"/><stop offset="0.16" stop-color="#cdffd7"/><stop offset="0.26" stop-color="#b0ffc0"/><stop offset="0.4" stop-color="#8bffa2"/><stop offset="0.6" stop-color="#5bff7c"/><stop offset="1" stop-color="#00ff33"/></linearGradient><linearGradient id="w219" gradientUnits="userSpaceOnUse" x1="1348.6" y1="277.6" x2="1265.5" y2="209.0"><stop offset="0" stop-color="#ffffff"/><stop offset="0.04" stop-color="#f2fff4"/><stop offset="0.09" stop-color="#e2ffe7"/><stop offset="0.16" stop-color="#ccffd6"/><stop offset="0.26" stop-color="#b0ffbe"/><stop offset="0.4" stop-color="#8bffa0"/><stop offset="0.6" stop-color="#5bff79"/><stop offset="1" stop-color="#00ff2f"/></linearGradient><linearGradient id="w220" gradientUnits="userSpaceOnUse" x1="1348.6" y1="277.6" x2="1265.1" y2="206.3"><stop offset="0" stop-color="#ffffff"/><stop offset="0.04" stop-color="#f2fff4"/><stop offset="0.09" stop-color="#e1ffe7"/><stop offset="0.16" stop-color="#ccffd5"/><stop offset="0.26" stop-color="#afffbd"/><stop offset="0.4" stop-color="#8aff9e"/><stop offset="0.6" stop-color="#5aff76"/><stop offset="1" stop-color="#00ff2a"/></linearGradient><linearGradient id="w221" gradientUnits="userSpaceOnUse" x1="1348.6" y1="277.6" x2="1264.8" y2="203.4"><stop offset="0" stop-color="#ffffff"/><stop offset="0.04" stop-color="#f1fff4"/><stop offset="0.09" stop-color="#e1ffe6"/><stop offset="0.16" stop-color="#ccffd4"/><stop offset="0.26" stop-color="#afffbb"/><stop offset="0.4" stop-color="#8aff9c"/><stop offset="0.6" stop-color="#5aff73"/><stop offset="1" stop-color="#00ff26"/></linearGradient><linearGradient id="w222" gradientUnits="userSpaceOnUse" x1="1348.6" y1="277.6" x2="1264.4" y2="200.4"><stop offset="0" stop-color="#ffffff"/><stop offset="0.04" stop-color="#f1fff3"/><stop offset="0.09" stop-color="#e1ffe5"/><stop offset="0.16" stop-color="#ccffd3"/><stop offset="0.26" stop-color="#afffba"/><stop offset="0.4" stop-color="#8aff99"/><stop offset="0.6" stop-color="#5aff70"/><stop offset="1" stop-color="#00ff22"/></linearGradient><linearGradient id="w223" gradientUnits="userSpaceOnUse" x1="1348.6" y1="277.6" x2="1264.0" y2="197.3"><stop offset="0" stop-color="#ffffff"/><stop offset="0.04" stop-color="#f1fff3"/><stop offset="0.09" stop-color="#e1ffe5"/><stop offset="0.16" stop-color="#cbffd2"/><stop offset="0.26" stop-color="#aeffb8"/><stop offset="0.4" stop-color="#89ff97"/><stop offset="0.6" stop-color="#59ff6d"/><stop offset="1" stop-color="#00ff1e"/></linearGradient><linearGradient id="w224" gradientUnits="userSpaceOnUse" x1="1348.6" y1="277.6" x2="1263.6" y2="194.0"><stop offset="0" stop-color="#ffffff"/><stop offset="0.04" stop-color="#f1fff3"/><stop offset="0.09" stop-color="#e1ffe4"/><stop offset="0.16" stop-color="#cbffd0"/><stop offset="0.26" stop-color="#aeffb6"/><stop offset="0.4" stop-color="#89ff95"/><stop offset="0.6" stop-color="#59ff6a"/><stop offset="1" stop-color="#00ff1a"/></linearGradient><linearGradient id="w225" gradientUnits="userSpaceOnUse" x1="1348.6" y1="277.6" x2="1263.2" y2="190.6"><stop offset="0" stop-color="#ffffff"/><stop offset="0.04" stop-color="#f1fff2"/><stop offset="0.09" stop-color="#e1ffe3"/><stop offset="0.16" stop-color="#cbffcf"/><stop offset="0.26" stop-color="#aeffb5"/><stop offset="0.4" stop-color="#88ff93"/><stop offset="0.6" stop-color="#59ff67"/><stop offset="1" stop-color="#00ff16"/></linearGradient><linearGradient id="w226" gradientUnits="userSpaceOnUse" x1="1348.6" y1="277.6" x2="1262.7" y2="187.1"><stop offset="0" stop-color="#ffffff"/><stop offset="0.04" stop-color="#f1fff2"/><stop offset="0.09" stop-color="#e0ffe3"/><stop offset="0.16" stop-color="#caffce"/><stop offset="0.26" stop-color="#adffb3"/><stop offset="0.4" stop-color="#88ff90"/><stop offset="0.6" stop-color="#58ff64"/><stop offset="1" stop-color="#00ff12"/></linearGradient><linearGradient id="w227" gradientUnits="userSpaceOnUse" x1="1348.6" y1="277.6" x2="1262.3" y2="183.3"><stop offset="0" stop-color="#ffffff"/><stop offset="0.04" stop-color="#f1fff2"/><stop offset="0.09" stop-color="#e0ffe2"/><stop offset="0.16" stop-color="#caffcd"/><stop offset="0.26" stop-color="#adffb1"/><stop offset="0.4" stop-color="#87ff8e"/><stop offset="0.6" stop-color="#58ff61"/><stop offset="1" stop-color="#00ff0e"/></linearGradient><linearGradient id="w228" gradientUnits="userSpaceOnUse" x1="1348.6" y1="277.6" x2="1261.8" y2="179.4"><stop offset="0" stop-color="#ffffff"/><stop offset="0.04" stop-color="#f1fff1"/><stop offset="0.09" stop-color="#e0ffe1"/><stop offset="0.16" stop-color="#caffcc"/><stop offset="0.26" stop-color="#acffb0"/><stop offset="0.4" stop-color="#87ff8c"/><stop offset="0.6" stop-color="#57ff5e"/><stop offset="1" stop-color="#00ff0b"/></linearGradient><linearGradient id="w229" gradientUnits="userSpaceOnUse" x1="1348.6" y1="277.6" x2="1261.3" y2="175.3"><stop offset="0" stop-color="#ffffff"/><stop offset="0.04" stop-color="#f1fff1"/><stop offset="0.09" stop-color="#e0ffe1"/><stop offset="0.16" stop-color="#c9ffcb"/><stop offset="0.26" stop-color="#acffae"/><stop offset="0.4" stop-color="#86ff8a"/><stop offset="0.6" stop-color="#57ff5c"/><stop offset="1" stop-color="#00ff07"/></linearGradient><linearGradient id="w230" gradientUnits="userSpaceOnUse" x1="1348.6" y1="277.6" x2="1260.7" y2="171.0"><stop offset="0" stop-color="#ffffff"/><stop offset="0.04" stop-color="#f1fff1"/><stop offset="0.09" stop-color="#dfffe0"/><stop offset="0.16" stop-color="#c9ffca"/><stop offset="0.26" stop-color="#abffad"/><stop offset="0.4" stop-color="#86ff88"/><stop offset="0.6" stop-color="#56ff59"/><stop offset="1" stop-color="#00ff04"/></linearGradient><linearGradient id="w231" gradientUnits="userSpaceOnUse" x1="1348.6" y1="277.6" x2="1260.2" y2="166.4"><stop offset="0" stop-color="#ffffff"/><stop offset="0.04" stop-color="#f0fff1"/><stop offset="0.09" stop-color="#dfffdf"/><stop offset="0.16" stop-color="#c9ffc9"/><stop offset="0.26" stop-color="#abffab"/><stop offset="0.4" stop-color="#85ff86"/><stop offset="0.6" stop-color="#56ff57"/><stop offset="1" stop-color="#00ff01"/></linearGradient><linearGradient id="w232" gradientUnits="userSpaceOnUse" x1="1348.6" y1="277.6" x2="1260.1" y2="162.3"><stop offset="0" stop-color="#ffffff"/><stop offset="0.04" stop-color="#f0fff0"/><stop offset="0.09" stop-color="#dfffdf"/><stop offset="0.16" stop-color="#c8ffc8"/><stop offset="0.26" stop-color="#abffab"/><stop offset="0.4" stop-color="#85ff85"/><stop offset="0.6" stop-color="#56ff55"/><stop offset="1" stop-color="#00ff00"/></linearGradient><linearGradient id="w233" gradientUnits="userSpaceOnUse" x1="1348.6" y1="277.6" x2="1263.6" y2="162.7"><stop offset="0" stop-color="#ffffff"/><stop offset="0.04" stop-color="#f1fff1"/><stop offset="0.09" stop-color="#e0ffdf"/><stop offset="0.16" stop-color="#c9ffc9"/><stop offset="0.26" stop-color="#acffab"/><stop offset="0.4" stop-color="#86ff85"/><stop offset="0.6" stop-color="#57ff56"/><stop offset="1" stop-color="#02ff00"/></linearGradient><linearGradient id="w234" gradientUnits="userSpaceOnUse" x1="1348.6" y1="277.6" x2="1267.0" y2="163.1"><stop offset="0" stop-color="#ffffff"/><stop offset="0.04" stop-color="#f1fff1"/><stop offset="0.09" stop-color="#e0ffe0"/><stop offset="0.16" stop-color="#caffc9"/><stop offset="0.26" stop-color="#adffab"/><stop offset="0.4" stop-color="#88ff86"/><stop offset="0.6" stop-color="#5aff56"/><stop offset="1" stop-color="#05ff00"/></linearGradient><linearGradient id="w235" gradientUnits="userSpaceOnUse" x1="1348.6" y1="277.6" x2="1270.2" y2="163.5"><stop offset="0" stop-color="#ffffff"/><stop offset="0.04" stop-color="#f1fff1"/><stop offset="0.09" stop-color="#e1ffe0"/><stop offset="0.16" stop-color="#cbffca"/><stop offset="0.26" stop-color="#aeffac"/><stop offset="0.4" stop-color="#8aff86"/><stop offset="0.6" stop-color="#5cff57"/><stop offset="1" stop-color="#08ff00"/></linearGradient><linearGradient id="w236" gradientUnits="userSpaceOnUse" x1="1348.6" y1="277.6" x2="1273.4" y2="163.9"><stop offset="0" stop-color="#ffffff"/><stop offset="0.04" stop-color="#f2fff1"/><stop offset="0.09" stop-color="#e1ffe0"/><stop offset="0.16" stop-color="#ccffca"/><stop offset="0.26" stop-color="#b0ffac"/><stop offset="0.4" stop-color="#8cff87"/><stop offset="0.6" stop-color="#5fff57"/><stop offset="1" stop-color="#0cff00"/></linearGradient><linearGradient id="w237" gradientUnits="userSpaceOnUse" x1="1348.6" y1="277.6" x2="1276.4" y2="164.3"><stop offset="0" stop-color="#ffffff"/><stop offset="0.04" stop-color="#f2fff1"/><stop offset="0.09" stop-color="#e2ffe0"/><stop offset="0.16" stop-color="#cdffca"/><stop offset="0.26" stop-color="#b2ffad"/><stop offset="0.4" stop-color="#8fff87"/><stop offset="0.6" stop-color="#62ff58"/><stop offset="1" stop-color="#10ff00"/></linearGradient><linearGradient id="w238" gradientUnits="userSpaceOnUse" x1="1348.6" y1="277.6" x2="1279.4" y2="164.6"><stop offset="0" stop-color="#ffffff"/><stop offset="0.04" stop-color="#f2fff1"/><stop offset="0.09" stop-color="#e3ffe1"/><stop offset="0.16" stop-color="#cfffcb"/><stop offset="0.26" stop-color="#b4ffad"/><stop offset="0.4" stop-color="#91ff88"/><stop offset="0.6" stop-color="#65ff58"/><stop offset="1" stop-color="#14ff00"/></linearGradient><linearGradient id="w239" gradientUnits="userSpaceOnUse" x1="1348.6" y1="277.6" x2="1282.3" y2="165.0"><stop offset="0" stop-color="#ffffff"/><stop offset="0.04" stop-color="#f2fff1"/><stop offset="0.09" stop-color="#e4ffe1"/><stop offset="0.16" stop-color="#d0ffcb"/><stop offset="0.26" stop-color="#b5ffae"/><stop offset="0.4" stop-color="#94ff88"/><stop offset="0.6" stop-color="#69ff59"/><stop offset="1" stop-color="#19ff00"/></linearGradient><linearGradient id="w240" gradientUnits="userSpaceOnUse" x1="1348.6" y1="277.6" x2="1285.1" y2="165.3"><stop offset="0" stop-color="#ffffff"/><stop offset="0.04" stop-color="#f3fff1"/><stop offset="0.09" stop-color="#e4ffe1"/><stop offset="0.16" stop-color="#d1ffcb"/><stop offset="0.26" stop-color="#b7ffae"/><stop offset="0.4" stop-color="#96ff89"/><stop offset="0.6" stop-color="#6cff59"/><stop offset="1" stop-color="#1dff00"/></linearGradient><linearGradient id="w241" gradientUnits="userSpaceOnUse" x1="1348.6" y1="277.6" x2="1287.8" y2="165.7"><stop offset="0" stop-color="#ffffff"/><stop offset="0.04" stop-color="#f3fff1"/><stop offset="0.09" stop-color="#e5ffe1"/><stop offset="0.16" stop-color="#d2ffcb"/><stop offset="0.26" stop-color="#b9ffae"/><stop offset="0.4" stop-color="#99ff89"/><stop offset="0.6" stop-color="#70ff59"/><stop offset="1" stop-color="#22ff00"/></linearGradient><linearGradient id="w242" gradientUnits="userSpaceOnUse" x1="1348.6" y1="277.6" x2="1290.5" y2="166.0"><stop offset="0" stop-color="#ffffff"/><stop offset="0.04" stop-color="#f3fff2"/><stop offset="0.09" stop-color="#e6ffe1"/><stop offset="0.16" stop-color="#d3ffcc"/><stop offset="0.26" stop-color="#bbffaf"/><stop offset="0.4" stop-color="#9cff8a"/><stop offset="0.6" stop-color="#73ff5a"/><stop offset="1" stop-color="#27ff00"/></linearGradient><linearGradient id="w243" gradientUnits="userSpaceOnUse" x1="1348.6" y1="277.6" x2="1293.1" y2="166.3"><stop offset="0" stop-color="#ffffff"/><stop offset="0.04" stop-color="#f4fff2"/><stop offset="0.09" stop-color="#e6ffe2"/><stop offset="0.16" stop-color="#d5ffcc"/><stop offset="0.26" stop-color="#bdffaf"/><stop offset="0.4" stop-color="#9eff8a"/><stop offset="0.6" stop-color="#77ff5a"/><stop offset="1" stop-color="#2cff00"/></linearGradient><linearGradient id="w244" gradientUnits="userSpaceOnUse" x1="1348.6" y1="277.6" x2="1295.7" y2="166.6"><stop offset="0" stop-color="#ffffff"/><stop offset="0.04" stop-color="#f4fff2"/><stop offset="0.09" stop-color="#e7ffe2"/><stop offset="0.16" stop-color="#d6ffcc"/><stop offset="0.26" stop-color="#bfffb0"/><stop offset="0.4" stop-color="#a1ff8b"/><stop offset="0.6" stop-color="#7bff5b"/><stop offset="1" stop-color="#32ff00"/></linearGradient><linearGradient id="w245" gradientUnits="userSpaceOnUse" x1="1348.6" y1="277.6" x2="1298.2" y2="166.9"><stop offset="0" stop-color="#ffffff"/><stop offset="0.04" stop-color="#f5fff2"/><stop offset="0.09" stop-color="#e8ffe2"/><stop offset="0.16" stop-color="#d7ffcd"/><stop offset="0.26" stop-color="#c1ffb0"/><stop offset="0.4" stop-color="#a4ff8b"/><stop offset="0.6" stop-color="#7eff5b"/><stop offset="1" stop-color="#37ff00"/></linearGradient><linearGradient id="w246" gradientUnits="userSpaceOnUse" x1="1348.6" y1="277.6" x2="1300.6" y2="167.2"><stop offset="0" stop-color="#ffffff"/><stop offset="0.04" stop-color="#f5fff2"/><stop offset="0.09" stop-color="#e9ffe2"/><stop offset="0.16" stop-color="#d9ffcd"/><stop offset="0.26" stop-color="#c3ffb0"/><stop offset="0.4" stop-color="#a7ff8b"/><stop offset="0.6" stop-color="#82ff5b"/><stop offset="1" stop-color="#3dff00"/></linearGradient><linearGradient id="w247" gradientUnits="userSpaceOnUse" x1="1348.6" y1="277.6" x2="1303.0" y2="167.5"><stop offset="0" stop-color="#ffffff"/><stop offset="0.04" stop-color="#f5fff2"/><stop offset="0.09" stop-color="#eaffe2"/><stop offset="0.16" stop-color="#daffcd"/><stop offset="0.26" stop-color="#c5ffb1"/><stop offset="0.4" stop-color="#aaff8c"/><stop offset="0.6" stop-color="#86ff5c"/><stop offset="1" stop-color="#42ff00"/></linearGradient><linearGradient id="w248" gradientUnits="userSpaceOnUse" x1="1348.6" y1="277.6" x2="1305.4" y2="167.8"><stop offset="0" stop-color="#ffffff"/><stop offset="0.04" stop-color="#f6fff2"/><stop offset="0.09" stop-color="#eaffe2"/><stop offset="0.16" stop-color="#dbffcd"/><stop offset="0.26" stop-color="#c7ffb1"/><stop offset="0.4" stop-color="#adff8c"/><stop offset="0.6" stop-color="#8aff5c"/><stop offset="1" stop-color="#48ff00"/></linearGradient><linearGradient id="w249" gradientUnits="userSpaceOnUse" x1="1348.6" y1="277.6" x2="1307.7" y2="168.1"><stop offset="0" stop-color="#ffffff"/><stop offset="0.04" stop-color="#f6fff2"/><stop offset="0.09" stop-color="#ebffe3"/><stop offset="0.16" stop-color="#ddffce"/><stop offset="0.26" stop-color="#c9ffb1"/><stop offset="0.4" stop-color="#afff8d"/><stop offset="0.6" stop-color="#8eff5c"/><stop offset="1" stop-color="#4eff00"/></linearGradient><linearGradient id="w250" gradientUnits="userSpaceOnUse" x1="1348.6" y1="277.6" x2="1309.9" y2="168.3"><stop offset="0" stop-color="#ffffff"/><stop offset="0.04" stop-color="#f6fff2"/><stop offset="0.09" stop-color="#ecffe3"/><stop offset="0.16" stop-color="#deffce"/><stop offset="0.26" stop-color="#cbffb2"/><stop offset="0.4" stop-color="#b2ff8d"/><stop offset="0.6" stop-color="#92ff5d"/><stop offset="1" stop-color="#54ff00"/></linearGradient><linearGradient id="w251" gradientUnits="userSpaceOnUse" x1="1348.6" y1="277.6" x2="1312.2" y2="168.6"><stop offset="0" stop-color="#ffffff"/><stop offset="0.04" stop-color="#f7fff2"/><stop offset="0.09" stop-color="#edffe3"/><stop offset="0.16" stop-color="#dfffce"/><stop offset="0.26" stop-color="#cdffb2"/><stop offset="0.4" stop-color="#b5ff8d"/><stop offset="0.6" stop-color="#96ff5d"/><stop offset="1" stop-color="#5aff00"/></linearGradient><linearGradient id="w252" gradientUnits="userSpaceOnUse" x1="1348.6" y1="277.6" x2="1314.3" y2="168.9"><stop offset="0" stop-color="#ffffff"/><stop offset="0.04" stop-color="#f7fff2"/><stop offset="0.09" stop-color="#edffe3"/><stop offset="0.16" stop-color="#e1ffce"/><stop offset="0.26" stop-color="#cfffb2"/><stop offset="0.4" stop-color="#b8ff8e"/><stop offset="0.6" stop-color="#9aff5d"/><stop offset="1" stop-color="#60ff00"/></linearGradient><linearGradient id="w253" gradientUnits="userSpaceOnUse" x1="1348.6" y1="277.6" x2="1316.5" y2="169.1"><stop offset="0" stop-color="#ffffff"/><stop offset="0.04" stop-color="#f7fff2"/><stop offset="0.09" stop-color="#eeffe3"/><stop offset="0.16" stop-color="#e2ffcf"/><stop offset="0.26" stop-color="#d1ffb3"/><stop offset="0.4" stop-color="#bbff8e"/><stop offset="0.6" stop-color="#9eff5e"/><stop offset="1" stop-color="#66ff00"/></linearGradient><linearGradient id="w254" gradientUnits="userSpaceOnUse" x1="1348.6" y1="277.6" x2="1318.6" y2="169.4"><stop offset="0" stop-color="#ffffff"/><stop offset="0.04" stop-color="#f8fff3"/><stop offset="0.09" stop-color="#efffe3"/><stop offset="0.16" stop-color="#e3ffcf"/><stop offset="0.26" stop-color="#d3ffb3"/><stop offset="0.4" stop-color="#beff8e"/><stop offset="0.6" stop-color="#a3ff5e"/><stop offset="1" stop-color="#6dff00"/></linearGradient><linearGradient id="w255" gradientUnits="userSpaceOnUse" x1="1348.6" y1="277.6" x2="1320.7" y2="169.7"><stop offset="0" stop-color="#ffffff"/><stop offset="0.04" stop-color="#f8fff3"/><stop offset="0.09" stop-color="#f0ffe4"/><stop offset="0.16" stop-color="#e5ffcf"/><stop offset="0.26" stop-color="#d5ffb3"/><stop offset="0.4" stop-color="#c1ff8f"/><stop offset="0.6" stop-color="#a7ff5f"/><stop offset="1" stop-color="#73ff00"/></linearGradient><linearGradient id="w256" gradientUnits="userSpaceOnUse" x1="1348.6" y1="277.6" x2="1322.8" y2="169.9"><stop offset="0" stop-color="#ffffff"/><stop offset="0.04" stop-color="#f8fff3"/><stop offset="0.09" stop-color="#f0ffe4"/><stop offset="0.16" stop-color="#e6ffcf"/><stop offset="0.26" stop-color="#d7ffb4"/><stop offset="0.4" stop-color="#c4ff8f"/><stop offset="0.6" stop-color="#abff5f"/><stop offset="1" stop-color="#7aff00"/></linearGradient><linearGradient id="w257" gradientUnits="userSpaceOnUse" x1="1348.6" y1="277.6" x2="1324.8" y2="170.2"><stop offset="0" stop-color="#ffffff"/><stop offset="0.04" stop-color="#f9fff3"/><stop offset="0.09" stop-color="#f1ffe4"/><stop offset="0.16" stop-color="#e7ffd0"/><stop offset="0.26" stop-color="#daffb4"/><stop offset="0.4" stop-color="#c7ff90"/><stop offset="0.6" stop-color="#afff5f"/><stop offset="1" stop-color="#80ff00"/></linearGradient><linearGradient id="w258" gradientUnits="userSpaceOnUse" x1="1348.6" y1="277.6" x2="1326.8" y2="170.4"><stop offset="0" stop-color="#ffffff"/><stop offset="0.04" stop-color="#f9fff3"/><stop offset="0.09" stop-color="#f2ffe4"/><stop offset="0.16" stop-color="#e9ffd0"/><stop offset="0.26" stop-color="#dcffb4"/><stop offset="0.4" stop-color="#cbff90"/><stop offset="0.6" stop-color="#b4ff60"/><stop offset="1" stop-color="#87ff00"/></linearGradient><linearGradient id="w259" gradientUnits="userSpaceOnUse" x1="1348.6" y1="277.6" x2="1328.8" y2="170.6"><stop offset="0" stop-color="#ffffff"/><stop offset="0.04" stop-color="#f9fff3"/><stop offset="0.09" stop-color="#f3ffe4"/><stop offset="0.16" stop-color="#eaffd0"/><stop offset="0.26" stop-color="#deffb5"/><stop offset="0.4" stop-color="#ceff90"/><stop offset="0.6" stop-color="#b8ff60"/><stop offset="1" stop-color="#8eff00"/></linearGradient><linearGradient id="w260" gradientUnits="userSpaceOnUse" x1="1348.6" y1="277.6" x2="1330.8" y2="170.9"><stop offset="0" stop-color="#ffffff"/><stop offset="0.04" stop-color="#fafff3"/><stop offset="0.09" stop-color="#f4ffe4"/><stop offset="0.16" stop-color="#ebffd0"/><stop offset="0.26" stop-color="#e0ffb5"/><stop offset="0.4" stop-color="#d1ff91"/><stop offset="0.6" stop-color="#bdff60"/><stop offset="1" stop-color="#95ff00"/></linearGradient><linearGradient id="w261" gradientUnits="userSpaceOnUse" x1="1348.6" y1="277.6" x2="1332.7" y2="171.1"><stop offset="0" stop-color="#ffffff"/><stop offset="0.04" stop-color="#fafff3"/><stop offset="0.09" stop-color="#f4ffe4"/><stop offset="0.16" stop-color="#edffd0"/><stop offset="0.26" stop-color="#e2ffb5"/><stop offset="0.4" stop-color="#d4ff91"/><stop offset="0.6" stop-color="#c1ff61"/><stop offset="1" stop-color="#9cff00"/></linearGradient><linearGradient id="w262" gradientUnits="userSpaceOnUse" x1="1348.6" y1="277.6" x2="1334.6" y2="171.4"><stop offset="0" stop-color="#ffffff"/><stop offset="0.04" stop-color="#fafff3"/><stop offset="0.09" stop-color="#f5ffe5"/><stop offset="0.16" stop-color="#eeffd1"/><stop offset="0.26" stop-color="#e4ffb6"/><stop offset="0.4" stop-color="#d7ff91"/><stop offset="0.6" stop-color="#c6ff61"/><stop offset="1" stop-color="#a3ff00"/></linearGradient><linearGradient id="w263" gradientUnits="userSpaceOnUse" x1="1348.6" y1="277.6" x2="1336.5" y2="171.6"><stop offset="0" stop-color="#ffffff"/><stop offset="0.04" stop-color="#fbfff3"/><stop offset="0.09" stop-color="#f6ffe5"/><stop offset="0.16" stop-color="#efffd1"/><stop offset="0.26" stop-color="#e6ffb6"/><stop offset="0.4" stop-color="#daff92"/><stop offset="0.6" stop-color="#caff61"/><stop offset="1" stop-color="#aaff00"/></linearGradient><linearGradient id="w264" gradientUnits="userSpaceOnUse" x1="1348.6" y1="277.6" x2="1338.4" y2="171.8"><stop offset="0" stop-color="#ffffff"/><stop offset="0.04" stop-color="#fbfff3"/><stop offset="0.09" stop-color="#f7ffe5"/><stop offset="0.16" stop-color="#f1ffd1"/><stop offset="0.26" stop-color="#e9ffb6"/><stop offset="0.4" stop-color="#deff92"/><stop offset="0.6" stop-color="#cfff62"/><stop offset="1" stop-color="#b1ff00"/></linearGradient><linearGradient id="w265" gradientUnits="userSpaceOnUse" x1="1348.6" y1="277.6" x2="1340.3" y2="172.0"><stop offset="0" stop-color="#ffffff"/><stop offset="0.04" stop-color="#fcfff3"/><stop offset="0.09" stop-color="#f8ffe5"/><stop offset="0.16" stop-color="#f2ffd1"/><stop offset="0.26" stop-color="#ebffb6"/><stop offset="0.4" stop-color="#e1ff92"/><stop offset="0.6" stop-color="#d4ff62"/><stop offset="1" stop-color="#b9ff00"/></linearGradient><linearGradient id="w266" gradientUnits="userSpaceOnUse" x1="1348.6" y1="277.6" x2="1342.2" y2="172.3"><stop offset="0" stop-color="#ffffff"/><stop offset="0.04" stop-color="#fcfff3"/><stop offset="0.09" stop-color="#f8ffe5"/><stop offset="0.16" stop-color="#f4ffd2"/><stop offset="0.26" stop-color="#edffb7"/><stop offset="0.4" stop-color="#e4ff93"/><stop offset="0.6" stop-color="#d8ff62"/><stop offset="1" stop-color="#c0ff00"/></linearGradient><linearGradient id="w267" gradientUnits="userSpaceOnUse" x1="1348.6" y1="277.6" x2="1344.0" y2="172.5"><stop offset="0" stop-color="#ffffff"/><stop offset="0.04" stop-color="#fcfff3"/><stop offset="0.09" stop-color="#f9ffe5"/><stop offset="0.16" stop-color="#f5ffd2"/><stop offset="0.26" stop-color="#efffb7"/><stop offset="0.4" stop-color="#e8ff93"/><stop offset="0.6" stop-color="#ddff63"/><stop offset="1" stop-color="#c8ff00"/></linearGradient><linearGradient id="w268" gradientUnits="userSpaceOnUse" x1="1348.6" y1="277.6" x2="1345.9" y2="172.7"><stop offset="0" stop-color="#ffffff"/><stop offset="0.04" stop-color="#fdfff4"/><stop offset="0.09" stop-color="#faffe5"/><stop offset="0.16" stop-color="#f6ffd2"/><stop offset="0.26" stop-color="#f2ffb7"/><stop offset="0.4" stop-color="#ebff94"/><stop offset="0.6" stop-color="#e2ff63"/><stop offset="1" stop-color="#d0ff00"/></linearGradient><linearGradient id="w269" gradientUnits="userSpaceOnUse" x1="1348.6" y1="277.6" x2="1347.7" y2="172.9"><stop offset="0" stop-color="#ffffff"/><stop offset="0.04" stop-color="#fdfff4"/><stop offset="0.09" stop-color="#fbffe5"/><stop offset="0.16" stop-color="#f8ffd2"/><stop offset="0.26" stop-color="#f4ffb8"/><stop offset="0.4" stop-color="#eeff94"/><stop offset="0.6" stop-color="#e7ff63"/><stop offset="1" stop-color="#d8ff00"/></linearGradient><linearGradient id="w270" gradientUnits="userSpaceOnUse" x1="1348.6" y1="277.6" x2="1349.5" y2="173.2"><stop offset="0" stop-color="#ffffff"/><stop offset="0.04" stop-color="#fdfff4"/><stop offset="0.09" stop-color="#fcffe6"/><stop offset="0.16" stop-color="#f9ffd2"/><stop offset="0.26" stop-color="#f6ffb8"/><stop offset="0.4" stop-color="#f2ff94"/><stop offset="0.6" stop-color="#ecff64"/><stop offset="1" stop-color="#e0ff00"/></linearGradient><linearGradient id="w271" gradientUnits="userSpaceOnUse" x1="1348.6" y1="277.6" x2="1351.3" y2="173.4"><stop offset="0" stop-color="#ffffff"/><stop offset="0.04" stop-color="#fefff4"/><stop offset="0.09" stop-color="#fdffe6"/><stop offset="0.16" stop-color="#fbffd3"/><stop offset="0.26" stop-color="#f9ffb8"/><stop offset="0.4" stop-color="#f5ff95"/><stop offset="0.6" stop-color="#f1ff64"/><stop offset="1" stop-color="#e8ff00"/></linearGradient><linearGradient id="w272" gradientUnits="userSpaceOnUse" x1="1348.6" y1="277.6" x2="1353.2" y2="173.6"><stop offset="0" stop-color="#ffffff"/><stop offset="0.04" stop-color="#fefff4"/><stop offset="0.09" stop-color="#fdffe6"/><stop offset="0.16" stop-color="#fcffd3"/><stop offset="0.26" stop-color="#fbffb9"/><stop offset="0.4" stop-color="#f9ff95"/><stop offset="0.6" stop-color="#f6ff64"/><stop offset="1" stop-color="#f1ff00"/></linearGradient><linearGradient id="w273" gradientUnits="userSpaceOnUse" x1="1348.6" y1="277.6" x2="1355.0" y2="173.8"><stop offset="0" stop-color="#ffffff"/><stop offset="0.04" stop-color="#fffff4"/><stop offset="0.09" stop-color="#feffe6"/><stop offset="0.16" stop-color="#feffd3"/><stop offset="0.26" stop-color="#fdffb9"/><stop offset="0.4" stop-color="#fdff95"/><stop offset="0.6" stop-color="#fcff65"/><stop offset="1" stop-color="#f9ff00"/></linearGradient><linearGradient id="w274" gradientUnits="userSpaceOnUse" x1="1348.6" y1="277.6" x2="1356.8" y2="174.0"><stop offset="0" stop-color="#ffffff"/><stop offset="0.04" stop-color="#fffff4"/><stop offset="0.09" stop-color="#ffffe6"/><stop offset="0.16" stop-color="#ffffd3"/><stop offset="0.26" stop-color="#fffeb9"/><stop offset="0.4" stop-color="#fffe95"/><stop offset="0.6" stop-color="#fffd64"/><stop offset="1" stop-color="#fffc00"/></linearGradient><linearGradient id="w275" gradientUnits="userSpaceOnUse" x1="1348.6" y1="277.6" x2="1358.6" y2="174.3"><stop offset="0" stop-color="#ffffff"/><stop offset="0.04" stop-color="#fffff4"/><stop offset="0.09" stop-color="#fffee6"/><stop offset="0.16" stop-color="#fffdd2"/><stop offset="0.26" stop-color="#fffcb8"/><stop offset="0.4" stop-color="#fffa94"/><stop offset="0.6" stop-color="#fff863"/><stop offset="1" stop-color="#fff300"/></linearGradient><linearGradient id="w276" gradientUnits="userSpaceOnUse" x1="1348.6" y1="277.6" x2="1360.4" y2="174.5"><stop offset="0" stop-color="#ffffff"/><stop offset="0.04" stop-color="#fffef4"/><stop offset="0.09" stop-color="#fffde5"/><stop offset="0.16" stop-color="#fffcd2"/><stop offset="0.26" stop-color="#fffab7"/><stop offset="0.4" stop-color="#fff793"/><stop offset="0.6" stop-color="#fff362"/><stop offset="1" stop-color="#ffeb00"/></linearGradient><linearGradient id="w277" gradientUnits="userSpaceOnUse" x1="1348.6" y1="277.6" x2="1362.2" y2="174.7"><stop offset="0" stop-color="#ffffff"/><stop offset="0.04" stop-color="#fffef3"/><stop offset="0.09" stop-color="#fffce5"/><stop offset="0.16" stop-color="#fffad1"/><stop offset="0.26" stop-color="#fff7b6"/><stop offset="0.4" stop-color="#fff392"/><stop offset="0.6" stop-color="#ffee61"/><stop offset="1" stop-color="#ffe400"/></linearGradient><linearGradient id="w278" gradientUnits="userSpaceOnUse" x1="1348.6" y1="277.6" x2="1364.0" y2="174.9"><stop offset="0" stop-color="#ffffff"/><stop offset="0.04" stop-color="#fffef3"/><stop offset="0.09" stop-color="#fffce4"/><stop offset="0.16" stop-color="#fff9d0"/><stop offset="0.26" stop-color="#fff5b5"/><stop offset="0.4" stop-color="#fff091"/><stop offset="0.6" stop-color="#ffe960"/><stop offset="1" stop-color="#ffdc00"/></linearGradient><linearGradient id="w279" gradientUnits="userSpaceOnUse" x1="1348.6" y1="277.6" x2="1365.8" y2="175.1"><stop offset="0" stop-color="#ffffff"/><stop offset="0.04" stop-color="#fffdf3"/><stop offset="0.09" stop-color="#fffbe4"/><stop offset="0.16" stop-color="#fff7d0"/><stop offset="0.26" stop-color="#fff3b4"/><stop offset="0.4" stop-color="#ffed90"/><stop offset="0.6" stop-color="#ffe55f"/><stop offset="1" stop-color="#ffd500"/></linearGradient><linearGradient id="w280" gradientUnits="userSpaceOnUse" x1="1348.6" y1="277.6" x2="1367.6" y2="175.4"><stop offset="0" stop-color="#ffffff"/><stop offset="0.04" stop-color="#fffdf3"/><stop offset="0.09" stop-color="#fffae4"/><stop offset="0.16" stop-color="#fff6cf"/><stop offset="0.26" stop-color="#fff1b3"/><stop offset="0.4" stop-color="#ffea8f"/><stop offset="0.6" stop-color="#ffe15e"/><stop offset="1" stop-color="#ffce00"/></linearGradient><linearGradient id="w281" gradientUnits="userSpaceOnUse" x1="1348.6" y1="277.6" x2="1369.4" y2="175.6"><stop offset="0" stop-color="#ffffff"/><stop offset="0.04" stop-color="#fffcf3"/><stop offset="0.09" stop-color="#fff9e3"/><stop offset="0.16" stop-color="#fff5cf"/><stop offset="0.26" stop-color="#ffefb3"/><stop offset="0.4" stop-color="#ffe78e"/><stop offset="0.6" stop-color="#ffdc5e"/><stop offset="1" stop-color="#ffc800"/></linearGradient><linearGradient id="w282" gradientUnits="userSpaceOnUse" x1="1348.6" y1="277.6" x2="1371.2" y2="175.8"><stop offset="0" stop-color="#ffffff"/><stop offset="0.04" stop-color="#fffcf2"/><stop offset="0.09" stop-color="#fff8e3"/><stop offset="0.16" stop-color="#fff3ce"/><stop offset="0.26" stop-color="#ffedb2"/><stop offset="0.4" stop-color="#ffe48d"/><stop offset="0.6" stop-color="#ffd85d"/><stop offset="1" stop-color="#ffc200"/></linearGradient><linearGradient id="w283" gradientUnits="userSpaceOnUse" x1="1348.6" y1="277.6" x2="1373.0" y2="176.0"><stop offset="0" stop-color="#ffffff"/><stop offset="0.04" stop-color="#fffcf2"/><stop offset="0.09" stop-color="#fff8e2"/><stop offset="0.16" stop-color="#fff2cd"/><stop offset="0.26" stop-color="#ffeab1"/><stop offset="0.4" stop-color="#ffe18c"/><stop offset="0.6" stop-color="#ffd45c"/><stop offset="1" stop-color="#ffbc00"/></linearGradient><linearGradient id="w284" gradientUnits="userSpaceOnUse" x1="1348.6" y1="277.6" x2="1374.8" y2="176.2"><stop offset="0" stop-color="#ffffff"/><stop offset="0.04" stop-color="#fffbf2"/><stop offset="0.09" stop-color="#fff7e2"/><stop offset="0.16" stop-color="#fff1cd"/><stop offset="0.26" stop-color="#ffe8b0"/><stop offset="0.4" stop-color="#ffde8b"/><stop offset="0.6" stop-color="#ffd05b"/><stop offset="1" stop-color="#ffb600"/></linearGradient><linearGradient id="w285" gradientUnits="userSpaceOnUse" x1="1348.6" y1="277.6" x2="1376.6" y2="176.5"><stop offset="0" stop-color="#ffffff"/><stop offset="0.04" stop-color="#fffbf2"/><stop offset="0.09" stop-color="#fff6e2"/><stop offset="0.16" stop-color="#ffefcc"/><stop offset="0.26" stop-color="#ffe6af"/><stop offset="0.4" stop-color="#ffdb8a"/><stop offset="0.6" stop-color="#ffcc5a"/><stop offset="1" stop-color="#ffb000"/></linearGradient><linearGradient id="w286" gradientUnits="userSpaceOnUse" x1="1348.6" y1="277.6" x2="1378.5" y2="176.7"><stop offset="0" stop-color="#ffffff"/><stop offset="0.04" stop-color="#fffbf2"/><stop offset="0.09" stop-color="#fff5e1"/><stop offset="0.16" stop-color="#ffeecb"/><stop offset="0.26" stop-color="#ffe4ae"/><stop offset="0.4" stop-color="#ffd889"/><stop offset="0.6" stop-color="#ffc859"/><stop offset="1" stop-color="#ffab00"/></linearGradient><linearGradient id="w287" gradientUnits="userSpaceOnUse" x1="1348.6" y1="277.6" x2="1380.3" y2="176.9"><stop offset="0" stop-color="#ffffff"/><stop offset="0.04" stop-color="#fffaf1"/><stop offset="0.09" stop-color="#fff5e1"/><stop offset="0.16" stop-color="#ffedcb"/><stop offset="0.26" stop-color="#ffe3ad"/><stop offset="0.4" stop-color="#ffd588"/><stop offset="0.6" stop-color="#ffc558"/><stop offset="1" stop-color="#ffa600"/></linearGradient><linearGradient id="w288" gradientUnits="userSpaceOnUse" x1="1348.6" y1="277.6" x2="1382.2" y2="177.2"><stop offset="0" stop-color="#ffffff"/><stop offset="0.04" stop-color="#fffaf1"/><stop offset="0.09" stop-color="#fff4e0"/><stop offset="0.16" stop-color="#ffecca"/><stop offset="0.26" stop-color="#ffe1ad"/><stop offset="0.4" stop-color="#ffd387"/><stop offset="0.6" stop-color="#ffc157"/><stop offset="1" stop-color="#ffa100"/></linearGradient><linearGradient id="w289" gradientUnits="userSpaceOnUse" x1="1348.6" y1="277.6" x2="1384.1" y2="177.4"><stop offset="0" stop-color="#ffffff"/><stop offset="0.04" stop-color="#fffaf1"/><stop offset="0.09" stop-color="#fff3e0"/><stop offset="0.16" stop-color="#ffeac9"/><stop offset="0.26" stop-color="#ffdfac"/><stop offset="0.4" stop-color="#ffd086"/><stop offset="0.6" stop-color="#ffbe57"/><stop offset="1" stop-color="#ff9c00"/></linearGradient><linearGradient id="w290" gradientUnits="userSpaceOnUse" x1="1348.6" y1="277.6" x2="1386.0" y2="177.6"><stop offset="0" stop-color="#ffffff"/><stop offset="0.04" stop-color="#fff9f1"/><stop offset="0.09" stop-color="#fff2e0"/><stop offset="0.16" stop-color="#ffe9c9"/><stop offset="0.26" stop-color="#ffddab"/><stop offset="0.4" stop-color="#ffcd85"/><stop offset="0.6" stop-color="#ffba56"/><stop offset="1" stop-color="#ff9700"/></linearGradient><linearGradient id="w291" gradientUnits="userSpaceOnUse" x1="1348.6" y1="277.6" x2="1387.9" y2="177.8"><stop offset="0" stop-color="#ffffff"/><stop offset="0.04" stop-color="#fff9f1"/><stop offset="0.09" stop-color="#fff2df"/><stop offset="0.16" stop-color="#ffe8c8"/><stop offset="0.26" stop-color="#ffdbaa"/><stop offset="0.4" stop-color="#ffcb84"/><stop offset="0.6" stop-color="#ffb755"/><stop offset="1" stop-color="#ff9200"/></linearGradient><linearGradient id="w292" gradientUnits="userSpaceOnUse" x1="1348.6" y1="277.6" x2="1389.8" y2="178.1"><stop offset="0" stop-color="#ffffff"/><stop offset="0.04" stop-color="#fff9f0"/><stop offset="0.09" stop-color="#fff1df"/><stop offset="0.16" stop-color="#ffe7c8"/><stop offset="0.26" stop-color="#ffd9a9"/><stop offset="0.4" stop-color="#ffc883"/><stop offset="0.6" stop-color="#ffb354"/><stop offset="1" stop-color="#ff8e00"/></linearGradient><linearGradient id="w293" gradientUnits="userSpaceOnUse" x1="1348.6" y1="277.6" x2="1391.8" y2="178.3"><stop offset="0" stop-color="#ffffff"/><stop offset="0.04" stop-color="#fff8f0"/><stop offset="0.09" stop-color="#fff0de"/><stop offset="0.16" stop-color="#ffe5c7"/><stop offset="0.26" stop-color="#ffd7a8"/><stop offset="0.4" stop-color="#ffc683"/><stop offset="0.6" stop-color="#ffb053"/><stop offset="1" stop-color="#ff8a00"/></linearGradient><linearGradient id="w294" gradientUnits="userSpaceOnUse" x1="1348.6" y1="277.6" x2="1393.7" y2="178.6"><stop offset="0" stop-color="#ffffff"/><stop offset="0.04" stop-color="#fff8f0"/><stop offset="0.09" stop-color="#ffefde"/><stop offset="0.16" stop-color="#ffe4c6"/><stop offset="0.26" stop-color="#ffd5a8"/><stop offset="0.4" stop-color="#ffc382"/><stop offset="0.6" stop-color="#ffad53"/><stop offset="1" stop-color="#ff8500"/></linearGradient><linearGradient id="w295" gradientUnits="userSpaceOnUse" x1="1348.6" y1="277.6" x2="1395.7" y2="178.8"><stop offset="0" stop-color="#ffffff"/><stop offset="0.04" stop-color="#fff8f0"/><stop offset="0.09" stop-color="#ffefdd"/><stop offset="0.16" stop-color="#ffe3c6"/><stop offset="0.26" stop-color="#ffd4a7"/><stop offset="0.4" stop-color="#ffc181"/><stop offset="0.6" stop-color="#ffaa52"/><stop offset="1" stop-color="#ff8100"/></linearGradient><linearGradient id="w296" gradientUnits="userSpaceOnUse" x1="1348.6" y1="277.6" x2="1397.7" y2="179.0"><stop offset="0" stop-color="#ffffff"/><stop offset="0.04" stop-color="#fff7f0"/><stop offset="0.09" stop-color="#ffeedd"/><stop offset="0.16" stop-color="#ffe2c5"/><stop offset="0.26" stop-color="#ffd2a6"/><stop offset="0.4" stop-color="#ffbe80"/><stop offset="0.6" stop-color="#ffa751"/><stop offset="1" stop-color="#ff7d00"/></linearGradient><linearGradient id="w297" gradientUnits="userSpaceOnUse" x1="1348.6" y1="277.6" x2="1399.8" y2="179.3"><stop offset="0" stop-color="#ffffff"/><stop offset="0.04" stop-color="#fff7ef"/><stop offset="0.09" stop-color="#ffeddd"/><stop offset="0.16" stop-color="#ffe0c4"/><stop offset="0.26" stop-color="#ffd0a5"/><stop offset="0.4" stop-color="#ffbc7f"/><stop offset="0.6" stop-color="#ffa450"/><stop offset="1" stop-color="#ff7900"/></linearGradient><linearGradient id="w298" gradientUnits="userSpaceOnUse" x1="1348.6" y1="277.6" x2="1401.8" y2="179.5"><stop offset="0" stop-color="#ffffff"/><stop offset="0.04" stop-color="#fff6ef"/><stop offset="0.09" stop-color="#ffecdc"/><stop offset="0.16" stop-color="#ffdfc4"/><stop offset="0.26" stop-color="#ffcea4"/><stop offset="0.4" stop-color="#ffba7e"/><stop offset="0.6" stop-color="#ffa150"/><stop offset="1" stop-color="#ff7600"/></linearGradient><linearGradient id="w299" gradientUnits="userSpaceOnUse" x1="1348.6" y1="277.6" x2="1403.9" y2="179.8"><stop offset="0" stop-color="#ffffff"/><stop offset="0.04" stop-color="#fff6ef"/><stop offset="0.09" stop-color="#ffecdc"/><stop offset="0.16" stop-color="#ffdec3"/><stop offset="0.26" stop-color="#ffcca4"/><stop offset="0.4" stop-color="#ffb77d"/><stop offset="0.6" stop-color="#ff9e4f"/><stop offset="1" stop-color="#ff7200"/></linearGradient><linearGradient id="w300" gradientUnits="userSpaceOnUse" x1="1348.6" y1="277.6" x2="1406.1" y2="180.1"><stop offset="0" stop-color="#ffffff"/><stop offset="0.04" stop-color="#fff6ef"/><stop offset="0.09" stop-color="#ffebdb"/><stop offset="0.16" stop-color="#ffddc2"/><stop offset="0.26" stop-color="#ffcba3"/><stop offset="0.4" stop-color="#ffb57c"/><stop offset="0.6" stop-color="#ff9b4e"/><stop offset="1" stop-color="#ff6e00"/></linearGradient><linearGradient id="w301" gradientUnits="userSpaceOnUse" x1="1348.6" y1="277.6" x2="1408.2" y2="180.3"><stop offset="0" stop-color="#ffffff"/><stop offset="0.04" stop-color="#fff5ee"/><stop offset="0.09" stop-color="#ffeadb"/><stop offset="0.16" stop-color="#ffdbc2"/><stop offset="0.26" stop-color="#ffc9a2"/><stop offset="0.4" stop-color="#ffb37b"/><stop offset="0.6" stop-color="#ff984d"/><stop offset="1" stop-color="#ff6b00"/></linearGradient><linearGradient id="w302" gradientUnits="userSpaceOnUse" x1="1348.6" y1="277.6" x2="1410.4" y2="180.6"><stop offset="0" stop-color="#ffffff"/><stop offset="0.04" stop-color="#fff5ee"/><stop offset="0.09" stop-color="#ffe9da"/><stop offset="0.16" stop-color="#ffdac1"/><stop offset="0.26" stop-color="#ffc7a1"/><stop offset="0.4" stop-color="#ffb07a"/><stop offset="0.6" stop-color="#ff954d"/><stop offset="1" stop-color="#ff6700"/></linearGradient><linearGradient id="w303" gradientUnits="userSpaceOnUse" x1="1348.6" y1="277.6" x2="1412.6" y2="180.9"><stop offset="0" stop-color="#ffffff"/><stop offset="0.04" stop-color="#fff5ee"/><stop offset="0.09" stop-color="#ffe8da"/><stop offset="0.16" stop-color="#ffd9c0"/><stop offset="0.26" stop-color="#ffc5a0"/><stop offset="0.4" stop-color="#ffae7a"/><stop offset="0.6" stop-color="#ff924c"/><stop offset="1" stop-color="#ff6400"/></linearGradient><linearGradient id="w304" gradientUnits="userSpaceOnUse" x1="1348.6" y1="277.6" x2="1414.9" y2="181.1"><stop offset="0" stop-color="#ffffff"/><stop offset="0.04" stop-color="#fff4ee"/><stop offset="0.09" stop-color="#ffe8d9"/><stop offset="0.16" stop-color="#ffd8c0"/><stop offset="0.26" stop-color="#ffc49f"/><stop offset="0.4" stop-color="#ffac79"/><stop offset="0.6" stop-color="#ff8f4b"/><stop offset="1" stop-color="#ff6100"/></linearGradient><linearGradient id="w305" gradientUnits="userSpaceOnUse" x1="1348.6" y1="277.6" x2="1417.2" y2="181.4"><stop offset="0" stop-color="#ffffff"/><stop offset="0.04" stop-color="#fff4ed"/><stop offset="0.09" stop-color="#ffe7d9"/><stop offset="0.16" stop-color="#ffd6bf"/><stop offset="0.26" stop-color="#ffc29e"/><stop offset="0.4" stop-color="#ffa978"/><stop offset="0.6" stop-color="#ff8d4b"/><stop offset="1" stop-color="#ff5d00"/></linearGradient><linearGradient id="w306" gradientUnits="userSpaceOnUse" x1="1348.6" y1="277.6" x2="1419.5" y2="181.7"><stop offset="0" stop-color="#ffffff"/><stop offset="0.04" stop-color="#fff4ed"/><stop offset="0.09" stop-color="#ffe6d8"/><stop offset="0.16" stop-color="#ffd5be"/><stop offset="0.26" stop-color="#ffc09e"/><stop offset="0.4" stop-color="#ffa777"/><stop offset="0.6" stop-color="#ff8a4a"/><stop offset="1" stop-color="#ff5a00"/></linearGradient><linearGradient id="w307" gradientUnits="userSpaceOnUse" x1="1348.6" y1="277.6" x2="1421.9" y2="182.0"><stop offset="0" stop-color="#ffffff"/><stop offset="0.04" stop-color="#fff3ed"/><stop offset="0.09" stop-color="#ffe5d8"/><stop offset="0.16" stop-color="#ffd4be"/><stop offset="0.26" stop-color="#ffbe9d"/><stop offset="0.4" stop-color="#ffa576"/><stop offset="0.6" stop-color="#ff8749"/><stop offset="1" stop-color="#ff5700"/></linearGradient><linearGradient id="w308" gradientUnits="userSpaceOnUse" x1="1348.6" y1="277.6" x2="1424.4" y2="182.3"><stop offset="0" stop-color="#ffffff"/><stop offset="0.04" stop-color="#fff3ed"/><stop offset="0.09" stop-color="#ffe5d7"/><stop offset="0.16" stop-color="#ffd3bd"/><stop offset="0.26" stop-color="#ffbd9c"/><stop offset="0.4" stop-color="#ffa375"/><stop offset="0.6" stop-color="#ff8548"/><stop offset="1" stop-color="#ff5400"/></linearGradient><linearGradient id="w309" gradientUnits="userSpaceOnUse" x1="1348.6" y1="277.6" x2="1426.9" y2="182.6"><stop offset="0" stop-color="#ffffff"/><stop offset="0.04" stop-color="#fff2ec"/><stop offset="0.09" stop-color="#ffe4d7"/><stop offset="0.16" stop-color="#ffd1bc"/><stop offset="0.26" stop-color="#ffbb9b"/><stop offset="0.4" stop-color="#ffa074"/><stop offset="0.6" stop-color="#ff8248"/><stop offset="1" stop-color="#ff5100"/></linearGradient><linearGradient id="w310" gradientUnits="userSpaceOnUse" x1="1348.6" y1="277.6" x2="1429.5" y2="182.9"><stop offset="0" stop-color="#ffffff"/><stop offset="0.04" stop-color="#fff2ec"/><stop offset="0.09" stop-color="#ffe3d6"/><stop offset="0.16" stop-color="#ffd0bb"/><stop offset="0.26" stop-color="#ffb99a"/><stop offset="0.4" stop-color="#ff9e73"/><stop offset="0.6" stop-color="#ff7f47"/><stop offset="1" stop-color="#ff4e00"/></linearGradient><linearGradient id="w311" gradientUnits="userSpaceOnUse" x1="1348.6" y1="277.6" x2="1432.1" y2="183.2"><stop offset="0" stop-color="#ffffff"/><stop offset="0.04" stop-color="#fff2ec"/><stop offset="0.09" stop-color="#ffe2d6"/><stop offset="0.16" stop-color="#ffcfbb"/><stop offset="0.26" stop-color="#ffb799"/><stop offset="0.4" stop-color="#ff9c72"/><stop offset="0.6" stop-color="#ff7d46"/><stop offset="1" stop-color="#ff4b00"/></linearGradient><linearGradient id="w312" gradientUnits="userSpaceOnUse" x1="1348.6" y1="277.6" x2="1434.8" y2="183.6"><stop offset="0" stop-color="#ffffff"/><stop offset="0.04" stop-color="#fff1ec"/><stop offset="0.09" stop-color="#ffe1d5"/><stop offset="0.16" stop-color="#ffceba"/><stop offset="0.26" stop-color="#ffb598"/><stop offset="0.4" stop-color="#ff9a71"/><stop offset="0.6" stop-color="#ff7a45"/><stop offset="1" stop-color="#ff4800"/></linearGradient><linearGradient id="w313" gradientUnits="userSpaceOnUse" x1="1348.6" y1="277.6" x2="1437.5" y2="183.9"><stop offset="0" stop-color="#ffffff"/><stop offset="0.04" stop-color="#fff1eb"/><stop offset="0.09" stop-color="#ffe0d5"/><stop offset="0.16" stop-color="#ffccb9"/><stop offset="0.26" stop-color="#ffb497"/><stop offset="0.4" stop-color="#ff9771"/><stop offset="0.6" stop-color="#ff7845"/><stop offset="1" stop-color="#ff4600"/></linearGradient><linearGradient id="w314" gradientUnits="userSpaceOnUse" x1="1348.6" y1="277.6" x2="1440.3" y2="184.2"><stop offset="0" stop-color="#ffffff"/><stop offset="0.04" stop-color="#fff0eb"/><stop offset="0.09" stop-color="#ffe0d4"/><stop offset="0.16" stop-color="#ffcbb8"/><stop offset="0.26" stop-color="#ffb296"/><stop offset="0.4" stop-color="#ff9570"/><stop offset="0.6" stop-color="#ff7544"/><stop offset="1" stop-color="#ff4300"/></linearGradient><linearGradient id="w315" gradientUnits="userSpaceOnUse" x1="1348.6" y1="277.6" x2="1443.2" y2="184.6"><stop offset="0" stop-color="#ffffff"/><stop offset="0.04" stop-color="#fff0eb"/><stop offset="0.09" stop-color="#ffdfd4"/><stop offset="0.16" stop-color="#ffcab8"/><stop offset="0.26" stop-color="#ffb095"/><stop offset="0.4" stop-color="#ff936f"/><stop offset="0.6" stop-color="#ff7343"/><stop offset="1" stop-color="#ff4000"/></linearGradient><linearGradient id="w316" gradientUnits="userSpaceOnUse" x1="1348.6" y1="277.6" x2="1446.2" y2="184.9"><stop offset="0" stop-color="#ffffff"/><stop offset="0.04" stop-color="#ffefea"/><stop offset="0.09" stop-color="#ffded3"/><stop offset="0.16" stop-color="#ffc8b7"/><stop offset="0.26" stop-color="#ffae94"/><stop offset="0.4" stop-color="#ff916e"/><stop offset="0.6" stop-color="#ff7043"/><stop offset="1" stop-color="#ff3e00"/></linearGradient><linearGradient id="w317" gradientUnits="userSpaceOnUse" x1="1348.6" y1="277.6" x2="1449.3" y2="185.3"><stop offset="0" stop-color="#ffffff"/><stop offset="0.04" stop-color="#ffefea"/><stop offset="0.09" stop-color="#ffddd3"/><stop offset="0.16" stop-color="#ffc7b6"/><stop offset="0.26" stop-color="#ffac93"/><stop offset="0.4" stop-color="#ff8f6d"/><stop offset="0.6" stop-color="#ff6e42"/><stop offset="1" stop-color="#ff3b00"/></linearGradient><linearGradient id="w318" gradientUnits="userSpaceOnUse" x1="1348.6" y1="277.6" x2="1452.4" y2="185.7"><stop offset="0" stop-color="#ffffff"/><stop offset="0.04" stop-color="#ffefea"/><stop offset="0.09" stop-color="#ffdcd2"/><stop offset="0.16" stop-color="#ffc5b5"/><stop offset="0.26" stop-color="#ffaa92"/><stop offset="0.4" stop-color="#ff8c6c"/><stop offset="0.6" stop-color="#ff6b41"/><stop offset="1" stop-color="#ff3800"/></linearGradient><linearGradient id="w319" gradientUnits="userSpaceOnUse" x1="1348.6" y1="277.6" x2="1455.7" y2="186.1"><stop offset="0" stop-color="#ffffff"/><stop offset="0.04" stop-color="#ffeeea"/><stop offset="0.09" stop-color="#ffdbd1"/><stop offset="0.16" stop-color="#ffc4b4"/><stop offset="0.26" stop-color="#ffa991"/><stop offset="0.4" stop-color="#ff8a6b"/><stop offset="0.6" stop-color="#ff6940"/><stop offset="1" stop-color="#ff3600"/></linearGradient><linearGradient id="w320" gradientUnits="userSpaceOnUse" x1="1348.6" y1="277.6" x2="1459.1" y2="186.5"><stop offset="0" stop-color="#ffffff"/><stop offset="0.04" stop-color="#ffeee9"/><stop offset="0.09" stop-color="#ffdad1"/><stop offset="0.16" stop-color="#ffc3b3"/><stop offset="0.26" stop-color="#ffa790"/><stop offset="0.4" stop-color="#ff886a"/><stop offset="0.6" stop-color="#ff6640"/><stop offset="1" stop-color="#ff3300"/></linearGradient><linearGradient id="w321" gradientUnits="userSpaceOnUse" x1="1348.6" y1="277.6" x2="1462.5" y2="186.9"><stop offset="0" stop-color="#ffffff"/><stop offset="0.04" stop-color="#ffede9"/><stop offset="0.09" stop-color="#ffd9d0"/><stop offset="0.16" stop-color="#ffc1b2"/><stop offset="0.26" stop-color="#ffa58f"/><stop offset="0.4" stop-color="#ff8669"/><stop offset="0.6" stop-color="#ff643f"/><stop offset="1" stop-color="#ff3100"/></linearGradient><linearGradient id="w322" gradientUnits="userSpaceOnUse" x1="1348.6" y1="277.6" x2="1466.1" y2="187.4"><stop offset="0" stop-color="#ffffff"/><stop offset="0.04" stop-color="#ffede8"/><stop offset="0.09" stop-color="#ffd8cf"/><stop offset="0.16" stop-color="#ffc0b1"/><stop offset="0.26" stop-color="#ffa38e"/><stop offset="0.4" stop-color="#ff8368"/><stop offset="0.6" stop-color="#ff613e"/><stop offset="1" stop-color="#ff2f00"/></linearGradient><linearGradient id="w323" gradientUnits="userSpaceOnUse" x1="1348.6" y1="277.6" x2="1469.9" y2="187.8"><stop offset="0" stop-color="#ffffff"/><stop offset="0.04" stop-color="#ffece8"/><stop offset="0.09" stop-color="#ffd7cf"/><stop offset="0.16" stop-color="#ffbeb0"/><stop offset="0.26" stop-color="#ffa18d"/><stop offset="0.4" stop-color="#ff8167"/><stop offset="0.6" stop-color="#ff5f3d"/><stop offset="1" stop-color="#ff2c00"/></linearGradient><linearGradient id="w324" gradientUnits="userSpaceOnUse" x1="1348.6" y1="277.6" x2="1473.8" y2="188.3"><stop offset="0" stop-color="#ffffff"/><stop offset="0.04" stop-color="#ffece8"/><stop offset="0.09" stop-color="#ffd6ce"/><stop offset="0.16" stop-color="#ffbdb0"/><stop offset="0.26" stop-color="#ff9f8c"/><stop offset="0.4" stop-color="#ff7f66"/><stop offset="0.6" stop-color="#ff5c3c"/><stop offset="1" stop-color="#ff2a00"/></linearGradient><linearGradient id="w325" gradientUnits="userSpaceOnUse" x1="1348.6" y1="277.6" x2="1477.8" y2="188.8"><stop offset="0" stop-color="#ffffff"/><stop offset="0.04" stop-color="#ffebe7"/><stop offset="0.09" stop-color="#ffd5cd"/><stop offset="0.16" stop-color="#ffbbaf"/><stop offset="0.26" stop-color="#ff9d8b"/><stop offset="0.4" stop-color="#ff7c65"/><stop offset="0.6" stop-color="#ff5a3c"/><stop offset="1" stop-color="#ff2700"/></linearGradient><linearGradient id="w326" gradientUnits="userSpaceOnUse" x1="1348.6" y1="277.6" x2="1482.0" y2="189.3"><stop offset="0" stop-color="#ffffff"/><stop offset="0.04" stop-color="#ffeae7"/><stop offset="0.09" stop-color="#ffd4cd"/><stop offset="0.16" stop-color="#ffb9ae"/><stop offset="0.26" stop-color="#ff9b8a"/><stop offset="0.4" stop-color="#ff7a63"/><stop offset="0.6" stop-color="#ff573b"/><stop offset="1" stop-color="#ff2500"/></linearGradient><linearGradient id="w327" gradientUnits="userSpaceOnUse" x1="1348.6" y1="277.6" x2="1486.3" y2="189.8"><stop offset="0" stop-color="#ffffff"/><stop offset="0.04" stop-color="#ffeae6"/><stop offset="0.09" stop-color="#ffd3cc"/><stop offset="0.16" stop-color="#ffb8ac"/><stop offset="0.26" stop-color="#ff9989"/><stop offset="0.4" stop-color="#ff7862"/><stop offset="0.6" stop-color="#ff553a"/><stop offset="1" stop-color="#ff2300"/></linearGradient><linearGradient id="w328" gradientUnits="userSpaceOnUse" x1="1348.6" y1="277.6" x2="1490.9" y2="190.4"><stop offset="0" stop-color="#ffffff"/><stop offset="0.04" stop-color="#ffe9e6"/><stop offset="0.09" stop-color="#ffd2cb"/><stop offset="0.16" stop-color="#ffb6ab"/><stop offset="0.26" stop-color="#ff9787"/><stop offset="0.4" stop-color="#ff7561"/><stop offset="0.6" stop-color="#ff5339"/><stop offset="1" stop-color="#ff2100"/></linearGradient><linearGradient id="w329" gradientUnits="userSpaceOnUse" x1="1348.6" y1="277.6" x2="1495.6" y2="191.0"><stop offset="0" stop-color="#ffffff"/><stop offset="0.04" stop-color="#ffe9e6"/><stop offset="0.09" stop-color="#ffd0ca"/><stop offset="0.16" stop-color="#ffb4aa"/><stop offset="0.26" stop-color="#ff9586"/><stop offset="0.4" stop-color="#ff7360"/><stop offset="0.6" stop-color="#ff5038"/><stop offset="1" stop-color="#ff1f00"/></linearGradient><linearGradient id="w330" gradientUnits="userSpaceOnUse" x1="1348.6" y1="277.6" x2="1500.6" y2="191.6"><stop offset="0" stop-color="#ffffff"/><stop offset="0.04" stop-color="#ffe8e5"/><stop offset="0.09" stop-color="#ffcfc9"/><stop offset="0.16" stop-color="#ffb3a9"/><stop offset="0.26" stop-color="#ff9385"/><stop offset="0.4" stop-color="#ff715f"/><stop offset="0.6" stop-color="#ff4e38"/><stop offset="1" stop-color="#ff1c00"/></linearGradient><linearGradient id="w331" gradientUnits="userSpaceOnUse" x1="1348.6" y1="277.6" x2="1505.8" y2="192.2"><stop offset="0" stop-color="#ffffff"/><stop offset="0.04" stop-color="#ffe7e5"/><stop offset="0.09" stop-color="#ffcec8"/><stop offset="0.16" stop-color="#ffb1a8"/><stop offset="0.26" stop-color="#ff9084"/><stop offset="0.4" stop-color="#ff6e5e"/><stop offset="0.6" stop-color="#ff4b37"/><stop offset="1" stop-color="#ff1a00"/></linearGradient><linearGradient id="w332" gradientUnits="userSpaceOnUse" x1="1348.6" y1="277.6" x2="1511.3" y2="192.9"><stop offset="0" stop-color="#ffffff"/><stop offset="0.04" stop-color="#ffe7e4"/><stop offset="0.09" stop-color="#ffcdc7"/><stop offset="0.16" stop-color="#ffafa7"/><stop offset="0.26" stop-color="#ff8e82"/><stop offset="0.4" stop-color="#ff6c5c"/><stop offset="0.6" stop-color="#ff4936"/><stop offset="1" stop-color="#ff1800"/></linearGradient><linearGradient id="w333" gradientUnits="userSpaceOnUse" x1="1348.6" y1="277.6" x2="1517.1" y2="193.6"><stop offset="0" stop-color="#ffffff"/><stop offset="0.04" stop-color="#ffe6e4"/><stop offset="0.09" stop-color="#ffcbc6"/><stop offset="0.16" stop-color="#ffada5"/><stop offset="0.26" stop-color="#ff8c81"/><stop offset="0.4" stop-color="#ff695b"/><stop offset="0.6" stop-color="#ff4735"/><stop offset="1" stop-color="#ff1600"/></linearGradient><linearGradient id="w334" gradientUnits="userSpaceOnUse" x1="1348.6" y1="277.6" x2="1523.1" y2="194.3"><stop offset="0" stop-color="#ffffff"/><stop offset="0.04" stop-color="#ffe5e3"/><stop offset="0.09" stop-color="#ffcac5"/><stop offset="0.16" stop-color="#ffaba4"/><stop offset="0.26" stop-color="#ff8a7f"/><stop offset="0.4" stop-color="#ff675a"/><stop offset="0.6" stop-color="#ff4434"/><stop offset="1" stop-color="#ff1400"/></linearGradient><linearGradient id="w335" gradientUnits="userSpaceOnUse" x1="1348.6" y1="277.6" x2="1529.6" y2="195.1"><stop offset="0" stop-color="#ffffff"/><stop offset="0.04" stop-color="#ffe4e2"/><stop offset="0.09" stop-color="#ffc9c4"/><stop offset="0.16" stop-color="#ffa9a3"/><stop offset="0.26" stop-color="#ff877e"/><stop offset="0.4" stop-color="#ff6559"/><stop offset="0.6" stop-color="#ff4233"/><stop offset="1" stop-color="#ff1200"/></linearGradient><linearGradient id="w336" gradientUnits="userSpaceOnUse" x1="1348.6" y1="277.6" x2="1536.4" y2="195.9"><stop offset="0" stop-color="#ffffff"/><stop offset="0.04" stop-color="#ffe4e2"/><stop offset="0.09" stop-color="#ffc7c3"/><stop offset="0.16" stop-color="#ffa7a1"/><stop offset="0.26" stop-color="#ff857d"/><stop offset="0.4" stop-color="#ff6257"/><stop offset="0.6" stop-color="#ff3f32"/><stop offset="1" stop-color="#ff1000"/></linearGradient><linearGradient id="w337" gradientUnits="userSpaceOnUse" x1="1348.6" y1="277.6" x2="1543.6" y2="196.8"><stop offset="0" stop-color="#ffffff"/><stop offset="0.04" stop-color="#ffe3e1"/><stop offset="0.09" stop-color="#ffc5c2"/><stop offset="0.16" stop-color="#ffa5a0"/><stop offset="0.26" stop-color="#ff827b"/><stop offset="0.4" stop-color="#ff5f56"/><stop offset="0.6" stop-color="#ff3d31"/><stop offset="1" stop-color="#ff0e00"/></linearGradient><linearGradient id="w338" gradientUnits="userSpaceOnUse" x1="1348.6" y1="277.6" x2="1551.3" y2="197.7"><stop offset="0" stop-color="#ffffff"/><stop offset="0.04" stop-color="#ffe2e0"/><stop offset="0.09" stop-color="#ffc4c1"/><stop offset="0.16" stop-color="#ffa39e"/><stop offset="0.26" stop-color="#ff8079"/><stop offset="0.4" stop-color="#ff5d54"/><stop offset="0.6" stop-color="#ff3b30"/><stop offset="1" stop-color="#ff0d00"/></linearGradient><linearGradient id="w339" gradientUnits="userSpaceOnUse" x1="1348.6" y1="277.6" x2="1559.4" y2="198.7"><stop offset="0" stop-color="#ffffff"/><stop offset="0.04" stop-color="#ffe1e0"/><stop offset="0.09" stop-color="#ffc2c0"/><stop offset="0.16" stop-color="#ffa19d"/><stop offset="0.26" stop-color="#ff7d78"/><stop offset="0.4" stop-color="#ff5a53"/><stop offset="0.6" stop-color="#ff382f"/><stop offset="1" stop-color="#ff0b00"/></linearGradient><linearGradient id="w340" gradientUnits="userSpaceOnUse" x1="1348.6" y1="277.6" x2="1568.2" y2="199.8"><stop offset="0" stop-color="#ffffff"/><stop offset="0.04" stop-color="#ffe0df"/><stop offset="0.09" stop-color="#ffc0be"/><stop offset="0.16" stop-color="#ff9e9b"/><stop offset="0.26" stop-color="#ff7b76"/><stop offset="0.4" stop-color="#ff5852"/><stop offset="0.6" stop-color="#ff362e"/><stop offset="1" stop-color="#ff0900"/></linearGradient><linearGradient id="w341" gradientUnits="userSpaceOnUse" x1="1348.6" y1="277.6" x2="1577.6" y2="201.0"><stop offset="0" stop-color="#ffffff"/><stop offset="0.04" stop-color="#ffdfde"/><stop offset="0.09" stop-color="#ffbfbd"/><stop offset="0.16" stop-color="#ff9c99"/><stop offset="0.26" stop-color="#ff7874"/><stop offset="0.4" stop-color="#ff5550"/><stop offset="0.6" stop-color="#ff342d"/><stop offset="1" stop-color="#ff0800"/></linearGradient><linearGradient id="w342" gradientUnits="userSpaceOnUse" x1="1348.6" y1="277.6" x2="1587.7" y2="202.2"><stop offset="0" stop-color="#ffffff"/><stop offset="0.04" stop-color="#ffdedd"/><stop offset="0.09" stop-color="#ffbdbb"/><stop offset="0.16" stop-color="#ff9a97"/><stop offset="0.26" stop-color="#ff7572"/><stop offset="0.4" stop-color="#ff534e"/><stop offset="0.6" stop-color="#ff312c"/><stop offset="1" stop-color="#ff0600"/></linearGradient><linearGradient id="w343" gradientUnits="userSpaceOnUse" x1="1348.6" y1="277.6" x2="1598.6" y2="203.5"><stop offset="0" stop-color="#ffffff"/><stop offset="0.04" stop-color="#ffdddc"/><stop offset="0.09" stop-color="#ffbbba"/><stop offset="0.16" stop-color="#ff9795"/><stop offset="0.26" stop-color="#ff7370"/><stop offset="0.4" stop-color="#ff504d"/><stop offset="0.6" stop-color="#ff2f2b"/><stop offset="1" stop-color="#ff0400"/></linearGradient><linearGradient id="w344" gradientUnits="userSpaceOnUse" x1="1348.6" y1="277.6" x2="1610.4" y2="205.0"><stop offset="0" stop-color="#ffffff"/><stop offset="0.04" stop-color="#ffdbdb"/><stop offset="0.09" stop-color="#ffb9b8"/><stop offset="0.16" stop-color="#ff9593"/><stop offset="0.26" stop-color="#ff706e"/><stop offset="0.4" stop-color="#ff4d4b"/><stop offset="0.6" stop-color="#ff2d2a"/><stop offset="1" stop-color="#ff0300"/></linearGradient><linearGradient id="w345" gradientUnits="userSpaceOnUse" x1="1348.6" y1="277.6" x2="1623.3" y2="206.5"><stop offset="0" stop-color="#ffffff"/><stop offset="0.04" stop-color="#ffdada"/><stop offset="0.09" stop-color="#ffb7b6"/><stop offset="0.16" stop-color="#ff9291"/><stop offset="0.26" stop-color="#ff6d6c"/><stop offset="0.4" stop-color="#ff4b49"/><stop offset="0.6" stop-color="#ff2b29"/><stop offset="1" stop-color="#ff0200"/></linearGradient><linearGradient id="w346" gradientUnits="userSpaceOnUse" x1="1348.6" y1="277.6" x2="1637.4" y2="208.2"><stop offset="0" stop-color="#ffffff"/><stop offset="0.04" stop-color="#ffd9d9"/><stop offset="0.09" stop-color="#ffb4b4"/><stop offset="0.16" stop-color="#ff8f8f"/><stop offset="0.26" stop-color="#ff6a6a"/><stop offset="0.4" stop-color="#ff4847"/><stop offset="0.6" stop-color="#ff2928"/><stop offset="1" stop-color="#ff0100"/></linearGradient><linearGradient id="w347" gradientUnits="userSpaceOnUse" x1="1348.6" y1="277.6" x2="1652.8" y2="210.1"><stop offset="0" stop-color="#ffffff"/><stop offset="0.04" stop-color="#ffd7d7"/><stop offset="0.09" stop-color="#ffb2b2"/><stop offset="0.16" stop-color="#ff8c8c"/><stop offset="0.26" stop-color="#ff6868"/><stop offset="0.4" stop-color="#ff4646"/><stop offset="0.6" stop-color="#ff2727"/><stop offset="1" stop-color="#ff0000"/></linearGradient><linearGradient id="w348" gradientUnits="userSpaceOnUse" x1="1348.6" y1="277.6" x2="1654.1" y2="215.4"><stop offset="0" stop-color="#ffffff"/><stop offset="0.04" stop-color="#ffd7d7"/><stop offset="0.09" stop-color="#ffb2b2"/><stop offset="0.16" stop-color="#ff8c8c"/><stop offset="0.26" stop-color="#ff6768"/><stop offset="0.4" stop-color="#ff4546"/><stop offset="0.6" stop-color="#ff2727"/><stop offset="1" stop-color="#ff0000"/></linearGradient><linearGradient id="w349" gradientUnits="userSpaceOnUse" x1="1348.6" y1="277.6" x2="1649.3" y2="221.8"><stop offset="0" stop-color="#ffffff"/><stop offset="0.04" stop-color="#ffd8d8"/><stop offset="0.09" stop-color="#ffb3b3"/><stop offset="0.16" stop-color="#ff8d8e"/><stop offset="0.26" stop-color="#ff6869"/><stop offset="0.4" stop-color="#ff4647"/><stop offset="0.6" stop-color="#ff2728"/><stop offset="1" stop-color="#ff0001"/></linearGradient><linearGradient id="w350" gradientUnits="userSpaceOnUse" x1="1348.6" y1="277.6" x2="1644.6" y2="228.0"><stop offset="0" stop-color="#ffffff"/><stop offset="0.04" stop-color="#ffd8d9"/><stop offset="0.09" stop-color="#ffb3b4"/><stop offset="0.16" stop-color="#ff8e8f"/><stop offset="0.26" stop-color="#ff696b"/><stop offset="0.4" stop-color="#ff4749"/><stop offset="0.6" stop-color="#ff2729"/><stop offset="1" stop-color="#ff0002"/></linearGradient><linearGradient id="w351" gradientUnits="userSpaceOnUse" x1="1348.6" y1="277.6" x2="1640.1" y2="234.0"><stop offset="0" stop-color="#ffffff"/><stop offset="0.04" stop-color="#ffd9d9"/><stop offset="0.09" stop-color="#ffb4b5"/><stop offset="0.16" stop-color="#ff8f91"/><stop offset="0.26" stop-color="#ff6a6c"/><stop offset="0.4" stop-color="#ff474a"/><stop offset="0.6" stop-color="#ff282b"/><stop offset="1" stop-color="#ff0004"/></linearGradient><linearGradient id="w352" gradientUnits="userSpaceOnUse" x1="1348.6" y1="277.6" x2="1635.8" y2="239.8"><stop offset="0" stop-color="#ffffff"/><stop offset="0.04" stop-color="#ffd9da"/><stop offset="0.09" stop-color="#ffb5b6"/><stop offset="0.16" stop-color="#ff9092"/><stop offset="0.26" stop-color="#ff6b6e"/><stop offset="0.4" stop-color="#ff484c"/><stop offset="0.6" stop-color="#ff282d"/><stop offset="1" stop-color="#ff0005"/></linearGradient><linearGradient id="w353" gradientUnits="userSpaceOnUse" x1="1348.6" y1="277.6" x2="1631.6" y2="245.3"><stop offset="0" stop-color="#ffffff"/><stop offset="0.04" stop-color="#ffd9da"/><stop offset="0.09" stop-color="#ffb6b8"/><stop offset="0.16" stop-color="#ff9193"/><stop offset="0.26" stop-color="#ff6b6f"/><stop offset="0.4" stop-color="#ff494e"/><stop offset="0.6" stop-color="#ff292e"/><stop offset="1" stop-color="#ff0007"/></linearGradient><linearGradient id="w354" gradientUnits="userSpaceOnUse" x1="1348.6" y1="277.6" x2="1627.5" y2="250.7"><stop offset="0" stop-color="#ffffff"/><stop offset="0.04" stop-color="#ffdadb"/><stop offset="0.09" stop-color="#ffb6b9"/><stop offset="0.16" stop-color="#ff9195"/><stop offset="0.26" stop-color="#ff6c71"/><stop offset="0.4" stop-color="#ff494f"/><stop offset="0.6" stop-color="#ff2930"/><stop offset="1" stop-color="#ff0008"/></linearGradient><linearGradient id="w355" gradientUnits="userSpaceOnUse" x1="1348.6" y1="277.6" x2="1623.6" y2="255.9"><stop offset="0" stop-color="#ffffff"/><stop offset="0.04" stop-color="#ffdadc"/><stop offset="0.09" stop-color="#ffb7ba"/><stop offset="0.16" stop-color="#ff9296"/><stop offset="0.26" stop-color="#ff6d73"/><stop offset="0.4" stop-color="#ff4a51"/><stop offset="0.6" stop-color="#ff2932"/><stop offset="1" stop-color="#ff000a"/></linearGradient><linearGradient id="w356" gradientUnits="userSpaceOnUse" x1="1348.6" y1="277.6" x2="1619.8" y2="261.0"><stop offset="0" stop-color="#ffffff"/><stop offset="0.04" stop-color="#ffdbdc"/><stop offset="0.09" stop-color="#ffb7bb"/><stop offset="0.16" stop-color="#ff9398"/><stop offset="0.26" stop-color="#ff6e75"/><stop offset="0.4" stop-color="#ff4b53"/><stop offset="0.6" stop-color="#ff2a34"/><stop offset="1" stop-color="#ff000c"/></linearGradient><linearGradient id="w357" gradientUnits="userSpaceOnUse" x1="1348.6" y1="277.6" x2="1616.1" y2="265.9"><stop offset="0" stop-color="#ffffff"/><stop offset="0.04" stop-color="#ffdbdd"/><stop offset="0.09" stop-color="#ffb8bc"/><stop offset="0.16" stop-color="#ff9499"/><stop offset="0.26" stop-color="#ff6f76"/><stop offset="0.4" stop-color="#ff4b55"/><stop offset="0.6" stop-color="#ff2a36"/><stop offset="1" stop-color="#ff000e"/></linearGradient><linearGradient id="w358" gradientUnits="userSpaceOnUse" x1="1348.6" y1="277.6" x2="1612.5" y2="270.7"><stop offset="0" stop-color="#ffffff"/><stop offset="0.04" stop-color="#ffdbde"/><stop offset="0.09" stop-color="#ffb9bd"/><stop offset="0.16" stop-color="#ff949b"/><stop offset="0.26" stop-color="#ff6f78"/><stop offset="0.4" stop-color="#ff4c57"/><stop offset="0.6" stop-color="#ff2b38"/><stop offset="1" stop-color="#ff0010"/></linearGradient><linearGradient id="w359" gradientUnits="userSpaceOnUse" x1="1348.6" y1="277.6" x2="1609.0" y2="275.3"><stop offset="0" stop-color="#ffffff"/><stop offset="0.04" stop-color="#ffdcde"/><stop offset="0.09" stop-color="#ffb9be"/><stop offset="0.16" stop-color="#ff959d"/><stop offset="0.26" stop-color="#ff707a"/><stop offset="0.4" stop-color="#ff4d59"/><stop offset="0.6" stop-color="#ff2b3a"/><stop offset="1" stop-color="#ff0012"/></linearGradient><clipPath id="cp"><rect x="1107.5" y="115.5" width="733" height="735.5"/></clipPath><clipPath id="cloc" clip-path="url(#cp)"><path d="M1419.5 829.9L1418.6 830.8L1418.4 830.8L1418.2 830.8L1418.0 830.8L1417.8 830.7L1417.5 830.7L1417.2 830.8L1416.9 830.8L1416.5 830.8L1416.1 830.8L1415.6 830.5L1415.0 830.1L1414.2 829.5L1413.2 828.7L1412.1 827.7L1410.9 826.6L1409.6 825.3L1408.1 823.8L1406.5 822.1L1404.5 820.1L1402.4 817.8L1400.0 815.2L1397.5 812.4L1394.8 809.4L1391.9 806.3L1388.8 802.9L1385.4 799.2L1381.6 795.1L1377.4 790.7L1372.9 785.8L1368.1 780.7L1363.0 775.3L1357.6 769.4L1351.8 762.8L1345.5 755.5L1338.8 747.6L1331.9 739.0L1324.5 729.5L1316.4 718.6L1307.4 705.5L1297.4 690.2L1286.6 672.7L1275.2 653.3L1263.2 631.9L1250.7 608.6L1237.8 583.1L1224.7 555.9L1211.4 527.4L1198.1 498.1L1185.2 468.2L1172.9 438.3L1161.6 408.7L1151.5 379.8L1142.4 351.9L1134.4 325.6L1127.4 301.1L1121.6 278.6L1116.9 258.2L1113.3 240.1L1110.7 223.9L1108.9 209.7L1108.0 197.1L1107.9 186.0L1108.5 176.2L1109.8 167.6L1111.7 160.1L1114.3 153.7L1117.5 148.2L1121.2 143.8L1125.3 140.2L1129.8 137.5L1134.7 135.5L1139.8 134.1L1145.1 133.1L1150.7 132.5L1156.4 132.1L1162.3 131.9L1168.1 131.8L1174.0 131.8L1179.9 131.9L1185.9 132.1L1191.9 132.4L1198.1 132.8L1204.4 133.3L1210.9 133.9L1217.6 134.5L1224.4 135.2L1231.5 136.0L1238.7 136.9L1246.2 137.8L1254.0 138.8L1262.0 139.9L1270.3 141.0L1278.9 142.2L1287.7 143.4L1296.9 144.8L1306.5 146.1L1316.3 147.6L1326.5 149.1L1337.0 150.6L1348.0 152.2L1359.2 153.9L1370.9 155.6L1382.9 157.4L1395.2 159.3L1407.9 161.2L1421.0 163.1L1434.5 165.2L1448.2 167.2L1462.3 169.3L1476.7 171.5L1491.3 173.7L1506.2 175.9L1521.2 178.1L1536.4 180.4L1551.5 182.7L1566.3 184.9L1581.0 187.1L1595.5 189.3L1610.0 191.5L1624.4 193.6L1638.4 195.7L1652.0 197.7L1665.0 199.7L1677.5 201.5L1689.5 203.3L1701.0 205.0L1711.9 206.7L1722.3 208.3L1732.0 209.7L1741.2 211.1L1749.9 212.4L1758.0 213.6L1765.7 214.7L1772.9 215.8L1779.8 216.9L1786.3 217.8L1792.5 218.8L1798.4 219.7L1804.1 220.5L1809.4 221.3L1814.4 222.1L1819.1 222.8L1823.4 223.4L1827.4 224.0L1831.1 224.5L1834.5 225.0L1837.6 225.5L1840.5 225.9L1843.1 226.3L1876.8 231.6L1876.8 216.8z"/></clipPath></defs>
<g clip-path="url(#cloc)"><g shape-rendering="crispEdges"><path fill="url(#w0)" d="M1348.6 277.6L2349 278L2348 305z"/><path fill="url(#w1)" d="M1348.6 277.6L2348 295L2348 323z"/><path fill="url(#w2)" d="M1348.6 277.6L2348 312L2347 340z"/><path fill="url(#w3)" d="M1348.6 277.6L2347 330L2345 358z"/><path fill="url(#w4)" d="M1348.6 277.6L2346 347L2344 375z"/><path fill="url(#w5)" d="M1348.6 277.6L2345 365L2342 393z"/><path fill="url(#w6)" d="M1348.6 277.6L2343 382L2340 410z"/><path fill="url(#w7)" d="M1348.6 277.6L2341 399L2337 427z"/><path fill="url(#w8)" d="M1348.6 277.6L2339 417L2335 444z"/><path fill="url(#w9)" d="M1348.6 277.6L2336 434L2332 462z"/><path fill="url(#w10)" d="M1348.6 277.6L2333 451L2328 479z"/><path fill="url(#w11)" d="M1348.6 277.6L2330 468L2325 496z"/><path fill="url(#w12)" d="M1348.6 277.6L2327 485L2321 513z"/><path fill="url(#w13)" d="M1348.6 277.6L2323 503L2316 530z"/><path fill="url(#w14)" d="M1348.6 277.6L2319 519L2312 546z"/><path fill="url(#w15)" d="M1348.6 277.6L2315 536L2307 563z"/><path fill="url(#w16)" d="M1348.6 277.6L2310 553L2302 580z"/><path fill="url(#w17)" d="M1348.6 277.6L2305 570L2296 597z"/><path fill="url(#w18)" d="M1348.6 277.6L2300 587L2291 613z"/><path fill="url(#w19)" d="M1348.6 277.6L2294 603L2285 629z"/><path fill="url(#w20)" d="M1348.6 277.6L2288 620L2278 646z"/><path fill="url(#w21)" d="M1348.6 277.6L2282 636L2272 662z"/><path fill="url(#w22)" d="M1348.6 277.6L2276 652L2265 678z"/><path fill="url(#w23)" d="M1348.6 277.6L2269 668L2258 694z"/><path fill="url(#w24)" d="M1348.6 277.6L2262 684L2250 710z"/><path fill="url(#w25)" d="M1348.6 277.6L2255 700L2243 725z"/><path fill="url(#w26)" d="M1348.6 277.6L2247 716L2235 741z"/><path fill="url(#w27)" d="M1348.6 277.6L2240 732L2227 756z"/><path fill="url(#w28)" d="M1348.6 277.6L2232 747L2218 772z"/><path fill="url(#w29)" d="M1348.6 277.6L2223 762L2209 787z"/><path fill="url(#w30)" d="M1348.6 277.6L2215 778L2200 802z"/><path fill="url(#w31)" d="M1348.6 277.6L2206 793L2191 816z"/><path fill="url(#w32)" d="M1348.6 277.6L2197 807L2182 831z"/><path fill="url(#w33)" d="M1348.6 277.6L2187 822L2172 845z"/><path fill="url(#w34)" d="M1348.6 277.6L2178 837L2162 860z"/><path fill="url(#w35)" d="M1348.6 277.6L2168 851L2151 874z"/><path fill="url(#w36)" d="M1348.6 277.6L2158 865L2141 888z"/><path fill="url(#w37)" d="M1348.6 277.6L2147 879L2130 901z"/><path fill="url(#w38)" d="M1348.6 277.6L2137 893L2119 915z"/><path fill="url(#w39)" d="M1348.6 277.6L2126 907L2108 928z"/><path fill="url(#w40)" d="M1348.6 277.6L2115 920L2096 941z"/><path fill="url(#w41)" d="M1348.6 277.6L2103 934L2085 954z"/><path fill="url(#w42)" d="M1348.6 277.6L2092 947L2073 967z"/><path fill="url(#w43)" d="M1348.6 277.6L2080 960L2061 980z"/><path fill="url(#w44)" d="M1348.6 277.6L2068 972L2048 992z"/><path fill="url(#w45)" d="M1348.6 277.6L2056 985L2036 1004z"/><path fill="url(#w46)" d="M1348.6 277.6L2043 997L2023 1016z"/><path fill="url(#w47)" d="M1348.6 277.6L2031 1009L2010 1028z"/><path fill="url(#w48)" d="M1348.6 277.6L2018 1021L1997 1039z"/><path fill="url(#w49)" d="M1348.6 277.6L2005 1032L1983 1050z"/><path fill="url(#w50)" d="M1348.6 277.6L1991 1044L1970 1061z"/><path fill="url(#w51)" d="M1348.6 277.6L1978 1055L1956 1072z"/><path fill="url(#w52)" d="M1348.6 277.6L1964 1066L1942 1082z"/><path fill="url(#w53)" d="M1348.6 277.6L1950 1076L1928 1093z"/><path fill="url(#w54)" d="M1348.6 277.6L1936 1087L1914 1103z"/><path fill="url(#w55)" d="M1348.6 277.6L1922 1097L1899 1112z"/><path fill="url(#w56)" d="M1348.6 277.6L1908 1107L1884 1122z"/><path fill="url(#w57)" d="M1348.6 277.6L1893 1116L1870 1131z"/><path fill="url(#w58)" d="M1348.6 277.6L1879 1126L1855 1140z"/><path fill="url(#w59)" d="M1348.6 277.6L1864 1135L1840 1149z"/><path fill="url(#w60)" d="M1348.6 277.6L1849 1144L1824 1157z"/><path fill="url(#w61)" d="M1348.6 277.6L1833 1152L1809 1165z"/><path fill="url(#w62)" d="M1348.6 277.6L1818 1161L1793 1173z"/><path fill="url(#w63)" d="M1348.6 277.6L1803 1169L1778 1181z"/><path fill="url(#w64)" d="M1348.6 277.6L1787 1176L1762 1188z"/><path fill="url(#w65)" d="M1348.6 277.6L1771 1184L1746 1195z"/><path fill="url(#w66)" d="M1348.6 277.6L1755 1191L1730 1202z"/><path fill="url(#w67)" d="M1348.6 277.6L1739 1198L1713 1209z"/><path fill="url(#w68)" d="M1348.6 277.6L1723 1205L1697 1215z"/><path fill="url(#w69)" d="M1348.6 277.6L1707 1211L1681 1221z"/><path fill="url(#w70)" d="M1348.6 277.6L1691 1217L1664 1226z"/><path fill="url(#w71)" d="M1348.6 277.6L1674 1223L1648 1232z"/><path fill="url(#w72)" d="M1348.6 277.6L1658 1229L1631 1237z"/><path fill="url(#w73)" d="M1348.6 277.6L1641 1234L1614 1242z"/><path fill="url(#w74)" d="M1348.6 277.6L1624 1239L1597 1246z"/><path fill="url(#w75)" d="M1348.6 277.6L1607 1243L1580 1250z"/><path fill="url(#w76)" d="M1348.6 277.6L1591 1248L1563 1254z"/><path fill="url(#w77)" d="M1348.6 277.6L1574 1252L1546 1258z"/><path fill="url(#w78)" d="M1348.6 277.6L1557 1256L1529 1261z"/><path fill="url(#w79)" d="M1348.6 277.6L1539 1259L1512 1264z"/><path fill="url(#w80)" d="M1348.6 277.6L1522 1262L1495 1267z"/><path fill="url(#w81)" d="M1348.6 277.6L1505 1265L1477 1269z"/><path fill="url(#w82)" d="M1348.6 277.6L1488 1268L1460 1271z"/><path fill="url(#w83)" d="M1348.6 277.6L1470 1270L1443 1273z"/><path fill="url(#w84)" d="M1348.6 277.6L1453 1272L1425 1275z"/><path fill="url(#w85)" d="M1348.6 277.6L1436 1274L1408 1276z"/><path fill="url(#w86)" d="M1348.6 277.6L1418 1275L1390 1277z"/><path fill="url(#w87)" d="M1348.6 277.6L1401 1276L1373 1277z"/><path fill="url(#w88)" d="M1348.6 277.6L1384 1277L1356 1278z"/><path fill="url(#w89)" d="M1348.6 277.6L1366 1277L1338 1278z"/><path fill="url(#w90)" d="M1348.6 277.6L1349 1278L1321 1277z"/><path fill="url(#w91)" d="M1348.6 277.6L1331 1277L1303 1277z"/><path fill="url(#w92)" d="M1348.6 277.6L1314 1277L1286 1276z"/><path fill="url(#w93)" d="M1348.6 277.6L1296 1276L1268 1274z"/><path fill="url(#w94)" d="M1348.6 277.6L1279 1275L1251 1273z"/><path fill="url(#w95)" d="M1348.6 277.6L1261 1274L1234 1271z"/><path fill="url(#w96)" d="M1348.6 277.6L1244 1272L1216 1269z"/><path fill="url(#w97)" d="M1348.6 277.6L1227 1270L1199 1266z"/><path fill="url(#w98)" d="M1348.6 277.6L1209 1268L1182 1264z"/><path fill="url(#w99)" d="M1348.6 277.6L1192 1265L1165 1261z"/><path fill="url(#w100)" d="M1348.6 277.6L1175 1262L1148 1257z"/><path fill="url(#w101)" d="M1348.6 277.6L1158 1259L1130 1253z"/><path fill="url(#w102)" d="M1348.6 277.6L1141 1256L1113 1250z"/><path fill="url(#w103)" d="M1348.6 277.6L1124 1252L1097 1245z"/><path fill="url(#w104)" d="M1348.6 277.6L1107 1248L1080 1241z"/><path fill="url(#w105)" d="M1348.6 277.6L1090 1243L1063 1236z"/><path fill="url(#w106)" d="M1348.6 277.6L1073 1239L1046 1231z"/><path fill="url(#w107)" d="M1348.6 277.6L1056 1234L1030 1225z"/><path fill="url(#w108)" d="M1348.6 277.6L1040 1229L1013 1220z"/><path fill="url(#w109)" d="M1348.6 277.6L1023 1223L997 1214z"/><path fill="url(#w110)" d="M1348.6 277.6L1007 1217L980 1207z"/><path fill="url(#w111)" d="M1348.6 277.6L990 1211L964 1201z"/><path fill="url(#w112)" d="M1348.6 277.6L974 1205L948 1194z"/><path fill="url(#w113)" d="M1348.6 277.6L958 1198L932 1187z"/><path fill="url(#w114)" d="M1348.6 277.6L942 1191L917 1179z"/><path fill="url(#w115)" d="M1348.6 277.6L926 1184L901 1172z"/><path fill="url(#w116)" d="M1348.6 277.6L910 1176L885 1164z"/><path fill="url(#w117)" d="M1348.6 277.6L895 1169L870 1156z"/><path fill="url(#w118)" d="M1348.6 277.6L879 1161L855 1147z"/><path fill="url(#w119)" d="M1348.6 277.6L864 1152L840 1138z"/><path fill="url(#w120)" d="M1348.6 277.6L849 1144L825 1129z"/><path fill="url(#w121)" d="M1348.6 277.6L834 1135L810 1120z"/><path fill="url(#w122)" d="M1348.6 277.6L819 1126L795 1110z"/><path fill="url(#w123)" d="M1348.6 277.6L804 1116L781 1101z"/><path fill="url(#w124)" d="M1348.6 277.6L789 1107L766 1091z"/><path fill="url(#w125)" d="M1348.6 277.6L775 1097L752 1080z"/><path fill="url(#w126)" d="M1348.6 277.6L761 1087L738 1070z"/><path fill="url(#w127)" d="M1348.6 277.6L747 1076L725 1059z"/><path fill="url(#w128)" d="M1348.6 277.6L733 1066L711 1048z"/><path fill="url(#w129)" d="M1348.6 277.6L719 1055L698 1037z"/><path fill="url(#w130)" d="M1348.6 277.6L706 1044L685 1025z"/><path fill="url(#w131)" d="M1348.6 277.6L693 1032L672 1014z"/><path fill="url(#w132)" d="M1348.6 277.6L679 1021L659 1002z"/><path fill="url(#w133)" d="M1348.6 277.6L667 1009L646 990z"/><path fill="url(#w134)" d="M1348.6 277.6L654 997L634 977z"/><path fill="url(#w135)" d="M1348.6 277.6L642 985L622 965z"/><path fill="url(#w136)" d="M1348.6 277.6L629 972L610 952z"/><path fill="url(#w137)" d="M1348.6 277.6L617 960L599 939z"/><path fill="url(#w138)" d="M1348.6 277.6L605 947L587 926z"/><path fill="url(#w139)" d="M1348.6 277.6L594 934L576 912z"/><path fill="url(#w140)" d="M1348.6 277.6L583 920L565 899z"/><path fill="url(#w141)" d="M1348.6 277.6L571 907L554 885z"/><path fill="url(#w142)" d="M1348.6 277.6L561 893L544 871z"/><path fill="url(#w143)" d="M1348.6 277.6L550 879L533 857z"/><path fill="url(#w144)" d="M1348.6 277.6L540 865L523 843z"/><path fill="url(#w145)" d="M1348.6 277.6L529 851L514 828z"/><path fill="url(#w146)" d="M1348.6 277.6L520 837L504 813z"/><path fill="url(#w147)" d="M1348.6 277.6L510 822L495 799z"/><path fill="url(#w148)" d="M1348.6 277.6L501 807L486 784z"/><path fill="url(#w149)" d="M1348.6 277.6L491 793L477 768z"/><path fill="url(#w150)" d="M1348.6 277.6L483 778L469 753z"/><path fill="url(#w151)" d="M1348.6 277.6L474 762L461 738z"/><path fill="url(#w152)" d="M1348.6 277.6L466 747L453 722z"/><path fill="url(#w153)" d="M1348.6 277.6L458 732L445 707z"/><path fill="url(#w154)" d="M1348.6 277.6L450 716L438 691z"/><path fill="url(#w155)" d="M1348.6 277.6L442 700L431 675z"/><path fill="url(#w156)" d="M1348.6 277.6L435 684L424 659z"/><path fill="url(#w157)" d="M1348.6 277.6L428 668L418 642z"/><path fill="url(#w158)" d="M1348.6 277.6L421 652L411 626z"/><path fill="url(#w159)" d="M1348.6 277.6L415 636L405 610z"/><path fill="url(#w160)" d="M1348.6 277.6L409 620L400 593z"/><path fill="url(#w161)" d="M1348.6 277.6L403 603L394 577z"/><path fill="url(#w162)" d="M1348.6 277.6L398 587L389 560z"/><path fill="url(#w163)" d="M1348.6 277.6L392 570L385 543z"/><path fill="url(#w164)" d="M1348.6 277.6L387 553L380 526z"/><path fill="url(#w165)" d="M1348.6 277.6L383 536L376 509z"/><path fill="url(#w166)" d="M1348.6 277.6L378 519L372 492z"/><path fill="url(#w167)" d="M1348.6 277.6L374 503L368 475z"/><path fill="url(#w168)" d="M1348.6 277.6L370 485L365 458z"/><path fill="url(#w169)" d="M1348.6 277.6L367 468L362 441z"/><path fill="url(#w170)" d="M1348.6 277.6L364 451L359 424z"/><path fill="url(#w171)" d="M1348.6 277.6L361 434L357 406z"/><path fill="url(#w172)" d="M1348.6 277.6L358 417L355 389z"/><path fill="url(#w173)" d="M1348.6 277.6L356 399L353 372z"/><path fill="url(#w174)" d="M1348.6 277.6L354 382L352 354z"/><path fill="url(#w175)" d="M1348.6 277.6L352 365L350 337z"/><path fill="url(#w176)" d="M1348.6 277.6L351 347L349 319z"/><path fill="url(#w177)" d="M1348.6 277.6L350 330L349 302z"/><path fill="url(#w178)" d="M1348.6 277.6L349 312L349 285z"/><path fill="url(#w179)" d="M1348.6 277.6L349 295L349 267z"/><path fill="url(#w180)" d="M1348.6 277.6L349 278L349 250z"/><path fill="url(#w181)" d="M1348.6 277.6L349 260L350 232z"/><path fill="url(#w182)" d="M1348.6 277.6L349 243L351 215z"/><path fill="url(#w183)" d="M1348.6 277.6L350 225L352 197z"/><path fill="url(#w184)" d="M1348.6 277.6L351 208L353 180z"/><path fill="url(#w185)" d="M1348.6 277.6L352 190L355 163z"/><path fill="url(#w186)" d="M1348.6 277.6L354 173L357 145z"/><path fill="url(#w187)" d="M1348.6 277.6L356 156L360 128z"/><path fill="url(#w188)" d="M1348.6 277.6L358 138L363 111z"/><path fill="url(#w189)" d="M1348.6 277.6L361 121L366 94z"/><path fill="url(#w190)" d="M1348.6 277.6L364 104L369 76z"/><path fill="url(#w191)" d="M1348.6 277.6L367 87L373 59z"/><path fill="url(#w192)" d="M1348.6 277.6L370 70L377 42z"/><path fill="url(#w193)" d="M1348.6 277.6L374 53L381 25z"/><path fill="url(#w194)" d="M1348.6 277.6L378 36L385 9z"/><path fill="url(#w195)" d="M1348.6 277.6L383 19L390 -8z"/><path fill="url(#w196)" d="M1348.6 277.6L387 2L395 -25z"/><path fill="url(#w197)" d="M1348.6 277.6L392 -15L401 -41z"/><path fill="url(#w198)" d="M1348.6 277.6L398 -31L407 -58z"/><path fill="url(#w199)" d="M1348.6 277.6L403 -48L413 -74z"/><path fill="url(#w200)" d="M1348.6 277.6L409 -64L419 -91z"/><path fill="url(#w201)" d="M1348.6 277.6L415 -81L425 -107z"/><path fill="url(#w202)" d="M1348.6 277.6L421 -97L432 -123z"/><path fill="url(#w203)" d="M1348.6 277.6L428 -113L439 -139z"/><path fill="url(#w204)" d="M1348.6 277.6L435 -129L447 -155z"/><path fill="url(#w205)" d="M1348.6 277.6L442 -145L454 -170z"/><path fill="url(#w206)" d="M1348.6 277.6L450 -161L462 -186z"/><path fill="url(#w207)" d="M1348.6 277.6L458 -176L471 -201z"/><path fill="url(#w208)" d="M1348.6 277.6L466 -192L479 -216z"/><path fill="url(#w209)" d="M1348.6 277.6L474 -207L488 -231z"/><path fill="url(#w210)" d="M1348.6 277.6L483 -222L497 -246z"/><path fill="url(#w211)" d="M1348.6 277.6L491 -237L506 -261z"/><path fill="url(#w212)" d="M1348.6 277.6L501 -252L516 -276z"/><path fill="url(#w213)" d="M1348.6 277.6L510 -267L525 -290z"/><path fill="url(#w214)" d="M1348.6 277.6L520 -282L536 -305z"/><path fill="url(#w215)" d="M1348.6 277.6L529 -296L546 -319z"/><path fill="url(#w216)" d="M1348.6 277.6L540 -310L556 -333z"/><path fill="url(#w217)" d="M1348.6 277.6L550 -324L567 -346z"/><path fill="url(#w218)" d="M1348.6 277.6L561 -338L578 -360z"/><path fill="url(#w219)" d="M1348.6 277.6L571 -352L589 -373z"/><path fill="url(#w220)" d="M1348.6 277.6L583 -365L601 -386z"/><path fill="url(#w221)" d="M1348.6 277.6L594 -378L613 -399z"/><path fill="url(#w222)" d="M1348.6 277.6L605 -392L624 -412z"/><path fill="url(#w223)" d="M1348.6 277.6L617 -404L637 -425z"/><path fill="url(#w224)" d="M1348.6 277.6L629 -417L649 -437z"/><path fill="url(#w225)" d="M1348.6 277.6L642 -430L662 -449z"/><path fill="url(#w226)" d="M1348.6 277.6L654 -442L674 -461z"/><path fill="url(#w227)" d="M1348.6 277.6L667 -454L687 -473z"/><path fill="url(#w228)" d="M1348.6 277.6L679 -466L700 -484z"/><path fill="url(#w229)" d="M1348.6 277.6L693 -477L714 -495z"/><path fill="url(#w230)" d="M1348.6 277.6L706 -488L727 -506z"/><path fill="url(#w231)" d="M1348.6 277.6L719 -500L741 -517z"/><path fill="url(#w232)" d="M1348.6 277.6L733 -510L755 -527z"/><path fill="url(#w233)" d="M1348.6 277.6L747 -521L769 -538z"/><path fill="url(#w234)" d="M1348.6 277.6L761 -531L784 -548z"/><path fill="url(#w235)" d="M1348.6 277.6L775 -542L798 -557z"/><path fill="url(#w236)" d="M1348.6 277.6L789 -551L813 -567z"/><path fill="url(#w237)" d="M1348.6 277.6L804 -561L828 -576z"/><path fill="url(#w238)" d="M1348.6 277.6L819 -570L843 -585z"/><path fill="url(#w239)" d="M1348.6 277.6L834 -580L858 -594z"/><path fill="url(#w240)" d="M1348.6 277.6L849 -588L873 -602z"/><path fill="url(#w241)" d="M1348.6 277.6L864 -597L888 -610z"/><path fill="url(#w242)" d="M1348.6 277.6L879 -605L904 -618z"/><path fill="url(#w243)" d="M1348.6 277.6L895 -613L920 -626z"/><path fill="url(#w244)" d="M1348.6 277.6L910 -621L936 -633z"/><path fill="url(#w245)" d="M1348.6 277.6L926 -629L951 -640z"/><path fill="url(#w246)" d="M1348.6 277.6L942 -636L968 -647z"/><path fill="url(#w247)" d="M1348.6 277.6L958 -643L984 -653z"/><path fill="url(#w248)" d="M1348.6 277.6L974 -650L1000 -660z"/><path fill="url(#w249)" d="M1348.6 277.6L990 -656L1016 -666z"/><path fill="url(#w250)" d="M1348.6 277.6L1007 -662L1033 -671z"/><path fill="url(#w251)" d="M1348.6 277.6L1023 -668L1050 -677z"/><path fill="url(#w252)" d="M1348.6 277.6L1040 -673L1066 -682z"/><path fill="url(#w253)" d="M1348.6 277.6L1056 -679L1083 -687z"/><path fill="url(#w254)" d="M1348.6 277.6L1073 -684L1100 -691z"/><path fill="url(#w255)" d="M1348.6 277.6L1090 -688L1117 -695z"/><path fill="url(#w256)" d="M1348.6 277.6L1107 -693L1134 -699z"/><path fill="url(#w257)" d="M1348.6 277.6L1124 -697L1151 -703z"/><path fill="url(#w258)" d="M1348.6 277.6L1141 -701L1168 -706z"/><path fill="url(#w259)" d="M1348.6 277.6L1158 -704L1185 -709z"/><path fill="url(#w260)" d="M1348.6 277.6L1175 -707L1203 -712z"/><path fill="url(#w261)" d="M1348.6 277.6L1192 -710L1220 -714z"/><path fill="url(#w262)" d="M1348.6 277.6L1209 -713L1237 -716z"/><path fill="url(#w263)" d="M1348.6 277.6L1227 -715L1255 -718z"/><path fill="url(#w264)" d="M1348.6 277.6L1244 -717L1272 -719z"/><path fill="url(#w265)" d="M1348.6 277.6L1261 -719L1289 -721z"/><path fill="url(#w266)" d="M1348.6 277.6L1279 -720L1307 -722z"/><path fill="url(#w267)" d="M1348.6 277.6L1296 -721L1324 -722z"/><path fill="url(#w268)" d="M1348.6 277.6L1314 -722L1342 -722z"/><path fill="url(#w269)" d="M1348.6 277.6L1331 -722L1359 -722z"/><path fill="url(#w270)" d="M1348.6 277.6L1349 -722L1377 -722z"/><path fill="url(#w271)" d="M1348.6 277.6L1366 -722L1394 -721z"/><path fill="url(#w272)" d="M1348.6 277.6L1384 -722L1411 -720z"/><path fill="url(#w273)" d="M1348.6 277.6L1401 -721L1429 -719z"/><path fill="url(#w274)" d="M1348.6 277.6L1418 -720L1446 -718z"/><path fill="url(#w275)" d="M1348.6 277.6L1436 -719L1464 -716z"/><path fill="url(#w276)" d="M1348.6 277.6L1453 -717L1481 -714z"/><path fill="url(#w277)" d="M1348.6 277.6L1470 -715L1498 -711z"/><path fill="url(#w278)" d="M1348.6 277.6L1488 -713L1515 -708z"/><path fill="url(#w279)" d="M1348.6 277.6L1505 -710L1533 -705z"/><path fill="url(#w280)" d="M1348.6 277.6L1522 -707L1550 -702z"/><path fill="url(#w281)" d="M1348.6 277.6L1539 -704L1567 -698z"/><path fill="url(#w282)" d="M1348.6 277.6L1557 -701L1584 -694z"/><path fill="url(#w283)" d="M1348.6 277.6L1574 -697L1601 -690z"/><path fill="url(#w284)" d="M1348.6 277.6L1591 -693L1618 -686z"/><path fill="url(#w285)" d="M1348.6 277.6L1607 -688L1634 -681z"/><path fill="url(#w286)" d="M1348.6 277.6L1624 -684L1651 -676z"/><path fill="url(#w287)" d="M1348.6 277.6L1641 -679L1668 -670z"/><path fill="url(#w288)" d="M1348.6 277.6L1658 -673L1684 -664z"/><path fill="url(#w289)" d="M1348.6 277.6L1674 -668L1700 -658z"/><path fill="url(#w290)" d="M1348.6 277.6L1691 -662L1717 -652z"/><path fill="url(#w291)" d="M1348.6 277.6L1707 -656L1733 -646z"/><path fill="url(#w292)" d="M1348.6 277.6L1723 -650L1749 -639z"/><path fill="url(#w293)" d="M1348.6 277.6L1739 -643L1765 -632z"/><path fill="url(#w294)" d="M1348.6 277.6L1755 -636L1781 -624z"/><path fill="url(#w295)" d="M1348.6 277.6L1771 -629L1796 -617z"/><path fill="url(#w296)" d="M1348.6 277.6L1787 -621L1812 -609z"/><path fill="url(#w297)" d="M1348.6 277.6L1803 -613L1827 -600z"/><path fill="url(#w298)" d="M1348.6 277.6L1818 -605L1843 -592z"/><path fill="url(#w299)" d="M1348.6 277.6L1833 -597L1858 -583z"/><path fill="url(#w300)" d="M1348.6 277.6L1849 -588L1873 -574z"/><path fill="url(#w301)" d="M1348.6 277.6L1864 -580L1887 -565z"/><path fill="url(#w302)" d="M1348.6 277.6L1879 -570L1902 -555z"/><path fill="url(#w303)" d="M1348.6 277.6L1893 -561L1916 -546z"/><path fill="url(#w304)" d="M1348.6 277.6L1908 -551L1931 -536z"/><path fill="url(#w305)" d="M1348.6 277.6L1922 -542L1945 -525z"/><path fill="url(#w306)" d="M1348.6 277.6L1936 -531L1959 -515z"/><path fill="url(#w307)" d="M1348.6 277.6L1950 -521L1972 -504z"/><path fill="url(#w308)" d="M1348.6 277.6L1964 -510L1986 -493z"/><path fill="url(#w309)" d="M1348.6 277.6L1978 -500L1999 -482z"/><path fill="url(#w310)" d="M1348.6 277.6L1991 -488L2013 -470z"/><path fill="url(#w311)" d="M1348.6 277.6L2005 -477L2025 -459z"/><path fill="url(#w312)" d="M1348.6 277.6L2018 -466L2038 -447z"/><path fill="url(#w313)" d="M1348.6 277.6L2031 -454L2051 -434z"/><path fill="url(#w314)" d="M1348.6 277.6L2043 -442L2063 -422z"/><path fill="url(#w315)" d="M1348.6 277.6L2056 -430L2075 -410z"/><path fill="url(#w316)" d="M1348.6 277.6L2068 -417L2087 -397z"/><path fill="url(#w317)" d="M1348.6 277.6L2080 -404L2099 -384z"/><path fill="url(#w318)" d="M1348.6 277.6L2092 -392L2110 -371z"/><path fill="url(#w319)" d="M1348.6 277.6L2103 -378L2121 -357z"/><path fill="url(#w320)" d="M1348.6 277.6L2115 -365L2132 -344z"/><path fill="url(#w321)" d="M1348.6 277.6L2126 -352L2143 -330z"/><path fill="url(#w322)" d="M1348.6 277.6L2137 -338L2154 -316z"/><path fill="url(#w323)" d="M1348.6 277.6L2147 -324L2164 -302z"/><path fill="url(#w324)" d="M1348.6 277.6L2158 -310L2174 -287z"/><path fill="url(#w325)" d="M1348.6 277.6L2168 -296L2183 -273z"/><path fill="url(#w326)" d="M1348.6 277.6L2178 -282L2193 -258z"/><path fill="url(#w327)" d="M1348.6 277.6L2187 -267L2202 -243z"/><path fill="url(#w328)" d="M1348.6 277.6L2197 -252L2211 -228z"/><path fill="url(#w329)" d="M1348.6 277.6L2206 -237L2220 -213z"/><path fill="url(#w330)" d="M1348.6 277.6L2215 -222L2228 -198z"/><path fill="url(#w331)" d="M1348.6 277.6L2223 -207L2236 -183z"/><path fill="url(#w332)" d="M1348.6 277.6L2232 -192L2244 -167z"/><path fill="url(#w333)" d="M1348.6 277.6L2240 -176L2252 -151z"/><path fill="url(#w334)" d="M1348.6 277.6L2247 -161L2259 -136z"/><path fill="url(#w335)" d="M1348.6 277.6L2255 -145L2266 -120z"/><path fill="url(#w336)" d="M1348.6 277.6L2262 -129L2273 -104z"/><path fill="url(#w337)" d="M1348.6 277.6L2269 -113L2280 -87z"/><path fill="url(#w338)" d="M1348.6 277.6L2276 -97L2286 -71z"/><path fill="url(#w339)" d="M1348.6 277.6L2282 -81L2292 -55z"/><path fill="url(#w340)" d="M1348.6 277.6L2288 -64L2297 -38z"/><path fill="url(#w341)" d="M1348.6 277.6L2294 -48L2303 -21z"/><path fill="url(#w342)" d="M1348.6 277.6L2300 -31L2308 -5z"/><path fill="url(#w343)" d="M1348.6 277.6L2305 -15L2313 12z"/><path fill="url(#w344)" d="M1348.6 277.6L2310 2L2317 29z"/><path fill="url(#w345)" d="M1348.6 277.6L2315 19L2321 46z"/><path fill="url(#w346)" d="M1348.6 277.6L2319 36L2325 63z"/><path fill="url(#w347)" d="M1348.6 277.6L2323 53L2329 80z"/><path fill="url(#w348)" d="M1348.6 277.6L2327 70L2332 97z"/><path fill="url(#w349)" d="M1348.6 277.6L2330 87L2335 114z"/><path fill="url(#w350)" d="M1348.6 277.6L2333 104L2338 131z"/><path fill="url(#w351)" d="M1348.6 277.6L2336 121L2340 149z"/><path fill="url(#w352)" d="M1348.6 277.6L2339 138L2342 166z"/><path fill="url(#w353)" d="M1348.6 277.6L2341 156L2344 183z"/><path fill="url(#w354)" d="M1348.6 277.6L2343 173L2346 201z"/><path fill="url(#w355)" d="M1348.6 277.6L2345 190L2347 218z"/><path fill="url(#w356)" d="M1348.6 277.6L2346 208L2348 236z"/><path fill="url(#w357)" d="M1348.6 277.6L2347 225L2348 253z"/><path fill="url(#w358)" d="M1348.6 277.6L2348 243L2349 271z"/><path fill="url(#w359)" d="M1348.6 277.6L2348 260L2349 288z"/></g>
<path fill="#000" fill-opacity=".41" fill-rule="evenodd" d="M1100 100H1850V860H1100zM1657.7 210.7L1259.7 162.2L1321.2 657.7z"/></g>
<rect x="1106" y="114" width="736" height="1.6" fill="#9a9a9a"/>
<rect x="1106" y="114" width="1.7" height="744" fill="#9a9a9a"/>
<rect x="1840.6" y="114" width="1.7" height="738" fill="#9a9a9a"/>
<rect x="1100" y="850.6" width="741.8" height="1.9" fill="#9a9a9a"/>
<rect x="1100" y="850.3" width="6" height="1.4" fill="#d0d0d0"/>
<text x="1099.5" y="858.9" font-size="15.8" fill="#d6d6d6" text-anchor="end">0</text>
<rect x="1106" y="852" width="1.8" height="6" fill="#d0d0d0"/>
<text x="1106.9" y="873.6" font-size="15.8" fill="#d6d6d6" text-anchor="middle">0</text>
<rect x="1100" y="789.075" width="6" height="1.4" fill="#d0d0d0"/>
<text x="1099.5" y="797.5" font-size="15.8" fill="#d6d6d6" text-anchor="end">0,05</text>
<rect x="1167.1" y="852" width="1.8" height="6" fill="#d0d0d0"/>
<text x="1168.0" y="873.6" font-size="15.8" fill="#d6d6d6" text-anchor="middle">0,05</text>
<rect x="1100" y="727.85" width="6" height="1.4" fill="#d0d0d0"/>
<text x="1099.5" y="736.0" font-size="15.8" fill="#d6d6d6" text-anchor="end">0,1</text>
<rect x="1228.2" y="852" width="1.8" height="6" fill="#d0d0d0"/>
<text x="1229.1" y="873.6" font-size="15.8" fill="#d6d6d6" text-anchor="middle">0,1</text>
<rect x="1100" y="666.625" width="6" height="1.4" fill="#d0d0d0"/>
<text x="1099.5" y="674.6" font-size="15.8" fill="#d6d6d6" text-anchor="end">0,15</text>
<rect x="1289.3" y="852" width="1.8" height="6" fill="#d0d0d0"/>
<text x="1290.2" y="873.6" font-size="15.8" fill="#d6d6d6" text-anchor="middle">0,15</text>
<rect x="1100" y="605.4" width="6" height="1.4" fill="#d0d0d0"/>
<text x="1099.5" y="613.1" font-size="15.8" fill="#d6d6d6" text-anchor="end">0,2</text>
<rect x="1350.4" y="852" width="1.8" height="6" fill="#d0d0d0"/>
<text x="1351.3" y="873.6" font-size="15.8" fill="#d6d6d6" text-anchor="middle">0,2</text>
<rect x="1100" y="544.175" width="6" height="1.4" fill="#d0d0d0"/>
<text x="1099.5" y="551.6" font-size="15.8" fill="#d6d6d6" text-anchor="end">0,25</text>
<rect x="1411.5" y="852" width="1.8" height="6" fill="#d0d0d0"/>
<text x="1412.4" y="873.6" font-size="15.8" fill="#d6d6d6" text-anchor="middle">0,25</text>
<rect x="1100" y="482.95" width="6" height="1.4" fill="#d0d0d0"/>
<text x="1099.5" y="490.2" font-size="15.8" fill="#d6d6d6" text-anchor="end">0,3</text>
<rect x="1472.6" y="852" width="1.8" height="6" fill="#d0d0d0"/>
<text x="1473.5" y="873.6" font-size="15.8" fill="#d6d6d6" text-anchor="middle">0,3</text>
<rect x="1100" y="421.725" width="6" height="1.4" fill="#d0d0d0"/>
<text x="1099.5" y="428.7" font-size="15.8" fill="#d6d6d6" text-anchor="end">0,35</text>
<rect x="1533.7" y="852" width="1.8" height="6" fill="#d0d0d0"/>
<text x="1534.6" y="873.6" font-size="15.8" fill="#d6d6d6" text-anchor="middle">0,35</text>
<rect x="1100" y="360.5" width="6" height="1.4" fill="#d0d0d0"/>
<text x="1099.5" y="367.2" font-size="15.8" fill="#d6d6d6" text-anchor="end">0,4</text>
<rect x="1594.8" y="852" width="1.8" height="6" fill="#d0d0d0"/>
<text x="1595.7" y="873.6" font-size="15.8" fill="#d6d6d6" text-anchor="middle">0,4</text>
<rect x="1100" y="299.275" width="6" height="1.4" fill="#d0d0d0"/>
<text x="1099.5" y="305.8" font-size="15.8" fill="#d6d6d6" text-anchor="end">0,45</text>
<rect x="1655.9" y="852" width="1.8" height="6" fill="#d0d0d0"/>
<text x="1656.8" y="873.6" font-size="15.8" fill="#d6d6d6" text-anchor="middle">0,45</text>
<rect x="1100" y="238.05" width="6" height="1.4" fill="#d0d0d0"/>
<text x="1099.5" y="244.3" font-size="15.8" fill="#d6d6d6" text-anchor="end">0,5</text>
<rect x="1717" y="852" width="1.8" height="6" fill="#d0d0d0"/>
<text x="1717.9" y="873.6" font-size="15.8" fill="#d6d6d6" text-anchor="middle">0,5</text>
<rect x="1100" y="176.825" width="6" height="1.4" fill="#d0d0d0"/>
<text x="1099.5" y="182.8" font-size="15.8" fill="#d6d6d6" text-anchor="end">0,55</text>
<rect x="1778.1" y="852" width="1.8" height="6" fill="#d0d0d0"/>
<text x="1779.0" y="873.6" font-size="15.8" fill="#d6d6d6" text-anchor="middle">0,55</text>
<text x="1455.0" y="108.0" font-size="15.5" fill="#d6d6d6" text-anchor="middle" textLength="91.0" lengthAdjust="spacingAndGlyphs">CIE 1976 u&#x27;v&#x27;</text>
<text x="1836.0" y="838.5" font-size="20" fill="#f4f4f4" text-anchor="end" textLength="252.0" lengthAdjust="spacingAndGlyphs">RGB Triplet: 235, 235, 235</text>
<rect x="4" y="881.6" width="43.5" height="1.4" fill="#1c1c1c"/>
<rect x="54.2" y="881.5" width="46.8" height="1.5" fill="#454545"/>
<rect x="106.3" y="881.5" width="46.8" height="1.5" fill="#454545"/>
<rect x="158.4" y="881.5" width="46.8" height="1.5" fill="#454545"/>
<rect x="210.5" y="881.5" width="46.8" height="1.5" fill="#454545"/>
<rect x="262.6" y="881.5" width="46.8" height="1.5" fill="#454545"/>
<rect x="314.7" y="881.5" width="46.8" height="1.5" fill="#454545"/>
<rect x="366.8" y="881.5" width="46.8" height="1.5" fill="#454545"/>
<rect x="418.9" y="881.5" width="46.8" height="1.5" fill="#454545"/>
<rect x="471" y="881.5" width="46.8" height="1.5" fill="#454545"/>
<rect x="523.1" y="881.5" width="46.8" height="1.5" fill="#454545"/>
<rect x="575.2" y="881.5" width="46.8" height="1.5" fill="#454545"/>
<rect x="627.3" y="881.5" width="46.8" height="1.5" fill="#454545"/>
<rect x="679.4" y="881.5" width="46.8" height="1.5" fill="#454545"/>
<rect x="731.5" y="881.5" width="46.8" height="1.5" fill="#454545"/>
<rect x="783.6" y="881.5" width="46.8" height="1.5" fill="#454545"/>
<rect x="835.7" y="881.5" width="46.8" height="1.5" fill="#454545"/>
<rect x="887.8" y="881.5" width="46.8" height="1.5" fill="#454545"/>
<rect x="939.9" y="881.5" width="46.8" height="1.5" fill="#454545"/>
<rect x="992" y="881.5" width="46.8" height="1.5" fill="#454545"/>
<rect x="1044.1" y="881.5" width="46.8" height="1.5" fill="#454545"/>
<rect x="1096.2" y="881.5" width="46.8" height="1.5" fill="#454545"/>
<rect x="1148.3" y="881.5" width="46.8" height="1.5" fill="#454545"/>
<rect x="1200.4" y="881.5" width="46.8" height="1.5" fill="#454545"/>
<rect x="1252.5" y="881.5" width="46.8" height="1.5" fill="#454545"/>
<rect x="1304.6" y="881.5" width="46.8" height="1.5" fill="#454545"/>
<rect x="1356.7" y="881.5" width="46.8" height="1.5" fill="#454545"/>
<rect x="1408.8" y="881.5" width="46.8" height="1.5" fill="#454545"/>
<rect x="1460.9" y="881.5" width="46.8" height="1.5" fill="#454545"/>
<rect x="1513" y="881.5" width="46.8" height="1.5" fill="#454545"/>
<rect x="1565.1" y="881.5" width="46.8" height="1.5" fill="#454545"/>
<rect x="1617.2" y="881.5" width="46.8" height="1.5" fill="#454545"/>
<rect x="1669.3" y="881.5" width="46.8" height="1.5" fill="#454545"/>
<rect x="1721.4" y="881.5" width="46.8" height="1.5" fill="#454545"/>
<rect x="1773.5" y="881.5" width="46.8" height="1.5" fill="#454545"/>
<rect x="1825.6" y="881.5" width="46.8" height="1.5" fill="#454545"/>
<rect x="1877.7" y="881.5" width="46.8" height="1.5" fill="#454545"/>
<rect x="1929.8" y="881.5" width="46.8" height="1.5" fill="#454545"/>
<g fill="none" stroke="#fff" stroke-width="1.45"><rect x="1253.0" y="152.9" width="14.1" height="14.1"/><rect x="1264.9" y="156.8" width="14.1" height="14.1"/><rect x="1271.0" y="159.8" width="14.1" height="14.1"/><rect x="1273.5" y="162.9" width="14.1" height="14.1"/><rect x="1274.9" y="181.8" width="14.1" height="14.1"/><rect x="1257.0" y="194.8" width="14.1" height="14.1"/><rect x="1284.2" y="193.5" width="14.1" height="14.1"/><rect x="1276.0" y="205.4" width="14.1" height="14.1"/><rect x="1269.0" y="214.8" width="14.1" height="14.1"/><rect x="1289.9" y="234.8" width="14.1" height="14.1"/><rect x="1264.9" y="246.8" width="14.1" height="14.1"/><rect x="1312.8" y="171.9" width="14.1" height="14.1"/><rect x="1323.5" y="171.8" width="14.1" height="14.1"/><rect x="1325.5" y="169.8" width="14.1" height="14.1"/><rect x="1328.5" y="161.8" width="14.1" height="14.1"/><rect x="1336.8" y="162.9" width="14.1" height="14.1"/><rect x="1346.8" y="164.8" width="14.1" height="14.1"/><rect x="1356.8" y="167.3" width="14.1" height="14.1"/><rect x="1369.9" y="166.9" width="14.1" height="14.1"/><rect x="1383.5" y="169.8" width="14.1" height="14.1"/><rect x="1399.2" y="171.0" width="14.1" height="14.1"/><rect x="1408.5" y="171.8" width="14.1" height="14.1"/><rect x="1422.4" y="177.9" width="14.1" height="14.1"/><rect x="1446.0" y="175.4" width="14.1" height="14.1"/><rect x="1436.8" y="181.8" width="14.1" height="14.1"/><rect x="1451.0" y="193.5" width="14.1" height="14.1"/><rect x="1438.5" y="196.8" width="14.1" height="14.1"/><rect x="1464.9" y="200.4" width="14.1" height="14.1"/><rect x="1471.5" y="200.4" width="14.1" height="14.1"/><rect x="1320.5" y="202.9" width="14.1" height="14.1"/><rect x="1351.0" y="203.9" width="14.1" height="14.1"/><rect x="1378.0" y="210.4" width="14.1" height="14.1"/><rect x="1415.5" y="206.8" width="14.1" height="14.1"/><rect x="1433.0" y="207.9" width="14.1" height="14.1"/><rect x="1444.2" y="211.8" width="14.1" height="14.1"/><rect x="1444.9" y="216.0" width="14.1" height="14.1"/><rect x="1389.2" y="221.0" width="14.1" height="14.1"/><rect x="1406.8" y="217.9" width="14.1" height="14.1"/><rect x="1413.0" y="216.8" width="14.1" height="14.1"/><rect x="1419.2" y="217.9" width="14.1" height="14.1"/><rect x="1428.0" y="217.9" width="14.1" height="14.1"/><rect x="1408.5" y="225.4" width="14.1" height="14.1"/><rect x="1386.8" y="236.8" width="14.1" height="14.1"/><rect x="1384.0" y="243.5" width="14.1" height="14.1"/><rect x="1331.8" y="227.9" width="14.1" height="14.1"/><rect x="1323.0" y="240.4" width="14.1" height="14.1"/><rect x="1473.0" y="225.5" width="14.1" height="14.1"/><rect x="1459.2" y="244.4" width="14.1" height="14.1"/><rect x="1477.2" y="184.5" width="14.1" height="14.1"/><rect x="1483.5" y="187.9" width="14.1" height="14.1"/><rect x="1265.5" y="256.8" width="14.1" height="14.1"/><rect x="1284.9" y="256.8" width="14.1" height="14.1"/><rect x="1328.0" y="252.9" width="14.1" height="14.1"/><rect x="1347.4" y="252.3" width="14.1" height="14.1"/><rect x="1363.0" y="252.9" width="14.1" height="14.1"/><rect x="1269.0" y="283.6" width="14.1" height="14.1"/><rect x="1274.9" y="288.6" width="14.1" height="14.1"/><rect x="1271.8" y="305.4" width="14.1" height="14.1"/><rect x="1291.0" y="309.8" width="14.1" height="14.1"/><rect x="1314.5" y="309.8" width="14.1" height="14.1"/><rect x="1314.5" y="314.2" width="14.1" height="14.1"/><rect x="1349.9" y="311.1" width="14.1" height="14.1"/><rect x="1403.0" y="288.9" width="14.1" height="14.1"/><rect x="1273.5" y="325.4" width="14.1" height="14.1"/><rect x="1274.9" y="336.1" width="14.1" height="14.1"/><rect x="1312.0" y="332.9" width="14.1" height="14.1"/><rect x="1338.0" y="341.8" width="14.1" height="14.1"/><rect x="1408.5" y="337.9" width="14.1" height="14.1"/><rect x="1461.0" y="324.8" width="14.1" height="14.1"/><rect x="1509.9" y="183.5" width="14.1" height="14.1"/><rect x="1546.5" y="187.8" width="14.1" height="14.1"/><rect x="1564.0" y="222.9" width="14.1" height="14.1"/><rect x="1582.0" y="224.8" width="14.1" height="14.1"/><rect x="1618.4" y="203.9" width="14.1" height="14.1"/><rect x="1651.0" y="201.0" width="14.1" height="14.1"/><rect x="1648.5" y="202.9" width="14.1" height="14.1"/><rect x="1646.0" y="205.4" width="14.1" height="14.1"/><rect x="1643.5" y="211.4" width="14.1" height="14.1"/><rect x="1568.9" y="241.9" width="14.1" height="14.1"/><rect x="1604.0" y="244.8" width="14.1" height="14.1"/><rect x="1504.0" y="246.8" width="14.1" height="14.1"/><rect x="1505.0" y="288.9" width="14.1" height="14.1"/><rect x="1513.0" y="297.9" width="14.1" height="14.1"/><rect x="1560.0" y="297.9" width="14.1" height="14.1"/><rect x="1359.2" y="359.9" width="14.1" height="14.1"/><rect x="1278.8" y="372.9" width="14.1" height="14.1"/><rect x="1381.8" y="375.9" width="14.1" height="14.1"/><rect x="1428.8" y="382.9" width="14.1" height="14.1"/><rect x="1470.0" y="409.9" width="14.1" height="14.1"/><rect x="1473.0" y="437.9" width="14.1" height="14.1"/><rect x="1287.0" y="426.8" width="14.1" height="14.1"/><rect x="1314.5" y="425.4" width="14.1" height="14.1"/><rect x="1313.0" y="432.9" width="14.1" height="14.1"/><rect x="1316.0" y="510.9" width="14.1" height="14.1"/><rect x="1303.0" y="548.0" width="14.1" height="14.1"/><rect x="1314.2" y="649.0" width="14.1" height="14.1"/></g><rect x="1341.8" y="269.7" width="12.6" height="12.6" fill="none" stroke="#000" stroke-width="2"/><g stroke="#000" stroke-width="1.2"><circle cx="1260.0" cy="160.0" r="4.55" fill="#00ff00"/><circle cx="1271.9" cy="163.8" r="4.55" fill="#3f8f2f"/><circle cx="1277.5" cy="166.5" r="4.55" fill="#4fa03f"/><circle cx="1281.3" cy="170.0" r="4.55" fill="#4a9a3a"/><circle cx="1280.6" cy="188.1" r="4.55" fill="#4f8f4f"/><circle cx="1266.0" cy="201.0" r="4.55" fill="#0f8f6f"/><circle cx="1291.0" cy="199.4" r="4.55" fill="#5f9f5f"/><circle cx="1281.9" cy="210.0" r="4.55" fill="#1f4f2f"/><circle cx="1276.3" cy="220.0" r="4.55" fill="#3f9f7f"/><circle cx="1296.5" cy="240.6" r="4.55" fill="#6fbf9f"/><circle cx="1271.9" cy="253.1" r="4.55" fill="#0f8f8f"/><circle cx="1318.5" cy="179.0" r="4.55" fill="#7f8f2f"/><circle cx="1328.8" cy="178.8" r="4.55" fill="#6f8f2f"/><circle cx="1332.1" cy="176.3" r="4.55" fill="#5f6f1f"/><circle cx="1335.0" cy="168.1" r="4.55" fill="#a0a000"/><circle cx="1343.8" cy="170.0" r="4.55" fill="#b0b000"/><circle cx="1353.8" cy="171.3" r="4.55" fill="#ffff00"/><circle cx="1365.0" cy="174.4" r="4.55" fill="#9f9f1f"/><circle cx="1376.3" cy="174.4" r="4.55" fill="#c8b818"/><circle cx="1390.6" cy="177.5" r="4.55" fill="#e8c020"/><circle cx="1406.9" cy="176.3" r="4.55" fill="#b89018"/><circle cx="1406.9" cy="179.0" r="4.55" fill="#c09818"/><circle cx="1416.0" cy="179.0" r="4.55" fill="#ffc000"/><circle cx="1430.0" cy="184.8" r="4.55" fill="#e8a020"/><circle cx="1451.9" cy="182.5" r="4.55" fill="#e8a000"/><circle cx="1456.9" cy="183.1" r="4.55" fill="#ffa800"/><circle cx="1446.3" cy="188.8" r="4.55" fill="#d08820"/><circle cx="1458.1" cy="199.4" r="4.55" fill="#7f4f2f"/><circle cx="1446.5" cy="203.8" r="4.55" fill="#8f5f3f"/><circle cx="1472.9" cy="207.9" r="4.55" fill="#6f3f2f"/><circle cx="1482.2" cy="207.5" r="4.55" fill="#4f2f1f"/><circle cx="1327.5" cy="210.0" r="4.55" fill="#5f6f4f"/><circle cx="1358.1" cy="211.0" r="4.55" fill="#d0d080"/><circle cx="1383.1" cy="213.8" r="4.55" fill="#3f2f1f"/><circle cx="1423.1" cy="213.1" r="4.55" fill="#c88860"/><circle cx="1443.1" cy="213.8" r="4.55" fill="#d08868"/><circle cx="1451.9" cy="216.9" r="4.55" fill="#d89070"/><circle cx="1451.9" cy="223.1" r="4.55" fill="#f09880"/><circle cx="1395.0" cy="228.8" r="4.55" fill="#f8c0a0"/><circle cx="1411.3" cy="226.9" r="4.55" fill="#c88868"/><circle cx="1415.0" cy="226.3" r="4.55" fill="#d09070"/><circle cx="1420.0" cy="221.3" r="4.55" fill="#d09070"/><circle cx="1421.3" cy="226.3" r="4.55" fill="#d89878"/><circle cx="1425.0" cy="221.3" r="4.55" fill="#d89878"/><circle cx="1431.9" cy="224.4" r="4.55" fill="#d09070"/><circle cx="1436.3" cy="224.4" r="4.55" fill="#d89070"/><circle cx="1415.6" cy="233.1" r="4.55" fill="#7f4f3f"/><circle cx="1397.5" cy="243.8" r="4.55" fill="#e8b090"/><circle cx="1395.0" cy="241.9" r="4.55" fill="#f8c0a8"/><circle cx="1390.3" cy="250.0" r="4.55" fill="#ffc8b8"/><circle cx="1339.0" cy="234.8" r="4.55" fill="#c8d8a8"/><circle cx="1329.0" cy="247.8" r="4.55" fill="#b8d0b0"/><circle cx="1482.7" cy="232.9" r="4.55" fill="#e07870"/><circle cx="1466.9" cy="252.0" r="4.55" fill="#d87880"/><circle cx="1487.5" cy="191.9" r="4.55" fill="#d08830"/><circle cx="1495.0" cy="195.3" r="4.55" fill="#a86828"/><circle cx="1272.8" cy="261.9" r="4.55" fill="#0a5f5f"/><circle cx="1272.8" cy="266.9" r="4.55" fill="#0f9f8f"/><circle cx="1291.0" cy="262.5" r="4.55" fill="#6fbf9f"/><circle cx="1334.8" cy="258.1" r="4.55" fill="#c0d0b0"/><circle cx="1355.0" cy="258.1" r="4.55" fill="#d0d0b8"/><circle cx="1370.0" cy="260.0" r="4.55" fill="#e0c8b8"/><circle cx="1276.0" cy="291.9" r="4.55" fill="#00ffff"/><circle cx="1282.3" cy="295.0" r="4.55" fill="#3fa0a0"/><circle cx="1278.8" cy="311.0" r="4.55" fill="#0f8f9f"/><circle cx="1298.1" cy="316.9" r="4.55" fill="#5f9fbf"/><circle cx="1323.1" cy="313.8" r="4.55" fill="#5f7f9f"/><circle cx="1321.5" cy="321.0" r="4.55" fill="#7f9fbf"/><circle cx="1355.0" cy="318.1" r="4.55" fill="#8f7f9f"/><circle cx="1408.1" cy="296.0" r="4.55" fill="#c880a0"/><circle cx="1281.9" cy="326.9" r="4.55" fill="#0a4f5f"/><circle cx="1283.5" cy="343.1" r="4.55" fill="#0f8faf"/><circle cx="1318.8" cy="341.9" r="4.55" fill="#5f7faf"/><circle cx="1345.0" cy="350.6" r="4.55" fill="#8f7fbf"/><circle cx="1418.5" cy="341.9" r="4.55" fill="#4f2f4f"/><circle cx="1471.0" cy="332.8" r="4.55" fill="#c05f9f"/><circle cx="1519.8" cy="191.9" r="4.55" fill="#e87800"/><circle cx="1559.4" cy="196.3" r="4.55" fill="#ff7000"/><circle cx="1576.9" cy="230.0" r="4.55" fill="#d04858"/><circle cx="1592.8" cy="231.9" r="4.55" fill="#b83850"/><circle cx="1631.3" cy="211.0" r="4.55" fill="#f04030"/><circle cx="1660.0" cy="213.1" r="4.55" fill="#c01028"/><circle cx="1664.0" cy="210.0" r="4.55" fill="#ff0000"/><circle cx="1655.0" cy="220.0" r="4.55" fill="#b80830"/><circle cx="1582.9" cy="246.3" r="4.55" fill="#5f1f2f"/><circle cx="1616.9" cy="251.9" r="4.55" fill="#c02858"/><circle cx="1515.3" cy="255.0" r="4.55" fill="#c85870"/><circle cx="1517.0" cy="297.6" r="4.55" fill="#4f1f2f"/><circle cx="1520.8" cy="307.8" r="4.55" fill="#c0407f"/><circle cx="1568.0" cy="306.0" r="4.55" fill="#a0205f"/><circle cx="1366.8" cy="366.5" r="4.55" fill="#7f5f9f"/><circle cx="1288.0" cy="378.8" r="4.55" fill="#0f8faf"/><circle cx="1388.0" cy="385.8" r="4.55" fill="#5f3f6f"/><circle cx="1434.5" cy="392.5" r="4.55" fill="#4f1f3f"/><circle cx="1477.0" cy="418.0" r="4.55" fill="#7f1f6f"/><circle cx="1481.3" cy="446.3" r="4.55" fill="#ff00ff"/><circle cx="1295.0" cy="433.0" r="4.55" fill="#0a3f5f"/><circle cx="1321.5" cy="433.0" r="4.55" fill="#4f5faf"/><circle cx="1321.3" cy="442.0" r="4.55" fill="#3f4f9f"/><circle cx="1324.5" cy="516.5" r="4.55" fill="#3f3faf"/><circle cx="1312.5" cy="554.5" r="4.55" fill="#1f2f7f"/><circle cx="1323.5" cy="650.0" r="4.55" fill="#0000ff"/><circle cx="1348.1" cy="274.4" r="4.4" fill="#2c2c2c"/><circle cx="1348.1" cy="276.9" r="4.4" fill="#262626"/></g><circle cx="1587" cy="358" r="5" fill="#000"/>
<rect x="1914.3" y="0" width="5.7" height="883" fill="url(#re)"/></svg>
<div style="position:absolute;left:1639px;top:640px;width:198px;height:169px;background:#333"></div>
<div style="position:absolute;left:1642px;top:643px;width:192px;height:163.2px;background:#a0a0a0"></div>
<div style="position:absolute;left:1643.3px;top:644.3px;width:189.3px;height:160.4px;background:radial-gradient(ellipse 58% 58% at 49.5% 49%,#fff 0%,rgba(255,255,255,.85) 10%,rgba(255,255,255,.5) 45%,rgba(255,255,255,.18) 78%,rgba(255,255,255,0) 100%),conic-gradient(from 0deg at 49.5% 49%,#c0ffc0 0deg,#e8ffc8 26deg,#ffffc8 38deg,#ffdca8 52deg,#ffb0b0 90deg,#ff88b4 130deg,#ffb8ff 176deg,#dcccff 206deg,#a0c4ff 230deg,#9cfff4 270deg,#7cffc4 310deg,#c0ffc0 360deg)"></div>
<svg style="position:absolute;left:0;top:0" width="1920" height="883" viewBox="0 0 1920 883"><rect x="1798.8" y="652.3" width="14.1" height="14.1" fill="none" stroke="#fff" stroke-width="1.5"/><circle cx="1808.9" cy="656.8" r="4.4" fill="#d2d0c6" stroke="#000" stroke-width="1.2"/><rect x="1729" y="715" width="17" height="17" fill="#000"/><circle cx="1735.5" cy="721.5" r="4.2" fill="#2a2a2a" stroke="#111" stroke-width="1"/><circle cx="1737.5" cy="725" r="4.2" fill="none" stroke="#333" stroke-width="1"/></svg>
</div></body></html>
